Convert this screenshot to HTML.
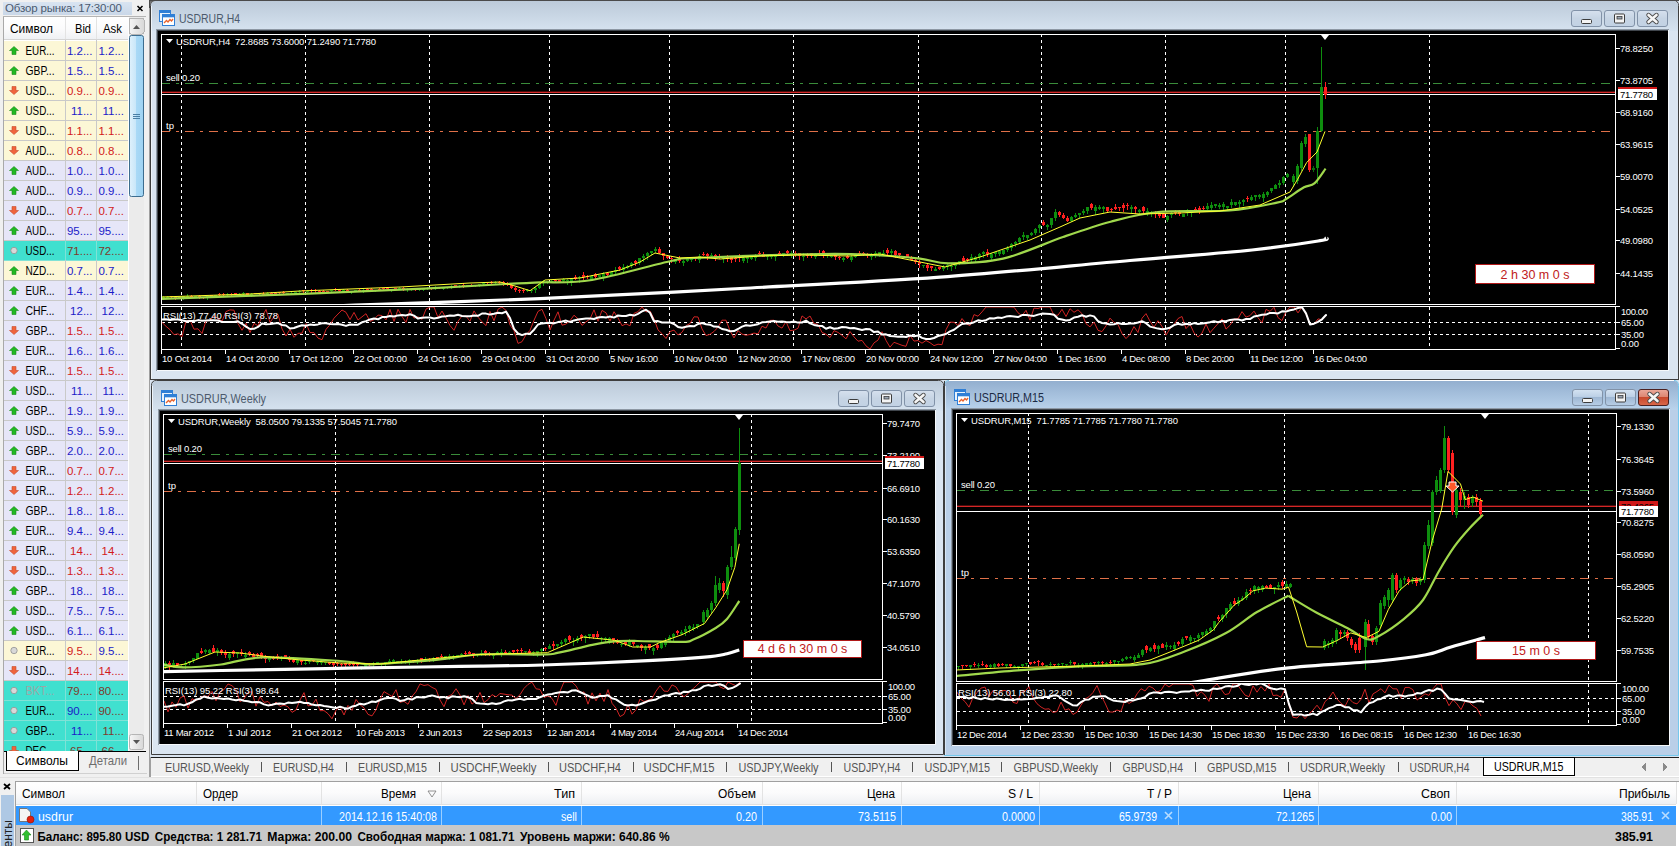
<!DOCTYPE html><html><head><meta charset="utf-8"><style>html,body{margin:0;padding:0;overflow:hidden;background:#d9e3ef}svg{display:block}text{font-family:"Liberation Sans",sans-serif;white-space:pre}</style></head><body><svg width="1679" height="846" viewBox="0 0 1679 846" shape-rendering="crispEdges" font-family="Liberation Sans, sans-serif">
<defs>
<linearGradient id="tbInactive" x1="0" y1="0" x2="0" y2="1"><stop offset="0" stop-color="#bccad9"/><stop offset="1" stop-color="#d6e3f0"/></linearGradient>
<linearGradient id="tbActive" x1="0" y1="0" x2="0" y2="1"><stop offset="0" stop-color="#93afcf"/><stop offset="1" stop-color="#bad3ec"/></linearGradient>
<linearGradient id="mwTitle" x1="0" y1="0" x2="0" y2="1"><stop offset="0" stop-color="#d9e4f1"/><stop offset="1" stop-color="#c9d7e8"/></linearGradient>
<linearGradient id="hdr" x1="0" y1="0" x2="0" y2="1"><stop offset="0" stop-color="#ffffff"/><stop offset="0.5" stop-color="#fbfbfc"/><stop offset="1" stop-color="#eef0f3"/></linearGradient>
<linearGradient id="btn" x1="0" y1="0" x2="0" y2="1"><stop offset="0" stop-color="#d6e1ee"/><stop offset="0.5" stop-color="#c6d4e4"/><stop offset="1" stop-color="#c2d2e4"/></linearGradient>
<linearGradient id="btnA" x1="0" y1="0" x2="0" y2="1"><stop offset="0" stop-color="#d5e3f2"/><stop offset="0.45" stop-color="#bcd0e6"/><stop offset="0.5" stop-color="#9fb8d4"/><stop offset="1" stop-color="#b8cee6"/></linearGradient>
<linearGradient id="btnClose" x1="0" y1="0" x2="0" y2="1"><stop offset="0" stop-color="#eba89a"/><stop offset="0.45" stop-color="#dd8672"/><stop offset="0.5" stop-color="#c8482c"/><stop offset="1" stop-color="#d9694b"/></linearGradient>
<linearGradient id="thumb" x1="0" y1="0" x2="1" y2="0"><stop offset="0" stop-color="#dff1fc"/><stop offset="0.45" stop-color="#c9e7f9"/><stop offset="0.5" stop-color="#a9d9f6"/><stop offset="1" stop-color="#9ed3f3"/></linearGradient>
<linearGradient id="sbtn" x1="0" y1="0" x2="1" y2="0"><stop offset="0" stop-color="#f6f6f6"/><stop offset="1" stop-color="#d8d8d8"/></linearGradient>
</defs>
<rect x="0" y="0" width="1679" height="846" fill="#d9e3ef" />
<rect x="0" y="0" width="149" height="777" fill="#f0f0f0" />
<rect x="149" y="0" width="1" height="777" fill="#a0a0a0" />
<rect x="3" y="2" width="129" height="13" fill="url(#mwTitle)" />
<text x="5" y="12" font-size="11.5" fill="#4a5a70" text-anchor="start" font-weight="normal" textLength="117" lengthAdjust="spacing" >Обзор рынка: 17:30:00</text>
<path d="M137.5,6 L142.5,11 M142.5,6 L137.5,11" stroke="#000" stroke-width="1.5" fill="none" shape-rendering="geometricPrecision"/>
<rect x="3" y="16" width="126" height="736" fill="#ffffff" />
<rect x="3" y="16" width="1" height="736" fill="#a9a9a9" />
<rect x="3" y="16" width="143" height="1" fill="#b4b4b4" />
<rect x="4" y="17" width="124" height="23" fill="url(#hdr)" />
<rect x="65" y="17" width="1" height="23" fill="#e3e3e3" />
<rect x="96" y="17" width="1" height="23" fill="#e3e3e3" />
<rect x="4" y="39" width="124" height="1" fill="#d5d5d5" />
<text x="10" y="33" font-size="12" fill="#000" text-anchor="start" font-weight="normal" textLength="43" lengthAdjust="spacingAndGlyphs" >Символ</text>
<text x="75" y="33" font-size="12" fill="#000" text-anchor="start" font-weight="normal" textLength="16" lengthAdjust="spacingAndGlyphs" >Bid</text>
<text x="103" y="33" font-size="12" fill="#000" text-anchor="start" font-weight="normal" textLength="19" lengthAdjust="spacingAndGlyphs" >Ask</text>
<g>
<clipPath id="mwclip"><rect x="4" y="40" width="124" height="711"/></clipPath>
<g clip-path="url(#mwclip)">
<rect x="4" y="41" width="124" height="19" fill="#fcf7d6" />
<rect x="4" y="60" width="124" height="1" fill="#c9c9c9" />
<rect x="65" y="40" width="1" height="20" fill="#c9c9c9" />
<rect x="96" y="40" width="1" height="20" fill="#c9c9c9" />
<path d="M14,46.5 L18.5,50.5 L16,50.5 L16,54.5 L12,54.5 L12,50.5 L9.5,50.5 Z" fill="#22b822" stroke="#1c8a1c" stroke-width="0.6" shape-rendering="geometricPrecision"/>
<text x="25.5" y="55" font-size="12" fill="#000" text-anchor="start" font-weight="normal" textLength="29" lengthAdjust="spacingAndGlyphs" >EUR...</text>
<text x="92.5" y="55" font-size="11.5" fill="#1b1bc8" text-anchor="end" font-weight="normal" >1.2...</text>
<text x="124" y="55" font-size="11.5" fill="#1b1bc8" text-anchor="end" font-weight="normal" >1.2...</text>
<rect x="4" y="61" width="124" height="19" fill="#fcf7d6" />
<rect x="4" y="80" width="124" height="1" fill="#c9c9c9" />
<rect x="65" y="60" width="1" height="20" fill="#c9c9c9" />
<rect x="96" y="60" width="1" height="20" fill="#c9c9c9" />
<path d="M14,66.5 L18.5,70.5 L16,70.5 L16,74.5 L12,74.5 L12,70.5 L9.5,70.5 Z" fill="#22b822" stroke="#1c8a1c" stroke-width="0.6" shape-rendering="geometricPrecision"/>
<text x="25.5" y="75" font-size="12" fill="#000" text-anchor="start" font-weight="normal" textLength="29" lengthAdjust="spacingAndGlyphs" >GBP...</text>
<text x="92.5" y="75" font-size="11.5" fill="#1b1bc8" text-anchor="end" font-weight="normal" >1.5...</text>
<text x="124" y="75" font-size="11.5" fill="#1b1bc8" text-anchor="end" font-weight="normal" >1.5...</text>
<rect x="4" y="81" width="124" height="19" fill="#fcf7d6" />
<rect x="4" y="100" width="124" height="1" fill="#c9c9c9" />
<rect x="65" y="80" width="1" height="20" fill="#c9c9c9" />
<rect x="96" y="80" width="1" height="20" fill="#c9c9c9" />
<path d="M14,94.5 L18.5,90.5 L16,90.5 L16,86.5 L12,86.5 L12,90.5 L9.5,90.5 Z" fill="#f0643c" stroke="#c84a2a" stroke-width="0.6" shape-rendering="geometricPrecision"/>
<text x="25.5" y="95" font-size="12" fill="#000" text-anchor="start" font-weight="normal" textLength="29" lengthAdjust="spacingAndGlyphs" >USD...</text>
<text x="92.5" y="95" font-size="11.5" fill="#d21a1a" text-anchor="end" font-weight="normal" >0.9...</text>
<text x="124" y="95" font-size="11.5" fill="#d21a1a" text-anchor="end" font-weight="normal" >0.9...</text>
<rect x="4" y="101" width="124" height="19" fill="#fcf7d6" />
<rect x="4" y="120" width="124" height="1" fill="#c9c9c9" />
<rect x="65" y="100" width="1" height="20" fill="#c9c9c9" />
<rect x="96" y="100" width="1" height="20" fill="#c9c9c9" />
<path d="M14,106.5 L18.5,110.5 L16,110.5 L16,114.5 L12,114.5 L12,110.5 L9.5,110.5 Z" fill="#22b822" stroke="#1c8a1c" stroke-width="0.6" shape-rendering="geometricPrecision"/>
<text x="25.5" y="115" font-size="12" fill="#000" text-anchor="start" font-weight="normal" textLength="29" lengthAdjust="spacingAndGlyphs" >USD...</text>
<text x="92.5" y="115" font-size="11.5" fill="#1b1bc8" text-anchor="end" font-weight="normal" >11...</text>
<text x="124" y="115" font-size="11.5" fill="#1b1bc8" text-anchor="end" font-weight="normal" >11...</text>
<rect x="4" y="121" width="124" height="19" fill="#fcf7d6" />
<rect x="4" y="140" width="124" height="1" fill="#c9c9c9" />
<rect x="65" y="120" width="1" height="20" fill="#c9c9c9" />
<rect x="96" y="120" width="1" height="20" fill="#c9c9c9" />
<path d="M14,134.5 L18.5,130.5 L16,130.5 L16,126.5 L12,126.5 L12,130.5 L9.5,130.5 Z" fill="#f0643c" stroke="#c84a2a" stroke-width="0.6" shape-rendering="geometricPrecision"/>
<text x="25.5" y="135" font-size="12" fill="#000" text-anchor="start" font-weight="normal" textLength="29" lengthAdjust="spacingAndGlyphs" >USD...</text>
<text x="92.5" y="135" font-size="11.5" fill="#d21a1a" text-anchor="end" font-weight="normal" >1.1...</text>
<text x="124" y="135" font-size="11.5" fill="#d21a1a" text-anchor="end" font-weight="normal" >1.1...</text>
<rect x="4" y="141" width="124" height="19" fill="#fcf7d6" />
<rect x="4" y="160" width="124" height="1" fill="#c9c9c9" />
<rect x="65" y="140" width="1" height="20" fill="#c9c9c9" />
<rect x="96" y="140" width="1" height="20" fill="#c9c9c9" />
<path d="M14,154.5 L18.5,150.5 L16,150.5 L16,146.5 L12,146.5 L12,150.5 L9.5,150.5 Z" fill="#f0643c" stroke="#c84a2a" stroke-width="0.6" shape-rendering="geometricPrecision"/>
<text x="25.5" y="155" font-size="12" fill="#000" text-anchor="start" font-weight="normal" textLength="29" lengthAdjust="spacingAndGlyphs" >AUD...</text>
<text x="92.5" y="155" font-size="11.5" fill="#d21a1a" text-anchor="end" font-weight="normal" >0.8...</text>
<text x="124" y="155" font-size="11.5" fill="#d21a1a" text-anchor="end" font-weight="normal" >0.8...</text>
<rect x="4" y="161" width="124" height="19" fill="#e6e6f8" />
<rect x="4" y="180" width="124" height="1" fill="#c9c9c9" />
<rect x="65" y="160" width="1" height="20" fill="#c9c9c9" />
<rect x="96" y="160" width="1" height="20" fill="#c9c9c9" />
<path d="M14,166.5 L18.5,170.5 L16,170.5 L16,174.5 L12,174.5 L12,170.5 L9.5,170.5 Z" fill="#22b822" stroke="#1c8a1c" stroke-width="0.6" shape-rendering="geometricPrecision"/>
<text x="25.5" y="175" font-size="12" fill="#000" text-anchor="start" font-weight="normal" textLength="29" lengthAdjust="spacingAndGlyphs" >AUD...</text>
<text x="92.5" y="175" font-size="11.5" fill="#1b1bc8" text-anchor="end" font-weight="normal" >1.0...</text>
<text x="124" y="175" font-size="11.5" fill="#1b1bc8" text-anchor="end" font-weight="normal" >1.0...</text>
<rect x="4" y="181" width="124" height="19" fill="#e6e6f8" />
<rect x="4" y="200" width="124" height="1" fill="#c9c9c9" />
<rect x="65" y="180" width="1" height="20" fill="#c9c9c9" />
<rect x="96" y="180" width="1" height="20" fill="#c9c9c9" />
<path d="M14,186.5 L18.5,190.5 L16,190.5 L16,194.5 L12,194.5 L12,190.5 L9.5,190.5 Z" fill="#22b822" stroke="#1c8a1c" stroke-width="0.6" shape-rendering="geometricPrecision"/>
<text x="25.5" y="195" font-size="12" fill="#000" text-anchor="start" font-weight="normal" textLength="29" lengthAdjust="spacingAndGlyphs" >AUD...</text>
<text x="92.5" y="195" font-size="11.5" fill="#1b1bc8" text-anchor="end" font-weight="normal" >0.9...</text>
<text x="124" y="195" font-size="11.5" fill="#1b1bc8" text-anchor="end" font-weight="normal" >0.9...</text>
<rect x="4" y="201" width="124" height="19" fill="#e6e6f8" />
<rect x="4" y="220" width="124" height="1" fill="#c9c9c9" />
<rect x="65" y="200" width="1" height="20" fill="#c9c9c9" />
<rect x="96" y="200" width="1" height="20" fill="#c9c9c9" />
<path d="M14,214.5 L18.5,210.5 L16,210.5 L16,206.5 L12,206.5 L12,210.5 L9.5,210.5 Z" fill="#f0643c" stroke="#c84a2a" stroke-width="0.6" shape-rendering="geometricPrecision"/>
<text x="25.5" y="215" font-size="12" fill="#000" text-anchor="start" font-weight="normal" textLength="29" lengthAdjust="spacingAndGlyphs" >AUD...</text>
<text x="92.5" y="215" font-size="11.5" fill="#d21a1a" text-anchor="end" font-weight="normal" >0.7...</text>
<text x="124" y="215" font-size="11.5" fill="#d21a1a" text-anchor="end" font-weight="normal" >0.7...</text>
<rect x="4" y="221" width="124" height="19" fill="#e6e6f8" />
<rect x="4" y="240" width="124" height="1" fill="#c9c9c9" />
<rect x="65" y="220" width="1" height="20" fill="#c9c9c9" />
<rect x="96" y="220" width="1" height="20" fill="#c9c9c9" />
<path d="M14,226.5 L18.5,230.5 L16,230.5 L16,234.5 L12,234.5 L12,230.5 L9.5,230.5 Z" fill="#22b822" stroke="#1c8a1c" stroke-width="0.6" shape-rendering="geometricPrecision"/>
<text x="25.5" y="235" font-size="12" fill="#000" text-anchor="start" font-weight="normal" textLength="29" lengthAdjust="spacingAndGlyphs" >AUD...</text>
<text x="92.5" y="235" font-size="11.5" fill="#1b1bc8" text-anchor="end" font-weight="normal" >95....</text>
<text x="124" y="235" font-size="11.5" fill="#1b1bc8" text-anchor="end" font-weight="normal" >95....</text>
<rect x="4" y="241" width="124" height="19" fill="#40e0cf" />
<rect x="4" y="260" width="124" height="1" fill="#7fe2d6" />
<rect x="65" y="240" width="1" height="20" fill="#7fe2d6" />
<rect x="96" y="240" width="1" height="20" fill="#7fe2d6" />
<circle cx="14" cy="250.5" r="3.2" fill="#d8d8d8" stroke="#909090" stroke-width="0.8" shape-rendering="geometricPrecision"/>
<text x="25.5" y="255" font-size="12" fill="#000" text-anchor="start" font-weight="normal" textLength="29" lengthAdjust="spacingAndGlyphs" >USD...</text>
<text x="92.5" y="255" font-size="11.5" fill="#7e3a2c" text-anchor="end" font-weight="normal" >71....</text>
<text x="124" y="255" font-size="11.5" fill="#7e3a2c" text-anchor="end" font-weight="normal" >72....</text>
<rect x="4" y="261" width="124" height="19" fill="#fcf7d6" />
<rect x="4" y="280" width="124" height="1" fill="#c9c9c9" />
<rect x="65" y="260" width="1" height="20" fill="#c9c9c9" />
<rect x="96" y="260" width="1" height="20" fill="#c9c9c9" />
<path d="M14,266.5 L18.5,270.5 L16,270.5 L16,274.5 L12,274.5 L12,270.5 L9.5,270.5 Z" fill="#22b822" stroke="#1c8a1c" stroke-width="0.6" shape-rendering="geometricPrecision"/>
<text x="25.5" y="275" font-size="12" fill="#000" text-anchor="start" font-weight="normal" textLength="29" lengthAdjust="spacingAndGlyphs" >NZD...</text>
<text x="92.5" y="275" font-size="11.5" fill="#1b1bc8" text-anchor="end" font-weight="normal" >0.7...</text>
<text x="124" y="275" font-size="11.5" fill="#1b1bc8" text-anchor="end" font-weight="normal" >0.7...</text>
<rect x="4" y="281" width="124" height="19" fill="#e6e6f8" />
<rect x="4" y="300" width="124" height="1" fill="#c9c9c9" />
<rect x="65" y="280" width="1" height="20" fill="#c9c9c9" />
<rect x="96" y="280" width="1" height="20" fill="#c9c9c9" />
<path d="M14,286.5 L18.5,290.5 L16,290.5 L16,294.5 L12,294.5 L12,290.5 L9.5,290.5 Z" fill="#22b822" stroke="#1c8a1c" stroke-width="0.6" shape-rendering="geometricPrecision"/>
<text x="25.5" y="295" font-size="12" fill="#000" text-anchor="start" font-weight="normal" textLength="29" lengthAdjust="spacingAndGlyphs" >EUR...</text>
<text x="92.5" y="295" font-size="11.5" fill="#1b1bc8" text-anchor="end" font-weight="normal" >1.4...</text>
<text x="124" y="295" font-size="11.5" fill="#1b1bc8" text-anchor="end" font-weight="normal" >1.4...</text>
<rect x="4" y="301" width="124" height="19" fill="#e6e6f8" />
<rect x="4" y="320" width="124" height="1" fill="#c9c9c9" />
<rect x="65" y="300" width="1" height="20" fill="#c9c9c9" />
<rect x="96" y="300" width="1" height="20" fill="#c9c9c9" />
<path d="M14,306.5 L18.5,310.5 L16,310.5 L16,314.5 L12,314.5 L12,310.5 L9.5,310.5 Z" fill="#22b822" stroke="#1c8a1c" stroke-width="0.6" shape-rendering="geometricPrecision"/>
<text x="25.5" y="315" font-size="12" fill="#000" text-anchor="start" font-weight="normal" textLength="29" lengthAdjust="spacingAndGlyphs" >CHF...</text>
<text x="92.5" y="315" font-size="11.5" fill="#1b1bc8" text-anchor="end" font-weight="normal" >12...</text>
<text x="124" y="315" font-size="11.5" fill="#1b1bc8" text-anchor="end" font-weight="normal" >12...</text>
<rect x="4" y="321" width="124" height="19" fill="#e6e6f8" />
<rect x="4" y="340" width="124" height="1" fill="#c9c9c9" />
<rect x="65" y="320" width="1" height="20" fill="#c9c9c9" />
<rect x="96" y="320" width="1" height="20" fill="#c9c9c9" />
<path d="M14,334.5 L18.5,330.5 L16,330.5 L16,326.5 L12,326.5 L12,330.5 L9.5,330.5 Z" fill="#f0643c" stroke="#c84a2a" stroke-width="0.6" shape-rendering="geometricPrecision"/>
<text x="25.5" y="335" font-size="12" fill="#000" text-anchor="start" font-weight="normal" textLength="29" lengthAdjust="spacingAndGlyphs" >GBP...</text>
<text x="92.5" y="335" font-size="11.5" fill="#d21a1a" text-anchor="end" font-weight="normal" >1.5...</text>
<text x="124" y="335" font-size="11.5" fill="#d21a1a" text-anchor="end" font-weight="normal" >1.5...</text>
<rect x="4" y="341" width="124" height="19" fill="#e6e6f8" />
<rect x="4" y="360" width="124" height="1" fill="#c9c9c9" />
<rect x="65" y="340" width="1" height="20" fill="#c9c9c9" />
<rect x="96" y="340" width="1" height="20" fill="#c9c9c9" />
<path d="M14,346.5 L18.5,350.5 L16,350.5 L16,354.5 L12,354.5 L12,350.5 L9.5,350.5 Z" fill="#22b822" stroke="#1c8a1c" stroke-width="0.6" shape-rendering="geometricPrecision"/>
<text x="25.5" y="355" font-size="12" fill="#000" text-anchor="start" font-weight="normal" textLength="29" lengthAdjust="spacingAndGlyphs" >EUR...</text>
<text x="92.5" y="355" font-size="11.5" fill="#1b1bc8" text-anchor="end" font-weight="normal" >1.6...</text>
<text x="124" y="355" font-size="11.5" fill="#1b1bc8" text-anchor="end" font-weight="normal" >1.6...</text>
<rect x="4" y="361" width="124" height="19" fill="#e6e6f8" />
<rect x="4" y="380" width="124" height="1" fill="#c9c9c9" />
<rect x="65" y="360" width="1" height="20" fill="#c9c9c9" />
<rect x="96" y="360" width="1" height="20" fill="#c9c9c9" />
<path d="M14,374.5 L18.5,370.5 L16,370.5 L16,366.5 L12,366.5 L12,370.5 L9.5,370.5 Z" fill="#f0643c" stroke="#c84a2a" stroke-width="0.6" shape-rendering="geometricPrecision"/>
<text x="25.5" y="375" font-size="12" fill="#000" text-anchor="start" font-weight="normal" textLength="29" lengthAdjust="spacingAndGlyphs" >EUR...</text>
<text x="92.5" y="375" font-size="11.5" fill="#d21a1a" text-anchor="end" font-weight="normal" >1.5...</text>
<text x="124" y="375" font-size="11.5" fill="#d21a1a" text-anchor="end" font-weight="normal" >1.5...</text>
<rect x="4" y="381" width="124" height="19" fill="#e6e6f8" />
<rect x="4" y="400" width="124" height="1" fill="#c9c9c9" />
<rect x="65" y="380" width="1" height="20" fill="#c9c9c9" />
<rect x="96" y="380" width="1" height="20" fill="#c9c9c9" />
<path d="M14,386.5 L18.5,390.5 L16,390.5 L16,394.5 L12,394.5 L12,390.5 L9.5,390.5 Z" fill="#22b822" stroke="#1c8a1c" stroke-width="0.6" shape-rendering="geometricPrecision"/>
<text x="25.5" y="395" font-size="12" fill="#000" text-anchor="start" font-weight="normal" textLength="29" lengthAdjust="spacingAndGlyphs" >USD...</text>
<text x="92.5" y="395" font-size="11.5" fill="#1b1bc8" text-anchor="end" font-weight="normal" >11...</text>
<text x="124" y="395" font-size="11.5" fill="#1b1bc8" text-anchor="end" font-weight="normal" >11...</text>
<rect x="4" y="401" width="124" height="19" fill="#e6e6f8" />
<rect x="4" y="420" width="124" height="1" fill="#c9c9c9" />
<rect x="65" y="400" width="1" height="20" fill="#c9c9c9" />
<rect x="96" y="400" width="1" height="20" fill="#c9c9c9" />
<path d="M14,406.5 L18.5,410.5 L16,410.5 L16,414.5 L12,414.5 L12,410.5 L9.5,410.5 Z" fill="#22b822" stroke="#1c8a1c" stroke-width="0.6" shape-rendering="geometricPrecision"/>
<text x="25.5" y="415" font-size="12" fill="#000" text-anchor="start" font-weight="normal" textLength="29" lengthAdjust="spacingAndGlyphs" >GBP...</text>
<text x="92.5" y="415" font-size="11.5" fill="#1b1bc8" text-anchor="end" font-weight="normal" >1.9...</text>
<text x="124" y="415" font-size="11.5" fill="#1b1bc8" text-anchor="end" font-weight="normal" >1.9...</text>
<rect x="4" y="421" width="124" height="19" fill="#e6e6f8" />
<rect x="4" y="440" width="124" height="1" fill="#c9c9c9" />
<rect x="65" y="420" width="1" height="20" fill="#c9c9c9" />
<rect x="96" y="420" width="1" height="20" fill="#c9c9c9" />
<path d="M14,426.5 L18.5,430.5 L16,430.5 L16,434.5 L12,434.5 L12,430.5 L9.5,430.5 Z" fill="#22b822" stroke="#1c8a1c" stroke-width="0.6" shape-rendering="geometricPrecision"/>
<text x="25.5" y="435" font-size="12" fill="#000" text-anchor="start" font-weight="normal" textLength="29" lengthAdjust="spacingAndGlyphs" >USD...</text>
<text x="92.5" y="435" font-size="11.5" fill="#1b1bc8" text-anchor="end" font-weight="normal" >5.9...</text>
<text x="124" y="435" font-size="11.5" fill="#1b1bc8" text-anchor="end" font-weight="normal" >5.9...</text>
<rect x="4" y="441" width="124" height="19" fill="#e6e6f8" />
<rect x="4" y="460" width="124" height="1" fill="#c9c9c9" />
<rect x="65" y="440" width="1" height="20" fill="#c9c9c9" />
<rect x="96" y="440" width="1" height="20" fill="#c9c9c9" />
<path d="M14,446.5 L18.5,450.5 L16,450.5 L16,454.5 L12,454.5 L12,450.5 L9.5,450.5 Z" fill="#22b822" stroke="#1c8a1c" stroke-width="0.6" shape-rendering="geometricPrecision"/>
<text x="25.5" y="455" font-size="12" fill="#000" text-anchor="start" font-weight="normal" textLength="29" lengthAdjust="spacingAndGlyphs" >GBP...</text>
<text x="92.5" y="455" font-size="11.5" fill="#1b1bc8" text-anchor="end" font-weight="normal" >2.0...</text>
<text x="124" y="455" font-size="11.5" fill="#1b1bc8" text-anchor="end" font-weight="normal" >2.0...</text>
<rect x="4" y="461" width="124" height="19" fill="#e6e6f8" />
<rect x="4" y="480" width="124" height="1" fill="#c9c9c9" />
<rect x="65" y="460" width="1" height="20" fill="#c9c9c9" />
<rect x="96" y="460" width="1" height="20" fill="#c9c9c9" />
<path d="M14,474.5 L18.5,470.5 L16,470.5 L16,466.5 L12,466.5 L12,470.5 L9.5,470.5 Z" fill="#f0643c" stroke="#c84a2a" stroke-width="0.6" shape-rendering="geometricPrecision"/>
<text x="25.5" y="475" font-size="12" fill="#000" text-anchor="start" font-weight="normal" textLength="29" lengthAdjust="spacingAndGlyphs" >EUR...</text>
<text x="92.5" y="475" font-size="11.5" fill="#d21a1a" text-anchor="end" font-weight="normal" >0.7...</text>
<text x="124" y="475" font-size="11.5" fill="#d21a1a" text-anchor="end" font-weight="normal" >0.7...</text>
<rect x="4" y="481" width="124" height="19" fill="#e6e6f8" />
<rect x="4" y="500" width="124" height="1" fill="#c9c9c9" />
<rect x="65" y="480" width="1" height="20" fill="#c9c9c9" />
<rect x="96" y="480" width="1" height="20" fill="#c9c9c9" />
<path d="M14,494.5 L18.5,490.5 L16,490.5 L16,486.5 L12,486.5 L12,490.5 L9.5,490.5 Z" fill="#f0643c" stroke="#c84a2a" stroke-width="0.6" shape-rendering="geometricPrecision"/>
<text x="25.5" y="495" font-size="12" fill="#000" text-anchor="start" font-weight="normal" textLength="29" lengthAdjust="spacingAndGlyphs" >EUR...</text>
<text x="92.5" y="495" font-size="11.5" fill="#d21a1a" text-anchor="end" font-weight="normal" >1.2...</text>
<text x="124" y="495" font-size="11.5" fill="#d21a1a" text-anchor="end" font-weight="normal" >1.2...</text>
<rect x="4" y="501" width="124" height="19" fill="#e6e6f8" />
<rect x="4" y="520" width="124" height="1" fill="#c9c9c9" />
<rect x="65" y="500" width="1" height="20" fill="#c9c9c9" />
<rect x="96" y="500" width="1" height="20" fill="#c9c9c9" />
<path d="M14,506.5 L18.5,510.5 L16,510.5 L16,514.5 L12,514.5 L12,510.5 L9.5,510.5 Z" fill="#22b822" stroke="#1c8a1c" stroke-width="0.6" shape-rendering="geometricPrecision"/>
<text x="25.5" y="515" font-size="12" fill="#000" text-anchor="start" font-weight="normal" textLength="29" lengthAdjust="spacingAndGlyphs" >GBP...</text>
<text x="92.5" y="515" font-size="11.5" fill="#1b1bc8" text-anchor="end" font-weight="normal" >1.8...</text>
<text x="124" y="515" font-size="11.5" fill="#1b1bc8" text-anchor="end" font-weight="normal" >1.8...</text>
<rect x="4" y="521" width="124" height="19" fill="#e6e6f8" />
<rect x="4" y="540" width="124" height="1" fill="#c9c9c9" />
<rect x="65" y="520" width="1" height="20" fill="#c9c9c9" />
<rect x="96" y="520" width="1" height="20" fill="#c9c9c9" />
<path d="M14,526.5 L18.5,530.5 L16,530.5 L16,534.5 L12,534.5 L12,530.5 L9.5,530.5 Z" fill="#22b822" stroke="#1c8a1c" stroke-width="0.6" shape-rendering="geometricPrecision"/>
<text x="25.5" y="535" font-size="12" fill="#000" text-anchor="start" font-weight="normal" textLength="29" lengthAdjust="spacingAndGlyphs" >EUR...</text>
<text x="92.5" y="535" font-size="11.5" fill="#1b1bc8" text-anchor="end" font-weight="normal" >9.4...</text>
<text x="124" y="535" font-size="11.5" fill="#1b1bc8" text-anchor="end" font-weight="normal" >9.4...</text>
<rect x="4" y="541" width="124" height="19" fill="#e6e6f8" />
<rect x="4" y="560" width="124" height="1" fill="#c9c9c9" />
<rect x="65" y="540" width="1" height="20" fill="#c9c9c9" />
<rect x="96" y="540" width="1" height="20" fill="#c9c9c9" />
<path d="M14,554.5 L18.5,550.5 L16,550.5 L16,546.5 L12,546.5 L12,550.5 L9.5,550.5 Z" fill="#f0643c" stroke="#c84a2a" stroke-width="0.6" shape-rendering="geometricPrecision"/>
<text x="25.5" y="555" font-size="12" fill="#000" text-anchor="start" font-weight="normal" textLength="29" lengthAdjust="spacingAndGlyphs" >EUR...</text>
<text x="92.5" y="555" font-size="11.5" fill="#d21a1a" text-anchor="end" font-weight="normal" >14...</text>
<text x="124" y="555" font-size="11.5" fill="#d21a1a" text-anchor="end" font-weight="normal" >14...</text>
<rect x="4" y="561" width="124" height="19" fill="#e6e6f8" />
<rect x="4" y="580" width="124" height="1" fill="#c9c9c9" />
<rect x="65" y="560" width="1" height="20" fill="#c9c9c9" />
<rect x="96" y="560" width="1" height="20" fill="#c9c9c9" />
<path d="M14,574.5 L18.5,570.5 L16,570.5 L16,566.5 L12,566.5 L12,570.5 L9.5,570.5 Z" fill="#f0643c" stroke="#c84a2a" stroke-width="0.6" shape-rendering="geometricPrecision"/>
<text x="25.5" y="575" font-size="12" fill="#000" text-anchor="start" font-weight="normal" textLength="29" lengthAdjust="spacingAndGlyphs" >USD...</text>
<text x="92.5" y="575" font-size="11.5" fill="#d21a1a" text-anchor="end" font-weight="normal" >1.3...</text>
<text x="124" y="575" font-size="11.5" fill="#d21a1a" text-anchor="end" font-weight="normal" >1.3...</text>
<rect x="4" y="581" width="124" height="19" fill="#e6e6f8" />
<rect x="4" y="600" width="124" height="1" fill="#c9c9c9" />
<rect x="65" y="580" width="1" height="20" fill="#c9c9c9" />
<rect x="96" y="580" width="1" height="20" fill="#c9c9c9" />
<path d="M14,586.5 L18.5,590.5 L16,590.5 L16,594.5 L12,594.5 L12,590.5 L9.5,590.5 Z" fill="#22b822" stroke="#1c8a1c" stroke-width="0.6" shape-rendering="geometricPrecision"/>
<text x="25.5" y="595" font-size="12" fill="#000" text-anchor="start" font-weight="normal" textLength="29" lengthAdjust="spacingAndGlyphs" >GBP...</text>
<text x="92.5" y="595" font-size="11.5" fill="#1b1bc8" text-anchor="end" font-weight="normal" >18...</text>
<text x="124" y="595" font-size="11.5" fill="#1b1bc8" text-anchor="end" font-weight="normal" >18...</text>
<rect x="4" y="601" width="124" height="19" fill="#e6e6f8" />
<rect x="4" y="620" width="124" height="1" fill="#c9c9c9" />
<rect x="65" y="600" width="1" height="20" fill="#c9c9c9" />
<rect x="96" y="600" width="1" height="20" fill="#c9c9c9" />
<path d="M14,606.5 L18.5,610.5 L16,610.5 L16,614.5 L12,614.5 L12,610.5 L9.5,610.5 Z" fill="#22b822" stroke="#1c8a1c" stroke-width="0.6" shape-rendering="geometricPrecision"/>
<text x="25.5" y="615" font-size="12" fill="#000" text-anchor="start" font-weight="normal" textLength="29" lengthAdjust="spacingAndGlyphs" >USD...</text>
<text x="92.5" y="615" font-size="11.5" fill="#1b1bc8" text-anchor="end" font-weight="normal" >7.5...</text>
<text x="124" y="615" font-size="11.5" fill="#1b1bc8" text-anchor="end" font-weight="normal" >7.5...</text>
<rect x="4" y="621" width="124" height="19" fill="#e6e6f8" />
<rect x="4" y="640" width="124" height="1" fill="#c9c9c9" />
<rect x="65" y="620" width="1" height="20" fill="#c9c9c9" />
<rect x="96" y="620" width="1" height="20" fill="#c9c9c9" />
<path d="M14,626.5 L18.5,630.5 L16,630.5 L16,634.5 L12,634.5 L12,630.5 L9.5,630.5 Z" fill="#22b822" stroke="#1c8a1c" stroke-width="0.6" shape-rendering="geometricPrecision"/>
<text x="25.5" y="635" font-size="12" fill="#000" text-anchor="start" font-weight="normal" textLength="29" lengthAdjust="spacingAndGlyphs" >USD...</text>
<text x="92.5" y="635" font-size="11.5" fill="#1b1bc8" text-anchor="end" font-weight="normal" >6.1...</text>
<text x="124" y="635" font-size="11.5" fill="#1b1bc8" text-anchor="end" font-weight="normal" >6.1...</text>
<rect x="4" y="641" width="124" height="19" fill="#fcf7d6" />
<rect x="4" y="660" width="124" height="1" fill="#c9c9c9" />
<rect x="65" y="640" width="1" height="20" fill="#c9c9c9" />
<rect x="96" y="640" width="1" height="20" fill="#c9c9c9" />
<circle cx="14" cy="650.5" r="3.2" fill="#d8d8d8" stroke="#909090" stroke-width="0.8" shape-rendering="geometricPrecision"/>
<text x="25.5" y="655" font-size="12" fill="#000" text-anchor="start" font-weight="normal" textLength="29" lengthAdjust="spacingAndGlyphs" >EUR...</text>
<text x="92.5" y="655" font-size="11.5" fill="#d21a1a" text-anchor="end" font-weight="normal" >9.5...</text>
<text x="124" y="655" font-size="11.5" fill="#1b1bc8" text-anchor="end" font-weight="normal" >9.5...</text>
<rect x="4" y="661" width="124" height="19" fill="#e6e6f8" />
<rect x="4" y="680" width="124" height="1" fill="#c9c9c9" />
<rect x="65" y="660" width="1" height="20" fill="#c9c9c9" />
<rect x="96" y="660" width="1" height="20" fill="#c9c9c9" />
<path d="M14,674.5 L18.5,670.5 L16,670.5 L16,666.5 L12,666.5 L12,670.5 L9.5,670.5 Z" fill="#f0643c" stroke="#c84a2a" stroke-width="0.6" shape-rendering="geometricPrecision"/>
<text x="25.5" y="675" font-size="12" fill="#000" text-anchor="start" font-weight="normal" textLength="29" lengthAdjust="spacingAndGlyphs" >USD...</text>
<text x="92.5" y="675" font-size="11.5" fill="#d21a1a" text-anchor="end" font-weight="normal" >14....</text>
<text x="124" y="675" font-size="11.5" fill="#d21a1a" text-anchor="end" font-weight="normal" >14....</text>
<rect x="4" y="681" width="124" height="19" fill="#40e0cf" />
<rect x="4" y="700" width="124" height="1" fill="#7fe2d6" />
<rect x="65" y="680" width="1" height="20" fill="#7fe2d6" />
<rect x="96" y="680" width="1" height="20" fill="#7fe2d6" />
<circle cx="14" cy="690.5" r="3.2" fill="#d8d8d8" stroke="#909090" stroke-width="0.8" shape-rendering="geometricPrecision"/>
<text x="25.5" y="695" font-size="12" fill="#9aa8a6" text-anchor="start" font-weight="normal" textLength="29" lengthAdjust="spacingAndGlyphs" >BKT...</text>
<text x="92.5" y="695" font-size="11.5" fill="#7e3a2c" text-anchor="end" font-weight="normal" >79....</text>
<text x="124" y="695" font-size="11.5" fill="#7e3a2c" text-anchor="end" font-weight="normal" >80....</text>
<rect x="4" y="701" width="124" height="19" fill="#40e0cf" />
<rect x="4" y="720" width="124" height="1" fill="#7fe2d6" />
<rect x="65" y="700" width="1" height="20" fill="#7fe2d6" />
<rect x="96" y="700" width="1" height="20" fill="#7fe2d6" />
<circle cx="14" cy="710.5" r="3.2" fill="#d8d8d8" stroke="#909090" stroke-width="0.8" shape-rendering="geometricPrecision"/>
<text x="25.5" y="715" font-size="12" fill="#000" text-anchor="start" font-weight="normal" textLength="29" lengthAdjust="spacingAndGlyphs" >EUR...</text>
<text x="92.5" y="715" font-size="11.5" fill="#1b1bc8" text-anchor="end" font-weight="normal" >90....</text>
<text x="124" y="715" font-size="11.5" fill="#7e3a2c" text-anchor="end" font-weight="normal" >90....</text>
<rect x="4" y="721" width="124" height="19" fill="#40e0cf" />
<rect x="4" y="740" width="124" height="1" fill="#7fe2d6" />
<rect x="65" y="720" width="1" height="20" fill="#7fe2d6" />
<rect x="96" y="720" width="1" height="20" fill="#7fe2d6" />
<circle cx="14" cy="730.5" r="3.2" fill="#d8d8d8" stroke="#909090" stroke-width="0.8" shape-rendering="geometricPrecision"/>
<text x="25.5" y="735" font-size="12" fill="#000" text-anchor="start" font-weight="normal" textLength="29" lengthAdjust="spacingAndGlyphs" >GBP...</text>
<text x="92.5" y="735" font-size="11.5" fill="#1b1bc8" text-anchor="end" font-weight="normal" >11...</text>
<text x="124" y="735" font-size="11.5" fill="#7e3a2c" text-anchor="end" font-weight="normal" >11...</text>
<rect x="4" y="741" width="124" height="19" fill="#40e0cf" />
<rect x="4" y="760" width="124" height="1" fill="#7fe2d6" />
<rect x="65" y="740" width="1" height="20" fill="#7fe2d6" />
<rect x="96" y="740" width="1" height="20" fill="#7fe2d6" />
<path d="M14,754.5 L18.5,750.5 L16,750.5 L16,746.5 L12,746.5 L12,750.5 L9.5,750.5 Z" fill="#f0643c" stroke="#c84a2a" stroke-width="0.6" shape-rendering="geometricPrecision"/>
<text x="25.5" y="755" font-size="12" fill="#000" text-anchor="start" font-weight="normal" textLength="29" lengthAdjust="spacingAndGlyphs" >DEC...</text>
<text x="92.5" y="755" font-size="11.5" fill="#7e3a2c" text-anchor="end" font-weight="normal" >65...</text>
<text x="124" y="755" font-size="11.5" fill="#7e3a2c" text-anchor="end" font-weight="normal" >66...</text>
</g></g>
<rect x="129" y="17" width="15" height="734" fill="#ebebeb" />
<rect x="129" y="18" width="15" height="16" fill="url(#sbtn)" rx="2" stroke="#b5b5b5" stroke-width="1"/>
<path d="M133,29 L136.5,25 L140,29 Z" fill="#555" shape-rendering="geometricPrecision"/>
<rect x="129.5" y="35.5" width="14" height="161" fill="url(#thumb)" rx="2" stroke="#3d6d8f" stroke-width="1" shape-rendering="geometricPrecision"/>
<rect x="133" y="114" width="7" height="1" fill="#4a7fa5" />
<rect x="133" y="116" width="7" height="1" fill="#4a7fa5" />
<rect x="133" y="118" width="7" height="1" fill="#4a7fa5" />
<rect x="129.5" y="734.5" width="14" height="15" fill="url(#sbtn)" rx="2" stroke="#b5b5b5" stroke-width="1" shape-rendering="geometricPrecision"/>
<path d="M133,740 L140,740 L136.5,744 Z" fill="#555" shape-rendering="geometricPrecision"/>
<rect x="3" y="752" width="143" height="22" fill="#f0f0f0" />
<rect x="4" y="751" width="142" height="1" fill="#000" />
<rect x="6" y="751" width="73" height="20" fill="#ffffff" />
<rect x="6" y="751" width="1" height="20" fill="#000" />
<rect x="78" y="751" width="1" height="20" fill="#000" />
<rect x="6" y="770" width="73" height="1" fill="#000" />
<text x="16" y="765" font-size="12" fill="#000" text-anchor="start" font-weight="normal" textLength="52" lengthAdjust="spacingAndGlyphs" >Символы</text>
<text x="89" y="765" font-size="12" fill="#6d6d6d" text-anchor="start" font-weight="normal" textLength="38" lengthAdjust="spacingAndGlyphs" >Детали</text>
<rect x="138" y="756" width="1" height="14" fill="#6d6d6d" />
<rect x="3" y="773" width="144" height="1" fill="#d0d0d0" />
<rect x="3" y="752" width="1" height="22" fill="#a9a9a9" />
<path d="M150.5,379.5 L150.5,5.5 Q150.5,0.5 155.5,0.5 L1673.5,0.5 Q1678.5,0.5 1678.5,5.5 L1678.5,379.5 Z" fill="#dae5f1" stroke="#3e3e3e" stroke-width="1" shape-rendering="geometricPrecision"/>
<path d="M151,31 L151,6 Q151,1 156,1 L1673,1 Q1678,1 1678,6 L1678,31 Z" fill="url(#tbInactive)" shape-rendering="geometricPrecision"/>
<rect x="151" y="6" width="1" height="373" fill="#eef4fa" />
<rect x="158" y="31" width="1510" height="339" fill="#000" />
<rect x="156" y="29" width="1513" height="1" fill="#8d98a4" />
<rect x="156" y="29" width="1" height="342" fill="#8d98a4" />
<rect x="157" y="30" width="1512" height="1" fill="#40464d" />
<rect x="157" y="30" width="1" height="341" fill="#40464d" />
<rect x="157" y="370" width="1512" height="1" fill="#f6f9fc" />
<rect x="1668" y="30" width="1" height="341" fill="#f6f9fc" />
<rect x="159" y="10" width="12" height="12" fill="#2f7fd6" />
<rect x="160" y="13" width="10" height="8" fill="#e8f2fc" />
<rect x="162" y="14" width="13" height="12" fill="#2f7fd6" />
<rect x="163" y="17" width="11" height="8" fill="#ffffff" />
<rect x="163" y="17" width="11" height="1" fill="#bcd6f2" />
<polyline points="164,23 166.5,20.5 168,22 170,19.5 171.5,21 173,19" fill="none" stroke="#e8622c" stroke-width="1.3" shape-rendering="geometricPrecision"/>
<text x="179" y="23" font-size="12.5" fill="#4c5a6c" text-anchor="start" font-weight="normal" textLength="61" lengthAdjust="spacingAndGlyphs" >USDRUR,H4</text>
<rect x="1571.5" y="10.5" width="30" height="16" rx="2.5" fill="url(#btn)" stroke="#8192a8" stroke-width="1" shape-rendering="geometricPrecision"/>
<rect x="1581.5" y="19.5" width="10" height="4" rx="1" fill="#f4f4f4" stroke="#3c3c3c" stroke-width="1" shape-rendering="geometricPrecision"/>
<rect x="1604.5" y="10.5" width="30" height="16" rx="2.5" fill="url(#btn)" stroke="#8192a8" stroke-width="1" shape-rendering="geometricPrecision"/>
<rect x="1614.5" y="14.0" width="10" height="9" rx="1" fill="#f4f4f4" stroke="#3c3c3c" stroke-width="1" shape-rendering="geometricPrecision"/>
<rect x="1617.0" y="16.5" width="5" height="2.5" fill="#9aa6b4" stroke="#3c3c3c" stroke-width="0.8" shape-rendering="geometricPrecision"/>
<rect x="1637.5" y="10.5" width="30" height="16" rx="2.5" fill="url(#btn)" stroke="#8192a8" stroke-width="1" shape-rendering="geometricPrecision"/>
<path d="M1648.5,15.0 L1656.5,22.0 M1656.5,15.0 L1648.5,22.0" stroke="#4a4a4a" stroke-width="4.4" stroke-linecap="round" shape-rendering="geometricPrecision"/>
<path d="M1648.5,15.0 L1656.5,22.0 M1656.5,15.0 L1648.5,22.0" stroke="#f6f6f6" stroke-width="2.6" stroke-linecap="round" shape-rendering="geometricPrecision"/>
<rect x="149" y="0" width="1530" height="1" fill="#4a4a4a" />
<rect x="149" y="0" width="1" height="8" fill="#4a4a4a" />
<path d="M150,1 L155,1 Q151,1.5 150.5,6 Z" fill="#6a6a6a" shape-rendering="geometricPrecision"/>
<path d="M151.5,754.5 L151.5,385.5 Q151.5,380.5 156.5,380.5 L938.5,380.5 Q943.5,380.5 943.5,385.5 L943.5,754.5 Z" fill="#dae5f1" stroke="#3e3e3e" stroke-width="1" shape-rendering="geometricPrecision"/>
<path d="M152,411 L152,386 Q152,381 157,381 L938,381 Q943,381 943,386 L943,411 Z" fill="url(#tbInactive)" shape-rendering="geometricPrecision"/>
<rect x="152" y="386" width="1" height="368" fill="#eef4fa" />
<rect x="160" y="411" width="775" height="333" fill="#000" />
<rect x="158" y="409" width="778" height="1" fill="#8d98a4" />
<rect x="158" y="409" width="1" height="336" fill="#8d98a4" />
<rect x="159" y="410" width="777" height="1" fill="#40464d" />
<rect x="159" y="410" width="1" height="335" fill="#40464d" />
<rect x="159" y="744" width="777" height="1" fill="#f6f9fc" />
<rect x="935" y="410" width="1" height="335" fill="#f6f9fc" />
<rect x="161" y="390" width="12" height="12" fill="#2f7fd6" />
<rect x="162" y="393" width="10" height="8" fill="#e8f2fc" />
<rect x="164" y="394" width="13" height="12" fill="#2f7fd6" />
<rect x="165" y="397" width="11" height="8" fill="#ffffff" />
<rect x="165" y="397" width="11" height="1" fill="#bcd6f2" />
<polyline points="166,403 168.5,400.5 170,402 172,399.5 173.5,401 175,399" fill="none" stroke="#e8622c" stroke-width="1.3" shape-rendering="geometricPrecision"/>
<text x="181" y="403" font-size="12.5" fill="#4c5a6c" text-anchor="start" font-weight="normal" textLength="85" lengthAdjust="spacingAndGlyphs" >USDRUR,Weekly</text>
<rect x="838.5" y="390.5" width="30" height="16" rx="2.5" fill="url(#btn)" stroke="#8192a8" stroke-width="1" shape-rendering="geometricPrecision"/>
<rect x="848.5" y="399.5" width="10" height="4" rx="1" fill="#f4f4f4" stroke="#3c3c3c" stroke-width="1" shape-rendering="geometricPrecision"/>
<rect x="871.5" y="390.5" width="30" height="16" rx="2.5" fill="url(#btn)" stroke="#8192a8" stroke-width="1" shape-rendering="geometricPrecision"/>
<rect x="881.5" y="394.0" width="10" height="9" rx="1" fill="#f4f4f4" stroke="#3c3c3c" stroke-width="1" shape-rendering="geometricPrecision"/>
<rect x="884.0" y="396.5" width="5" height="2.5" fill="#9aa6b4" stroke="#3c3c3c" stroke-width="0.8" shape-rendering="geometricPrecision"/>
<rect x="904.5" y="390.5" width="30" height="16" rx="2.5" fill="url(#btn)" stroke="#8192a8" stroke-width="1" shape-rendering="geometricPrecision"/>
<path d="M915.5,395.0 L923.5,402.0 M923.5,395.0 L915.5,402.0" stroke="#4a4a4a" stroke-width="4.4" stroke-linecap="round" shape-rendering="geometricPrecision"/>
<path d="M915.5,395.0 L923.5,402.0 M923.5,395.0 L915.5,402.0" stroke="#f6f6f6" stroke-width="2.6" stroke-linecap="round" shape-rendering="geometricPrecision"/>
<path d="M944.5,755.5 L944.5,385.5 Q944.5,380.5 949.5,380.5 L1673.5,380.5 Q1678.5,380.5 1678.5,385.5 L1678.5,755.5 Z" fill="#b9cfe8" stroke="#74c8ec" stroke-width="1" shape-rendering="geometricPrecision"/>
<path d="M945,410 L945,386 Q945,381 950,381 L1673,381 Q1678,381 1678,386 L1678,410 Z" fill="url(#tbActive)" shape-rendering="geometricPrecision"/>
<rect x="945" y="386" width="1" height="369" fill="#d7e6f5" />
<rect x="949" y="380" width="725" height="1" fill="#ffffff" />
<rect x="953" y="410" width="716" height="335" fill="#000" />
<rect x="951" y="408" width="719" height="1" fill="#8d98a4" />
<rect x="951" y="408" width="1" height="338" fill="#8d98a4" />
<rect x="952" y="409" width="718" height="1" fill="#40464d" />
<rect x="952" y="409" width="1" height="337" fill="#40464d" />
<rect x="952" y="745" width="718" height="1" fill="#f6f9fc" />
<rect x="1669" y="409" width="1" height="337" fill="#f6f9fc" />
<rect x="954" y="389" width="12" height="12" fill="#2f7fd6" />
<rect x="955" y="392" width="10" height="8" fill="#e8f2fc" />
<rect x="957" y="393" width="13" height="12" fill="#2f7fd6" />
<rect x="958" y="396" width="11" height="8" fill="#ffffff" />
<rect x="958" y="396" width="11" height="1" fill="#bcd6f2" />
<polyline points="959,402 961.5,399.5 963,401 965,398.5 966.5,400 968,398" fill="none" stroke="#e8622c" stroke-width="1.3" shape-rendering="geometricPrecision"/>
<text x="974" y="402" font-size="12.5" fill="#1b2a44" text-anchor="start" font-weight="normal" textLength="70" lengthAdjust="spacingAndGlyphs" >USDRUR,M15</text>
<rect x="1572.5" y="389.5" width="30" height="16" rx="2.5" fill="url(#btnA)" stroke="#8192a8" stroke-width="1" shape-rendering="geometricPrecision"/>
<rect x="1582.5" y="398.5" width="10" height="4" rx="1" fill="#f4f4f4" stroke="#3c3c3c" stroke-width="1" shape-rendering="geometricPrecision"/>
<rect x="1605.5" y="389.5" width="30" height="16" rx="2.5" fill="url(#btnA)" stroke="#8192a8" stroke-width="1" shape-rendering="geometricPrecision"/>
<rect x="1615.5" y="393.0" width="10" height="9" rx="1" fill="#f4f4f4" stroke="#3c3c3c" stroke-width="1" shape-rendering="geometricPrecision"/>
<rect x="1618.0" y="395.5" width="5" height="2.5" fill="#9aa6b4" stroke="#3c3c3c" stroke-width="0.8" shape-rendering="geometricPrecision"/>
<rect x="1638.5" y="389.5" width="30" height="16" rx="2.5" fill="url(#btnClose)" stroke="#4a2020" stroke-width="1" shape-rendering="geometricPrecision"/>
<path d="M1649.5,394.0 L1657.5,401.0 M1657.5,394.0 L1649.5,401.0" stroke="#4a4a4a" stroke-width="4.4" stroke-linecap="round" shape-rendering="geometricPrecision"/>
<path d="M1649.5,394.0 L1657.5,401.0 M1657.5,394.0 L1649.5,401.0" stroke="#f6f6f6" stroke-width="2.6" stroke-linecap="round" shape-rendering="geometricPrecision"/>
<rect x="944" y="381" width="1" height="374" fill="#3e3e3e" />
<rect x="150" y="379" width="1529" height="1" fill="#3e3e3e" />
<clipPath id="cm1"><rect x="162" y="35" width="1453" height="269"/></clipPath>
<clipPath id="cr1"><rect x="162" y="307" width="1453" height="42"/></clipPath>
<line x1="181.5" y1="34" x2="181.5" y2="304" stroke="#fff" stroke-width="1" stroke-dasharray="3 3"/>
<line x1="181.5" y1="307" x2="181.5" y2="349" stroke="#fff" stroke-width="1" stroke-dasharray="3 3"/>
<line x1="305.5" y1="34" x2="305.5" y2="304" stroke="#fff" stroke-width="1" stroke-dasharray="3 3"/>
<line x1="305.5" y1="307" x2="305.5" y2="349" stroke="#fff" stroke-width="1" stroke-dasharray="3 3"/>
<line x1="429.5" y1="34" x2="429.5" y2="304" stroke="#fff" stroke-width="1" stroke-dasharray="3 3"/>
<line x1="429.5" y1="307" x2="429.5" y2="349" stroke="#fff" stroke-width="1" stroke-dasharray="3 3"/>
<line x1="549.5" y1="34" x2="549.5" y2="304" stroke="#fff" stroke-width="1" stroke-dasharray="3 3"/>
<line x1="549.5" y1="307" x2="549.5" y2="349" stroke="#fff" stroke-width="1" stroke-dasharray="3 3"/>
<line x1="669.5" y1="34" x2="669.5" y2="304" stroke="#fff" stroke-width="1" stroke-dasharray="3 3"/>
<line x1="669.5" y1="307" x2="669.5" y2="349" stroke="#fff" stroke-width="1" stroke-dasharray="3 3"/>
<line x1="793.5" y1="34" x2="793.5" y2="304" stroke="#fff" stroke-width="1" stroke-dasharray="3 3"/>
<line x1="793.5" y1="307" x2="793.5" y2="349" stroke="#fff" stroke-width="1" stroke-dasharray="3 3"/>
<line x1="918.5" y1="34" x2="918.5" y2="304" stroke="#fff" stroke-width="1" stroke-dasharray="3 3"/>
<line x1="918.5" y1="307" x2="918.5" y2="349" stroke="#fff" stroke-width="1" stroke-dasharray="3 3"/>
<line x1="1041.5" y1="34" x2="1041.5" y2="304" stroke="#fff" stroke-width="1" stroke-dasharray="3 3"/>
<line x1="1041.5" y1="307" x2="1041.5" y2="349" stroke="#fff" stroke-width="1" stroke-dasharray="3 3"/>
<line x1="1165.5" y1="34" x2="1165.5" y2="304" stroke="#fff" stroke-width="1" stroke-dasharray="3 3"/>
<line x1="1165.5" y1="307" x2="1165.5" y2="349" stroke="#fff" stroke-width="1" stroke-dasharray="3 3"/>
<line x1="1285.5" y1="34" x2="1285.5" y2="304" stroke="#fff" stroke-width="1" stroke-dasharray="3 3"/>
<line x1="1285.5" y1="307" x2="1285.5" y2="349" stroke="#fff" stroke-width="1" stroke-dasharray="3 3"/>
<line x1="1429.5" y1="34" x2="1429.5" y2="304" stroke="#fff" stroke-width="1" stroke-dasharray="3 3"/>
<line x1="1429.5" y1="307" x2="1429.5" y2="349" stroke="#fff" stroke-width="1" stroke-dasharray="3 3"/>
<line x1="162" y1="322.5" x2="1615" y2="322.5" stroke="#fff" stroke-width="1" stroke-dasharray="3 3"/>
<line x1="162" y1="334.5" x2="1615" y2="334.5" stroke="#fff" stroke-width="1" stroke-dasharray="3 3"/>
<g clip-path="url(#cm1)">
<line x1="162" y1="83.5" x2="1615" y2="83.5" stroke="#3a8c3a" stroke-width="1" stroke-dasharray="9 6 3 6" stroke-dashoffset="1"/>
<line x1="162" y1="131.5" x2="1615" y2="131.5" stroke="#e07048" stroke-width="1" stroke-dasharray="9 6 3 6" stroke-dashoffset="1"/>
<rect x="162" y="91" width="1453" height="1" fill="#4a0c0c" />
<rect x="162" y="92" width="1453" height="1" fill="#d42626" />
<rect x="162" y="94" width="1453" height="1" fill="#ffffff" />
<rect x="163" y="296" width="1" height="4" fill="#0e8e0e" />
<rect x="162" y="297" width="3" height="1" fill="#0e8e0e" />
<rect x="167" y="296" width="1" height="3" fill="#0e8e0e" />
<rect x="166" y="297" width="3" height="2" fill="#0e8e0e" />
<rect x="171" y="296" width="1" height="3" fill="#ff2020" />
<rect x="170" y="296" width="3" height="1" fill="#ff2020" />
<rect x="175" y="296" width="1" height="4" fill="#ff2020" />
<rect x="174" y="297" width="3" height="1" fill="#ff2020" />
<rect x="179" y="297" width="1" height="2" fill="#ff2020" />
<rect x="178" y="297" width="3" height="1" fill="#ff2020" />
<rect x="183" y="296" width="1" height="4" fill="#0e8e0e" />
<rect x="182" y="296" width="3" height="1" fill="#0e8e0e" />
<rect x="187" y="294" width="1" height="5" fill="#0e8e0e" />
<rect x="186" y="296" width="3" height="1" fill="#0e8e0e" />
<rect x="191" y="295" width="1" height="3" fill="#ff2020" />
<rect x="190" y="296" width="3" height="1" fill="#ff2020" />
<rect x="195" y="296" width="1" height="2" fill="#0e8e0e" />
<rect x="194" y="296" width="3" height="1" fill="#0e8e0e" />
<rect x="199" y="295" width="1" height="4" fill="#ff2020" />
<rect x="198" y="296" width="3" height="1" fill="#ff2020" />
<rect x="203" y="297" width="1" height="2" fill="#ff2020" />
<rect x="202" y="297" width="3" height="1" fill="#ff2020" />
<rect x="207" y="296" width="1" height="4" fill="#0e8e0e" />
<rect x="206" y="296" width="3" height="1" fill="#0e8e0e" />
<rect x="211" y="295" width="1" height="3" fill="#ff2020" />
<rect x="210" y="295" width="3" height="1" fill="#ff2020" />
<rect x="215" y="295" width="1" height="2" fill="#0e8e0e" />
<rect x="214" y="295" width="3" height="1" fill="#0e8e0e" />
<rect x="219" y="293" width="1" height="4" fill="#ff2020" />
<rect x="218" y="294" width="3" height="1" fill="#ff2020" />
<rect x="223" y="293" width="1" height="3" fill="#ff2020" />
<rect x="222" y="294" width="3" height="1" fill="#ff2020" />
<rect x="227" y="293" width="1" height="3" fill="#0e8e0e" />
<rect x="226" y="294" width="3" height="1" fill="#0e8e0e" />
<rect x="231" y="293" width="1" height="3" fill="#ff2020" />
<rect x="230" y="294" width="3" height="1" fill="#ff2020" />
<rect x="235" y="293" width="1" height="2" fill="#ff2020" />
<rect x="234" y="293" width="3" height="1" fill="#ff2020" />
<rect x="239" y="293" width="1" height="3" fill="#0e8e0e" />
<rect x="238" y="294" width="3" height="1" fill="#0e8e0e" />
<rect x="243" y="292" width="1" height="4" fill="#0e8e0e" />
<rect x="242" y="293" width="3" height="1" fill="#0e8e0e" />
<rect x="247" y="293" width="1" height="3" fill="#ff2020" />
<rect x="246" y="293" width="3" height="2" fill="#ff2020" />
<rect x="251" y="293" width="1" height="4" fill="#0e8e0e" />
<rect x="250" y="294" width="3" height="1" fill="#0e8e0e" />
<rect x="255" y="293" width="1" height="1" fill="#ff2020" />
<rect x="254" y="293" width="3" height="1" fill="#ff2020" />
<rect x="259" y="293" width="1" height="3" fill="#ff2020" />
<rect x="258" y="293" width="3" height="1" fill="#ff2020" />
<rect x="263" y="292" width="1" height="3" fill="#ff2020" />
<rect x="262" y="294" width="3" height="1" fill="#ff2020" />
<rect x="267" y="292" width="1" height="3" fill="#0e8e0e" />
<rect x="266" y="293" width="3" height="1" fill="#0e8e0e" />
<rect x="271" y="292" width="1" height="4" fill="#ff2020" />
<rect x="270" y="293" width="3" height="1" fill="#ff2020" />
<rect x="275" y="292" width="1" height="3" fill="#ff2020" />
<rect x="274" y="293" width="3" height="1" fill="#ff2020" />
<rect x="279" y="292" width="1" height="3" fill="#ff2020" />
<rect x="278" y="292" width="3" height="1" fill="#ff2020" />
<rect x="283" y="291" width="1" height="3" fill="#ff2020" />
<rect x="282" y="292" width="3" height="1" fill="#ff2020" />
<rect x="287" y="293" width="1" height="1" fill="#0e8e0e" />
<rect x="286" y="293" width="3" height="1" fill="#0e8e0e" />
<rect x="291" y="292" width="1" height="3" fill="#0e8e0e" />
<rect x="290" y="293" width="3" height="1" fill="#0e8e0e" />
<rect x="295" y="292" width="1" height="2" fill="#0e8e0e" />
<rect x="294" y="292" width="3" height="1" fill="#0e8e0e" />
<rect x="299" y="290" width="1" height="4" fill="#0e8e0e" />
<rect x="298" y="291" width="3" height="1" fill="#0e8e0e" />
<rect x="303" y="290" width="1" height="3" fill="#ff2020" />
<rect x="302" y="290" width="3" height="1" fill="#ff2020" />
<rect x="307" y="290" width="1" height="3" fill="#0e8e0e" />
<rect x="306" y="291" width="3" height="1" fill="#0e8e0e" />
<rect x="311" y="289" width="1" height="4" fill="#ff2020" />
<rect x="310" y="290" width="3" height="1" fill="#ff2020" />
<rect x="315" y="289" width="1" height="4" fill="#ff2020" />
<rect x="314" y="290" width="3" height="1" fill="#ff2020" />
<rect x="319" y="290" width="1" height="4" fill="#ff2020" />
<rect x="318" y="291" width="3" height="1" fill="#ff2020" />
<rect x="323" y="290" width="1" height="3" fill="#ff2020" />
<rect x="322" y="291" width="3" height="1" fill="#ff2020" />
<rect x="327" y="291" width="1" height="2" fill="#ff2020" />
<rect x="326" y="291" width="3" height="1" fill="#ff2020" />
<rect x="331" y="290" width="1" height="3" fill="#0e8e0e" />
<rect x="330" y="290" width="3" height="1" fill="#0e8e0e" />
<rect x="335" y="288" width="1" height="3" fill="#ff2020" />
<rect x="334" y="289" width="3" height="1" fill="#ff2020" />
<rect x="339" y="289" width="1" height="3" fill="#ff2020" />
<rect x="338" y="290" width="3" height="1" fill="#ff2020" />
<rect x="343" y="289" width="1" height="4" fill="#0e8e0e" />
<rect x="342" y="290" width="3" height="2" fill="#0e8e0e" />
<rect x="347" y="289" width="1" height="3" fill="#ff2020" />
<rect x="346" y="290" width="3" height="1" fill="#ff2020" />
<rect x="351" y="291" width="1" height="3" fill="#0e8e0e" />
<rect x="350" y="291" width="3" height="1" fill="#0e8e0e" />
<rect x="355" y="290" width="1" height="2" fill="#0e8e0e" />
<rect x="354" y="290" width="3" height="1" fill="#0e8e0e" />
<rect x="359" y="289" width="1" height="3" fill="#ff2020" />
<rect x="358" y="290" width="3" height="1" fill="#ff2020" />
<rect x="363" y="289" width="1" height="4" fill="#0e8e0e" />
<rect x="362" y="290" width="3" height="1" fill="#0e8e0e" />
<rect x="367" y="288" width="1" height="3" fill="#ff2020" />
<rect x="366" y="289" width="3" height="1" fill="#ff2020" />
<rect x="371" y="288" width="1" height="2" fill="#ff2020" />
<rect x="370" y="289" width="3" height="1" fill="#ff2020" />
<rect x="375" y="290" width="1" height="2" fill="#0e8e0e" />
<rect x="374" y="290" width="3" height="1" fill="#0e8e0e" />
<rect x="379" y="288" width="1" height="3" fill="#ff2020" />
<rect x="378" y="289" width="3" height="1" fill="#ff2020" />
<rect x="383" y="288" width="1" height="3" fill="#ff2020" />
<rect x="382" y="288" width="3" height="1" fill="#ff2020" />
<rect x="387" y="287" width="1" height="4" fill="#ff2020" />
<rect x="386" y="288" width="3" height="1" fill="#ff2020" />
<rect x="391" y="289" width="1" height="3" fill="#0e8e0e" />
<rect x="390" y="289" width="3" height="1" fill="#0e8e0e" />
<rect x="395" y="288" width="1" height="2" fill="#ff2020" />
<rect x="394" y="288" width="3" height="1" fill="#ff2020" />
<rect x="399" y="287" width="1" height="3" fill="#0e8e0e" />
<rect x="398" y="288" width="3" height="1" fill="#0e8e0e" />
<rect x="403" y="287" width="1" height="4" fill="#ff2020" />
<rect x="402" y="288" width="3" height="1" fill="#ff2020" />
<rect x="407" y="288" width="1" height="4" fill="#0e8e0e" />
<rect x="406" y="289" width="3" height="1" fill="#0e8e0e" />
<rect x="411" y="289" width="1" height="2" fill="#0e8e0e" />
<rect x="410" y="289" width="3" height="1" fill="#0e8e0e" />
<rect x="415" y="289" width="1" height="2" fill="#ff2020" />
<rect x="414" y="289" width="3" height="1" fill="#ff2020" />
<rect x="419" y="288" width="1" height="3" fill="#0e8e0e" />
<rect x="418" y="289" width="3" height="1" fill="#0e8e0e" />
<rect x="423" y="289" width="1" height="2" fill="#0e8e0e" />
<rect x="422" y="289" width="3" height="1" fill="#0e8e0e" />
<rect x="427" y="287" width="1" height="3" fill="#0e8e0e" />
<rect x="426" y="288" width="3" height="1" fill="#0e8e0e" />
<rect x="431" y="288" width="1" height="2" fill="#ff2020" />
<rect x="430" y="288" width="3" height="1" fill="#ff2020" />
<rect x="435" y="286" width="1" height="4" fill="#0e8e0e" />
<rect x="434" y="287" width="3" height="2" fill="#0e8e0e" />
<rect x="439" y="287" width="1" height="2" fill="#ff2020" />
<rect x="438" y="287" width="3" height="1" fill="#ff2020" />
<rect x="443" y="288" width="1" height="2" fill="#0e8e0e" />
<rect x="442" y="288" width="3" height="1" fill="#0e8e0e" />
<rect x="447" y="287" width="1" height="2" fill="#0e8e0e" />
<rect x="446" y="287" width="3" height="1" fill="#0e8e0e" />
<rect x="451" y="285" width="1" height="4" fill="#0e8e0e" />
<rect x="450" y="286" width="3" height="1" fill="#0e8e0e" />
<rect x="455" y="285" width="1" height="2" fill="#ff2020" />
<rect x="454" y="285" width="3" height="1" fill="#ff2020" />
<rect x="459" y="285" width="1" height="3" fill="#0e8e0e" />
<rect x="458" y="286" width="3" height="1" fill="#0e8e0e" />
<rect x="463" y="283" width="1" height="5" fill="#ff2020" />
<rect x="462" y="285" width="3" height="1" fill="#ff2020" />
<rect x="467" y="285" width="1" height="2" fill="#0e8e0e" />
<rect x="466" y="285" width="3" height="1" fill="#0e8e0e" />
<rect x="471" y="284" width="1" height="2" fill="#ff2020" />
<rect x="470" y="285" width="3" height="1" fill="#ff2020" />
<rect x="475" y="285" width="1" height="2" fill="#0e8e0e" />
<rect x="474" y="285" width="3" height="1" fill="#0e8e0e" />
<rect x="479" y="284" width="1" height="3" fill="#0e8e0e" />
<rect x="478" y="284" width="3" height="1" fill="#0e8e0e" />
<rect x="483" y="282" width="1" height="3" fill="#0e8e0e" />
<rect x="482" y="283" width="3" height="1" fill="#0e8e0e" />
<rect x="487" y="282" width="1" height="3" fill="#ff2020" />
<rect x="486" y="282" width="3" height="1" fill="#ff2020" />
<rect x="491" y="281" width="1" height="4" fill="#ff2020" />
<rect x="490" y="282" width="3" height="1" fill="#ff2020" />
<rect x="495" y="281" width="1" height="4" fill="#0e8e0e" />
<rect x="494" y="282" width="3" height="1" fill="#0e8e0e" />
<rect x="499" y="281" width="1" height="4" fill="#ff2020" />
<rect x="498" y="282" width="3" height="1" fill="#ff2020" />
<rect x="503" y="281" width="1" height="5" fill="#ff2020" />
<rect x="502" y="282" width="3" height="1" fill="#ff2020" />
<rect x="507" y="282" width="1" height="4" fill="#ff2020" />
<rect x="506" y="284" width="3" height="1" fill="#ff2020" />
<rect x="511" y="283" width="1" height="6" fill="#ff2020" />
<rect x="510" y="285" width="3" height="3" fill="#ff2020" />
<rect x="515" y="287" width="1" height="5" fill="#ff2020" />
<rect x="514" y="288" width="3" height="2" fill="#ff2020" />
<rect x="519" y="289" width="1" height="4" fill="#ff2020" />
<rect x="518" y="290" width="3" height="1" fill="#ff2020" />
<rect x="523" y="289" width="1" height="4" fill="#ff2020" />
<rect x="522" y="290" width="3" height="1" fill="#ff2020" />
<rect x="527" y="289" width="1" height="3" fill="#0e8e0e" />
<rect x="526" y="290" width="3" height="1" fill="#0e8e0e" />
<rect x="531" y="290" width="1" height="3" fill="#0e8e0e" />
<rect x="530" y="290" width="3" height="1" fill="#0e8e0e" />
<rect x="535" y="287" width="1" height="6" fill="#0e8e0e" />
<rect x="534" y="288" width="3" height="2" fill="#0e8e0e" />
<rect x="539" y="284" width="1" height="5" fill="#0e8e0e" />
<rect x="538" y="284" width="3" height="4" fill="#0e8e0e" />
<rect x="543" y="280" width="1" height="6" fill="#0e8e0e" />
<rect x="542" y="281" width="3" height="2" fill="#0e8e0e" />
<rect x="547" y="281" width="1" height="3" fill="#0e8e0e" />
<rect x="546" y="281" width="3" height="1" fill="#0e8e0e" />
<rect x="551" y="280" width="1" height="3" fill="#0e8e0e" />
<rect x="550" y="281" width="3" height="1" fill="#0e8e0e" />
<rect x="555" y="279" width="1" height="3" fill="#ff2020" />
<rect x="554" y="280" width="3" height="1" fill="#ff2020" />
<rect x="559" y="280" width="1" height="2" fill="#ff2020" />
<rect x="558" y="280" width="3" height="2" fill="#ff2020" />
<rect x="563" y="278" width="1" height="4" fill="#0e8e0e" />
<rect x="562" y="279" width="3" height="2" fill="#0e8e0e" />
<rect x="567" y="279" width="1" height="6" fill="#0e8e0e" />
<rect x="566" y="280" width="3" height="1" fill="#0e8e0e" />
<rect x="571" y="279" width="1" height="7" fill="#0e8e0e" />
<rect x="570" y="279" width="3" height="3" fill="#0e8e0e" />
<rect x="575" y="275" width="1" height="5" fill="#ff2020" />
<rect x="574" y="277" width="3" height="2" fill="#ff2020" />
<rect x="579" y="276" width="1" height="7" fill="#0e8e0e" />
<rect x="578" y="277" width="3" height="1" fill="#0e8e0e" />
<rect x="583" y="272" width="1" height="8" fill="#ff2020" />
<rect x="582" y="275" width="3" height="2" fill="#ff2020" />
<rect x="587" y="275" width="1" height="4" fill="#ff2020" />
<rect x="586" y="276" width="3" height="1" fill="#ff2020" />
<rect x="591" y="275" width="1" height="6" fill="#0e8e0e" />
<rect x="590" y="276" width="3" height="4" fill="#0e8e0e" />
<rect x="595" y="273" width="1" height="6" fill="#ff2020" />
<rect x="594" y="274" width="3" height="3" fill="#ff2020" />
<rect x="599" y="275" width="1" height="4" fill="#0e8e0e" />
<rect x="598" y="275" width="3" height="2" fill="#0e8e0e" />
<rect x="603" y="272" width="1" height="9" fill="#0e8e0e" />
<rect x="602" y="274" width="3" height="3" fill="#0e8e0e" />
<rect x="607" y="273" width="1" height="3" fill="#ff2020" />
<rect x="606" y="273" width="3" height="2" fill="#ff2020" />
<rect x="611" y="271" width="1" height="5" fill="#0e8e0e" />
<rect x="610" y="272" width="3" height="3" fill="#0e8e0e" />
<rect x="615" y="267" width="1" height="7" fill="#0e8e0e" />
<rect x="614" y="270" width="3" height="2" fill="#0e8e0e" />
<rect x="619" y="266" width="1" height="5" fill="#ff2020" />
<rect x="618" y="267" width="3" height="2" fill="#ff2020" />
<rect x="623" y="264" width="1" height="9" fill="#0e8e0e" />
<rect x="622" y="267" width="3" height="3" fill="#0e8e0e" />
<rect x="627" y="265" width="1" height="4" fill="#0e8e0e" />
<rect x="626" y="266" width="3" height="2" fill="#0e8e0e" />
<rect x="631" y="262" width="1" height="6" fill="#0e8e0e" />
<rect x="630" y="263" width="3" height="3" fill="#0e8e0e" />
<rect x="635" y="260" width="1" height="6" fill="#ff2020" />
<rect x="634" y="261" width="3" height="2" fill="#ff2020" />
<rect x="639" y="258" width="1" height="7" fill="#0e8e0e" />
<rect x="638" y="258" width="3" height="5" fill="#0e8e0e" />
<rect x="643" y="254" width="1" height="8" fill="#0e8e0e" />
<rect x="642" y="256" width="3" height="2" fill="#0e8e0e" />
<rect x="647" y="252" width="1" height="8" fill="#0e8e0e" />
<rect x="646" y="253" width="3" height="3" fill="#0e8e0e" />
<rect x="651" y="251" width="1" height="4" fill="#0e8e0e" />
<rect x="650" y="251" width="3" height="2" fill="#0e8e0e" />
<rect x="655" y="247" width="1" height="6" fill="#0e8e0e" />
<rect x="654" y="249" width="3" height="2" fill="#0e8e0e" />
<rect x="659" y="247" width="1" height="7" fill="#ff2020" />
<rect x="658" y="249" width="3" height="4" fill="#ff2020" />
<rect x="663" y="253" width="1" height="7" fill="#ff2020" />
<rect x="662" y="253" width="3" height="3" fill="#ff2020" />
<rect x="667" y="255" width="1" height="4" fill="#ff2020" />
<rect x="666" y="256" width="3" height="2" fill="#ff2020" />
<rect x="671" y="256" width="1" height="7" fill="#ff2020" />
<rect x="670" y="258" width="3" height="1" fill="#ff2020" />
<rect x="675" y="259" width="1" height="5" fill="#0e8e0e" />
<rect x="674" y="260" width="3" height="2" fill="#0e8e0e" />
<rect x="679" y="256" width="1" height="7" fill="#ff2020" />
<rect x="678" y="258" width="3" height="3" fill="#ff2020" />
<rect x="683" y="260" width="1" height="6" fill="#0e8e0e" />
<rect x="682" y="261" width="3" height="2" fill="#0e8e0e" />
<rect x="687" y="257" width="1" height="5" fill="#0e8e0e" />
<rect x="686" y="258" width="3" height="3" fill="#0e8e0e" />
<rect x="691" y="259" width="1" height="3" fill="#0e8e0e" />
<rect x="690" y="259" width="3" height="1" fill="#0e8e0e" />
<rect x="695" y="257" width="1" height="4" fill="#ff2020" />
<rect x="694" y="258" width="3" height="1" fill="#ff2020" />
<rect x="699" y="254" width="1" height="9" fill="#0e8e0e" />
<rect x="698" y="256" width="3" height="4" fill="#0e8e0e" />
<rect x="703" y="252" width="1" height="4" fill="#ff2020" />
<rect x="702" y="254" width="3" height="1" fill="#ff2020" />
<rect x="707" y="253" width="1" height="7" fill="#ff2020" />
<rect x="706" y="254" width="3" height="2" fill="#ff2020" />
<rect x="711" y="253" width="1" height="5" fill="#0e8e0e" />
<rect x="710" y="255" width="3" height="1" fill="#0e8e0e" />
<rect x="715" y="254" width="1" height="7" fill="#ff2020" />
<rect x="714" y="255" width="3" height="3" fill="#ff2020" />
<rect x="719" y="254" width="1" height="5" fill="#ff2020" />
<rect x="718" y="256" width="3" height="2" fill="#ff2020" />
<rect x="723" y="256" width="1" height="7" fill="#0e8e0e" />
<rect x="722" y="257" width="3" height="2" fill="#0e8e0e" />
<rect x="727" y="255" width="1" height="7" fill="#ff2020" />
<rect x="726" y="257" width="3" height="2" fill="#ff2020" />
<rect x="731" y="257" width="1" height="6" fill="#ff2020" />
<rect x="730" y="257" width="3" height="3" fill="#ff2020" />
<rect x="735" y="257" width="1" height="5" fill="#ff2020" />
<rect x="734" y="258" width="3" height="1" fill="#ff2020" />
<rect x="739" y="254" width="1" height="8" fill="#ff2020" />
<rect x="738" y="257" width="3" height="1" fill="#ff2020" />
<rect x="743" y="256" width="1" height="7" fill="#0e8e0e" />
<rect x="742" y="258" width="3" height="3" fill="#0e8e0e" />
<rect x="747" y="256" width="1" height="7" fill="#0e8e0e" />
<rect x="746" y="257" width="3" height="2" fill="#0e8e0e" />
<rect x="751" y="256" width="1" height="4" fill="#0e8e0e" />
<rect x="750" y="257" width="3" height="2" fill="#0e8e0e" />
<rect x="755" y="254" width="1" height="7" fill="#0e8e0e" />
<rect x="754" y="255" width="3" height="3" fill="#0e8e0e" />
<rect x="759" y="251" width="1" height="4" fill="#ff2020" />
<rect x="758" y="253" width="3" height="1" fill="#ff2020" />
<rect x="763" y="252" width="1" height="5" fill="#ff2020" />
<rect x="762" y="254" width="3" height="3" fill="#ff2020" />
<rect x="767" y="255" width="1" height="5" fill="#0e8e0e" />
<rect x="766" y="255" width="3" height="2" fill="#0e8e0e" />
<rect x="771" y="255" width="1" height="4" fill="#0e8e0e" />
<rect x="770" y="255" width="3" height="2" fill="#0e8e0e" />
<rect x="775" y="254" width="1" height="7" fill="#0e8e0e" />
<rect x="774" y="255" width="3" height="2" fill="#0e8e0e" />
<rect x="779" y="251" width="1" height="5" fill="#ff2020" />
<rect x="778" y="253" width="3" height="2" fill="#ff2020" />
<rect x="783" y="253" width="1" height="4" fill="#0e8e0e" />
<rect x="782" y="253" width="3" height="2" fill="#0e8e0e" />
<rect x="787" y="250" width="1" height="6" fill="#ff2020" />
<rect x="786" y="251" width="3" height="2" fill="#ff2020" />
<rect x="791" y="251" width="1" height="7" fill="#0e8e0e" />
<rect x="790" y="253" width="3" height="2" fill="#0e8e0e" />
<rect x="795" y="251" width="1" height="6" fill="#ff2020" />
<rect x="794" y="253" width="3" height="1" fill="#ff2020" />
<rect x="799" y="253" width="1" height="7" fill="#ff2020" />
<rect x="798" y="253" width="3" height="3" fill="#ff2020" />
<rect x="803" y="253" width="1" height="8" fill="#0e8e0e" />
<rect x="802" y="256" width="3" height="1" fill="#0e8e0e" />
<rect x="807" y="253" width="1" height="5" fill="#ff2020" />
<rect x="806" y="254" width="3" height="2" fill="#ff2020" />
<rect x="811" y="253" width="1" height="5" fill="#ff2020" />
<rect x="810" y="253" width="3" height="3" fill="#ff2020" />
<rect x="815" y="253" width="1" height="6" fill="#0e8e0e" />
<rect x="814" y="254" width="3" height="3" fill="#0e8e0e" />
<rect x="819" y="250" width="1" height="6" fill="#ff2020" />
<rect x="818" y="253" width="3" height="1" fill="#ff2020" />
<rect x="823" y="250" width="1" height="8" fill="#ff2020" />
<rect x="822" y="251" width="3" height="3" fill="#ff2020" />
<rect x="827" y="254" width="1" height="4" fill="#0e8e0e" />
<rect x="826" y="255" width="3" height="1" fill="#0e8e0e" />
<rect x="831" y="256" width="1" height="2" fill="#0e8e0e" />
<rect x="830" y="256" width="3" height="1" fill="#0e8e0e" />
<rect x="835" y="254" width="1" height="6" fill="#ff2020" />
<rect x="834" y="255" width="3" height="2" fill="#ff2020" />
<rect x="839" y="256" width="1" height="4" fill="#ff2020" />
<rect x="838" y="257" width="3" height="1" fill="#ff2020" />
<rect x="843" y="257" width="1" height="5" fill="#0e8e0e" />
<rect x="842" y="258" width="3" height="2" fill="#0e8e0e" />
<rect x="847" y="255" width="1" height="4" fill="#ff2020" />
<rect x="846" y="256" width="3" height="2" fill="#ff2020" />
<rect x="851" y="255" width="1" height="7" fill="#0e8e0e" />
<rect x="850" y="257" width="3" height="3" fill="#0e8e0e" />
<rect x="855" y="255" width="1" height="3" fill="#0e8e0e" />
<rect x="854" y="255" width="3" height="2" fill="#0e8e0e" />
<rect x="859" y="251" width="1" height="5" fill="#ff2020" />
<rect x="858" y="253" width="3" height="1" fill="#ff2020" />
<rect x="863" y="252" width="1" height="4" fill="#ff2020" />
<rect x="862" y="253" width="3" height="1" fill="#ff2020" />
<rect x="867" y="253" width="1" height="5" fill="#ff2020" />
<rect x="866" y="254" width="3" height="2" fill="#ff2020" />
<rect x="871" y="253" width="1" height="7" fill="#0e8e0e" />
<rect x="870" y="254" width="3" height="3" fill="#0e8e0e" />
<rect x="875" y="251" width="1" height="7" fill="#0e8e0e" />
<rect x="874" y="253" width="3" height="1" fill="#0e8e0e" />
<rect x="879" y="252" width="1" height="5" fill="#0e8e0e" />
<rect x="878" y="252" width="3" height="3" fill="#0e8e0e" />
<rect x="883" y="250" width="1" height="6" fill="#0e8e0e" />
<rect x="882" y="253" width="3" height="1" fill="#0e8e0e" />
<rect x="887" y="248" width="1" height="7" fill="#ff2020" />
<rect x="886" y="250" width="3" height="3" fill="#ff2020" />
<rect x="891" y="249" width="1" height="6" fill="#0e8e0e" />
<rect x="890" y="251" width="3" height="2" fill="#0e8e0e" />
<rect x="895" y="250" width="1" height="8" fill="#ff2020" />
<rect x="894" y="251" width="3" height="4" fill="#ff2020" />
<rect x="899" y="253" width="1" height="5" fill="#ff2020" />
<rect x="898" y="253" width="3" height="2" fill="#ff2020" />
<rect x="903" y="256" width="1" height="3" fill="#0e8e0e" />
<rect x="902" y="256" width="3" height="1" fill="#0e8e0e" />
<rect x="907" y="254" width="1" height="4" fill="#ff2020" />
<rect x="906" y="254" width="3" height="3" fill="#ff2020" />
<rect x="911" y="256" width="1" height="5" fill="#ff2020" />
<rect x="910" y="257" width="3" height="3" fill="#ff2020" />
<rect x="915" y="258" width="1" height="6" fill="#ff2020" />
<rect x="914" y="260" width="3" height="2" fill="#ff2020" />
<rect x="919" y="260" width="1" height="8" fill="#ff2020" />
<rect x="918" y="262" width="3" height="2" fill="#ff2020" />
<rect x="923" y="265" width="1" height="3" fill="#0e8e0e" />
<rect x="922" y="265" width="3" height="1" fill="#0e8e0e" />
<rect x="927" y="264" width="1" height="7" fill="#ff2020" />
<rect x="926" y="265" width="3" height="3" fill="#ff2020" />
<rect x="931" y="266" width="1" height="5" fill="#ff2020" />
<rect x="930" y="266" width="3" height="2" fill="#ff2020" />
<rect x="935" y="267" width="1" height="4" fill="#0e8e0e" />
<rect x="934" y="269" width="3" height="2" fill="#0e8e0e" />
<rect x="939" y="267" width="1" height="3" fill="#ff2020" />
<rect x="938" y="267" width="3" height="2" fill="#ff2020" />
<rect x="943" y="265" width="1" height="6" fill="#0e8e0e" />
<rect x="942" y="267" width="3" height="2" fill="#0e8e0e" />
<rect x="947" y="264" width="1" height="6" fill="#0e8e0e" />
<rect x="946" y="265" width="3" height="2" fill="#0e8e0e" />
<rect x="951" y="264" width="1" height="7" fill="#0e8e0e" />
<rect x="950" y="266" width="3" height="1" fill="#0e8e0e" />
<rect x="955" y="263" width="1" height="6" fill="#0e8e0e" />
<rect x="954" y="263" width="3" height="3" fill="#0e8e0e" />
<rect x="959" y="261" width="1" height="4" fill="#0e8e0e" />
<rect x="958" y="261" width="3" height="2" fill="#0e8e0e" />
<rect x="963" y="256" width="1" height="6" fill="#ff2020" />
<rect x="962" y="258" width="3" height="3" fill="#ff2020" />
<rect x="967" y="258" width="1" height="4" fill="#ff2020" />
<rect x="966" y="259" width="3" height="1" fill="#ff2020" />
<rect x="971" y="254" width="1" height="8" fill="#0e8e0e" />
<rect x="970" y="257" width="3" height="3" fill="#0e8e0e" />
<rect x="975" y="256" width="1" height="7" fill="#0e8e0e" />
<rect x="974" y="257" width="3" height="3" fill="#0e8e0e" />
<rect x="979" y="253" width="1" height="7" fill="#0e8e0e" />
<rect x="978" y="254" width="3" height="3" fill="#0e8e0e" />
<rect x="983" y="251" width="1" height="7" fill="#0e8e0e" />
<rect x="982" y="252" width="3" height="2" fill="#0e8e0e" />
<rect x="987" y="249" width="1" height="8" fill="#ff2020" />
<rect x="986" y="252" width="3" height="2" fill="#ff2020" />
<rect x="991" y="253" width="1" height="8" fill="#0e8e0e" />
<rect x="990" y="254" width="3" height="4" fill="#0e8e0e" />
<rect x="995" y="252" width="1" height="5" fill="#0e8e0e" />
<rect x="994" y="252" width="3" height="2" fill="#0e8e0e" />
<rect x="999" y="250" width="1" height="6" fill="#0e8e0e" />
<rect x="998" y="251" width="3" height="3" fill="#0e8e0e" />
<rect x="1003" y="250" width="1" height="5" fill="#0e8e0e" />
<rect x="1002" y="250" width="3" height="4" fill="#0e8e0e" />
<rect x="1007" y="246" width="1" height="6" fill="#0e8e0e" />
<rect x="1006" y="248" width="3" height="2" fill="#0e8e0e" />
<rect x="1011" y="243" width="1" height="8" fill="#0e8e0e" />
<rect x="1010" y="244" width="3" height="4" fill="#0e8e0e" />
<rect x="1015" y="241" width="1" height="6" fill="#0e8e0e" />
<rect x="1014" y="242" width="3" height="2" fill="#0e8e0e" />
<rect x="1019" y="237" width="1" height="7" fill="#0e8e0e" />
<rect x="1018" y="238" width="3" height="4" fill="#0e8e0e" />
<rect x="1023" y="232" width="1" height="8" fill="#0e8e0e" />
<rect x="1022" y="235" width="3" height="2" fill="#0e8e0e" />
<rect x="1027" y="235" width="1" height="5" fill="#0e8e0e" />
<rect x="1026" y="235" width="3" height="3" fill="#0e8e0e" />
<rect x="1031" y="232" width="1" height="4" fill="#0e8e0e" />
<rect x="1030" y="233" width="3" height="2" fill="#0e8e0e" />
<rect x="1035" y="228" width="1" height="7" fill="#0e8e0e" />
<rect x="1034" y="229" width="3" height="4" fill="#0e8e0e" />
<rect x="1039" y="224" width="1" height="9" fill="#0e8e0e" />
<rect x="1038" y="225" width="3" height="3" fill="#0e8e0e" />
<rect x="1043" y="220" width="1" height="6" fill="#ff2020" />
<rect x="1042" y="222" width="3" height="3" fill="#ff2020" />
<rect x="1047" y="224" width="1" height="6" fill="#0e8e0e" />
<rect x="1046" y="225" width="3" height="2" fill="#0e8e0e" />
<rect x="1051" y="218" width="1" height="10" fill="#0e8e0e" />
<rect x="1050" y="218" width="3" height="7" fill="#0e8e0e" />
<rect x="1055" y="209" width="1" height="12" fill="#0e8e0e" />
<rect x="1054" y="212" width="3" height="6" fill="#0e8e0e" />
<rect x="1059" y="211" width="1" height="6" fill="#ff2020" />
<rect x="1058" y="212" width="3" height="3" fill="#ff2020" />
<rect x="1063" y="213" width="1" height="6" fill="#ff2020" />
<rect x="1062" y="215" width="3" height="3" fill="#ff2020" />
<rect x="1067" y="216" width="1" height="6" fill="#ff2020" />
<rect x="1066" y="218" width="3" height="3" fill="#ff2020" />
<rect x="1071" y="216" width="1" height="6" fill="#0e8e0e" />
<rect x="1070" y="217" width="3" height="4" fill="#0e8e0e" />
<rect x="1075" y="213" width="1" height="5" fill="#0e8e0e" />
<rect x="1074" y="215" width="3" height="2" fill="#0e8e0e" />
<rect x="1079" y="213" width="1" height="5" fill="#0e8e0e" />
<rect x="1078" y="213" width="3" height="2" fill="#0e8e0e" />
<rect x="1083" y="209" width="1" height="6" fill="#0e8e0e" />
<rect x="1082" y="211" width="3" height="2" fill="#0e8e0e" />
<rect x="1087" y="207" width="1" height="7" fill="#0e8e0e" />
<rect x="1086" y="207" width="3" height="4" fill="#0e8e0e" />
<rect x="1091" y="203" width="1" height="7" fill="#ff2020" />
<rect x="1090" y="204" width="3" height="4" fill="#ff2020" />
<rect x="1095" y="205" width="1" height="10" fill="#0e8e0e" />
<rect x="1094" y="207" width="3" height="4" fill="#0e8e0e" />
<rect x="1099" y="205" width="1" height="5" fill="#0e8e0e" />
<rect x="1098" y="207" width="3" height="2" fill="#0e8e0e" />
<rect x="1103" y="206" width="1" height="7" fill="#0e8e0e" />
<rect x="1102" y="207" width="3" height="2" fill="#0e8e0e" />
<rect x="1107" y="207" width="1" height="5" fill="#ff2020" />
<rect x="1106" y="207" width="3" height="4" fill="#ff2020" />
<rect x="1111" y="208" width="1" height="4" fill="#ff2020" />
<rect x="1110" y="209" width="3" height="1" fill="#ff2020" />
<rect x="1115" y="204" width="1" height="6" fill="#ff2020" />
<rect x="1114" y="207" width="3" height="2" fill="#ff2020" />
<rect x="1119" y="207" width="1" height="4" fill="#ff2020" />
<rect x="1118" y="207" width="3" height="1" fill="#ff2020" />
<rect x="1123" y="203" width="1" height="9" fill="#ff2020" />
<rect x="1122" y="205" width="3" height="3" fill="#ff2020" />
<rect x="1127" y="203" width="1" height="7" fill="#ff2020" />
<rect x="1126" y="205" width="3" height="1" fill="#ff2020" />
<rect x="1131" y="205" width="1" height="8" fill="#0e8e0e" />
<rect x="1130" y="207" width="3" height="2" fill="#0e8e0e" />
<rect x="1135" y="206" width="1" height="8" fill="#ff2020" />
<rect x="1134" y="207" width="3" height="2" fill="#ff2020" />
<rect x="1139" y="209" width="1" height="5" fill="#0e8e0e" />
<rect x="1138" y="210" width="3" height="2" fill="#0e8e0e" />
<rect x="1143" y="206" width="1" height="9" fill="#ff2020" />
<rect x="1142" y="207" width="3" height="4" fill="#ff2020" />
<rect x="1147" y="208" width="1" height="8" fill="#0e8e0e" />
<rect x="1146" y="211" width="3" height="3" fill="#0e8e0e" />
<rect x="1151" y="211" width="1" height="6" fill="#0e8e0e" />
<rect x="1150" y="212" width="3" height="2" fill="#0e8e0e" />
<rect x="1155" y="211" width="1" height="7" fill="#ff2020" />
<rect x="1154" y="212" width="3" height="2" fill="#ff2020" />
<rect x="1159" y="211" width="1" height="7" fill="#ff2020" />
<rect x="1158" y="214" width="3" height="2" fill="#ff2020" />
<rect x="1163" y="213" width="1" height="5" fill="#ff2020" />
<rect x="1162" y="214" width="3" height="4" fill="#ff2020" />
<rect x="1167" y="215" width="1" height="7" fill="#0e8e0e" />
<rect x="1166" y="216" width="3" height="4" fill="#0e8e0e" />
<rect x="1171" y="212" width="1" height="6" fill="#0e8e0e" />
<rect x="1170" y="213" width="3" height="2" fill="#0e8e0e" />
<rect x="1175" y="210" width="1" height="5" fill="#ff2020" />
<rect x="1174" y="211" width="3" height="2" fill="#ff2020" />
<rect x="1179" y="210" width="1" height="6" fill="#ff2020" />
<rect x="1178" y="211" width="3" height="3" fill="#ff2020" />
<rect x="1183" y="214" width="1" height="3" fill="#0e8e0e" />
<rect x="1182" y="214" width="3" height="3" fill="#0e8e0e" />
<rect x="1187" y="209" width="1" height="7" fill="#0e8e0e" />
<rect x="1186" y="210" width="3" height="3" fill="#0e8e0e" />
<rect x="1191" y="210" width="1" height="7" fill="#0e8e0e" />
<rect x="1190" y="211" width="3" height="2" fill="#0e8e0e" />
<rect x="1195" y="207" width="1" height="5" fill="#ff2020" />
<rect x="1194" y="209" width="3" height="1" fill="#ff2020" />
<rect x="1199" y="206" width="1" height="8" fill="#ff2020" />
<rect x="1198" y="208" width="3" height="2" fill="#ff2020" />
<rect x="1203" y="206" width="1" height="6" fill="#ff2020" />
<rect x="1202" y="208" width="3" height="1" fill="#ff2020" />
<rect x="1207" y="203" width="1" height="9" fill="#0e8e0e" />
<rect x="1206" y="206" width="3" height="3" fill="#0e8e0e" />
<rect x="1211" y="202" width="1" height="8" fill="#0e8e0e" />
<rect x="1210" y="205" width="3" height="3" fill="#0e8e0e" />
<rect x="1215" y="204" width="1" height="4" fill="#0e8e0e" />
<rect x="1214" y="204" width="3" height="2" fill="#0e8e0e" />
<rect x="1219" y="203" width="1" height="6" fill="#0e8e0e" />
<rect x="1218" y="205" width="3" height="2" fill="#0e8e0e" />
<rect x="1223" y="202" width="1" height="8" fill="#0e8e0e" />
<rect x="1222" y="204" width="3" height="3" fill="#0e8e0e" />
<rect x="1227" y="206" width="1" height="5" fill="#0e8e0e" />
<rect x="1226" y="206" width="3" height="2" fill="#0e8e0e" />
<rect x="1231" y="199" width="1" height="9" fill="#0e8e0e" />
<rect x="1230" y="202" width="3" height="3" fill="#0e8e0e" />
<rect x="1235" y="202" width="1" height="4" fill="#0e8e0e" />
<rect x="1234" y="202" width="3" height="3" fill="#0e8e0e" />
<rect x="1239" y="200" width="1" height="8" fill="#0e8e0e" />
<rect x="1238" y="202" width="3" height="2" fill="#0e8e0e" />
<rect x="1243" y="199" width="1" height="7" fill="#0e8e0e" />
<rect x="1242" y="200" width="3" height="2" fill="#0e8e0e" />
<rect x="1247" y="196" width="1" height="6" fill="#ff2020" />
<rect x="1246" y="198" width="3" height="1" fill="#ff2020" />
<rect x="1251" y="195" width="1" height="6" fill="#0e8e0e" />
<rect x="1250" y="197" width="3" height="3" fill="#0e8e0e" />
<rect x="1255" y="195" width="1" height="6" fill="#0e8e0e" />
<rect x="1254" y="195" width="3" height="2" fill="#0e8e0e" />
<rect x="1259" y="194" width="1" height="5" fill="#0e8e0e" />
<rect x="1258" y="195" width="3" height="2" fill="#0e8e0e" />
<rect x="1263" y="192" width="1" height="10" fill="#0e8e0e" />
<rect x="1262" y="194" width="3" height="4" fill="#0e8e0e" />
<rect x="1267" y="191" width="1" height="6" fill="#0e8e0e" />
<rect x="1266" y="192" width="3" height="3" fill="#0e8e0e" />
<rect x="1271" y="188" width="1" height="5" fill="#0e8e0e" />
<rect x="1270" y="188" width="3" height="3" fill="#0e8e0e" />
<rect x="1275" y="184" width="1" height="5" fill="#0e8e0e" />
<rect x="1274" y="185" width="3" height="4" fill="#0e8e0e" />
<rect x="1279" y="180" width="1" height="8" fill="#0e8e0e" />
<rect x="1278" y="183" width="3" height="2" fill="#0e8e0e" />
<rect x="1283" y="176" width="1" height="9" fill="#0e8e0e" />
<rect x="1282" y="177" width="3" height="6" fill="#0e8e0e" />
<rect x="1287" y="173" width="1" height="5" fill="#0e8e0e" />
<rect x="1286" y="174" width="3" height="3" fill="#0e8e0e" />
<rect x="1293" y="174" width="1" height="13" fill="#0e8e0e" />
<rect x="1292" y="176" width="3" height="6" fill="#0e8e0e" />
<rect x="1297" y="164" width="1" height="20" fill="#0e8e0e" />
<rect x="1296" y="166" width="3" height="15" fill="#0e8e0e" />
<rect x="1301" y="141" width="1" height="30" fill="#0e8e0e" />
<rect x="1300" y="143" width="3" height="25" fill="#0e8e0e" />
<rect x="1305" y="134" width="1" height="13" fill="#0e8e0e" />
<rect x="1304" y="137" width="3" height="7" fill="#0e8e0e" />
<rect x="1309" y="134" width="1" height="38" fill="#ff2020" />
<rect x="1308" y="134" width="3" height="36" fill="#ff2020" />
<rect x="1313" y="166" width="1" height="6" fill="#0a700a" />
<rect x="1312" y="168" width="3" height="2" fill="#0a700a" />
<rect x="1317" y="127" width="1" height="57" fill="#0e8e0e" />
<rect x="1316" y="131" width="3" height="37" fill="#0e8e0e" />
<rect x="1321" y="47" width="1" height="85" fill="#0e8e0e" />
<rect x="1320" y="87" width="3" height="44" fill="#0e8e0e" />
<rect x="1325" y="82" width="1" height="17" fill="#ff2020" />
<rect x="1324" y="87" width="3" height="8" fill="#ff2020" />
<path d="M161.0,312.0 C193.3,310.9 291.8,307.4 355.0,305.2 C418.2,303.0 475.8,301.4 540.0,298.6 C604.2,295.8 673.3,292.1 740.0,288.5 C806.7,284.9 875.0,281.9 940.0,277.2 C1005.0,272.5 1078.0,265.0 1130.0,260.5 C1182.0,256.0 1220.3,253.3 1252.0,250.0 C1283.7,246.7 1307.7,242.7 1320.0,240.7 C1332.3,238.7 1325.0,238.4 1326.0,238.0" fill="none" stroke="#ffffff" stroke-width="3.2" stroke-linejoin="round" shape-rendering="geometricPrecision"/>
<path d="M161.0,299.0 C184.7,298.1 258.3,295.6 303.0,293.8 C347.7,292.0 394.1,290.0 429.0,288.3 C463.9,286.6 494.1,284.6 512.6,283.6 C531.1,282.6 526.8,283.0 540.0,282.4 C553.2,281.8 570.2,283.6 592.0,280.0 C613.8,276.4 653.8,264.7 671.0,261.0 C688.2,257.3 670.0,259.2 695.0,258.0 C720.0,256.8 791.3,254.5 821.0,254.0 C850.7,253.5 856.5,254.2 873.0,255.0 C889.5,255.8 907.4,257.2 920.0,258.6 C932.6,260.0 934.8,263.3 948.6,263.3 C962.4,263.3 983.9,263.0 1003.0,258.6 C1022.1,254.2 1045.1,243.2 1063.0,237.0 C1080.9,230.8 1094.8,225.9 1110.6,221.7 C1126.4,217.5 1138.2,213.9 1158.0,212.0 C1177.8,210.1 1209.7,212.1 1229.5,210.5 C1249.3,208.9 1267.6,204.5 1277.0,202.6 C1286.4,200.7 1281.5,201.6 1286.0,199.0 C1290.5,196.4 1299.3,189.9 1304.0,187.3 C1308.7,184.7 1310.8,186.5 1314.4,183.4 C1318.0,180.3 1323.7,171.1 1325.6,168.6" fill="none" stroke="#a0d84c" stroke-width="2.2" stroke-linejoin="round" shape-rendering="geometricPrecision"/>
<polyline points="161.0,297.0 250.0,294.0 300.0,291.0 400.0,287.0 470.0,283.0 500.0,282.0 515.0,286.0 530.0,290.7 545.0,280.0 580.0,278.0 620.0,270.0 640.0,262.0 655.0,253.0 665.0,255.0 680.0,258.0 700.0,257.0 720.0,259.0 760.0,256.0 800.0,255.0 850.0,256.0 880.0,254.0 920.0,262.0 945.0,267.0 980.0,257.0 1030.0,240.0 1060.0,227.0 1080.0,218.0 1110.0,212.0 1140.0,214.0 1180.0,213.0 1220.0,211.0 1260.0,205.0 1290.0,192.0 1297.5,179.5 1306.6,162.6 1317.0,152.0 1325.0,131.4" fill="none" stroke="#ffff30" stroke-width="1" stroke-linejoin="round" shape-rendering="geometricPrecision"/>
</g>
<g clip-path="url(#cr1)">
<polyline points="162.0,322.4 166.0,326.3 170.0,329.7 174.0,334.7 178.0,333.8 182.0,336.8 186.0,321.0 190.0,320.2 194.0,329.2 198.0,328.8 202.0,333.5 206.0,320.8 210.0,320.3 214.0,315.6 218.0,318.7 222.0,321.2 226.0,311.6 230.0,309.9 234.0,310.2 238.0,323.5 242.0,330.3 246.0,323.3 250.0,332.6 254.0,323.4 258.0,325.7 262.0,316.6 266.0,309.5 270.0,322.4 274.0,316.8 278.0,314.2 282.0,328.9 286.0,336.0 290.0,329.3 294.0,337.3 298.0,333.3 302.0,333.2 306.0,323.6 310.0,332.5 314.0,332.7 318.0,338.1 322.0,339.7 326.0,329.4 330.0,324.7 334.0,318.2 338.0,314.0 342.0,310.0 346.0,312.3 350.0,319.7 354.0,312.4 358.0,320.0 362.0,316.8 366.0,313.7 370.0,321.4 374.0,319.7 378.0,315.1 382.0,315.5 386.0,319.8 390.0,309.5 394.0,321.4 398.0,309.4 402.0,316.5 406.0,322.4 410.0,309.5 414.0,318.1 418.0,316.8 422.0,319.4 426.0,309.1 430.0,307.0 434.0,307.0 438.0,317.4 442.0,311.0 446.0,318.0 450.0,325.5 454.0,330.3 458.0,321.3 462.0,316.0 466.0,316.2 470.0,321.2 474.0,310.9 478.0,317.2 482.0,321.8 486.0,325.6 490.0,311.4 494.0,320.7 498.0,309.2 502.0,307.0 506.0,310.4 510.0,325.0 514.0,330.7 518.0,343.4 522.0,341.7 526.0,334.7 530.0,330.4 534.0,320.3 538.0,311.4 542.0,309.3 546.0,318.6 550.0,330.0 554.0,320.2 558.0,311.8 562.0,325.2 566.0,324.0 570.0,320.7 574.0,315.2 578.0,318.8 582.0,325.4 586.0,321.9 590.0,319.0 594.0,309.8 598.0,321.2 602.0,310.4 606.0,312.8 610.0,321.0 614.0,311.7 618.0,317.8 622.0,325.7 626.0,323.9 630.0,325.8 634.0,313.3 638.0,311.7 642.0,307.0 646.0,311.9 650.0,310.9 654.0,318.8 658.0,329.9 662.0,333.7 666.0,338.5 670.0,331.5 674.0,330.1 678.0,335.0 682.0,332.3 686.0,325.7 690.0,323.6 694.0,316.8 698.0,317.0 702.0,328.9 706.0,335.6 710.0,334.3 714.0,331.5 718.0,327.2 722.0,320.2 726.0,320.2 730.0,330.8 734.0,337.9 738.0,330.7 742.0,334.1 746.0,335.3 750.0,334.5 754.0,333.1 758.0,333.9 762.0,326.2 766.0,328.0 770.0,320.4 774.0,320.2 778.0,326.0 782.0,328.1 786.0,321.6 790.0,330.6 794.0,330.2 798.0,328.3 802.0,315.9 806.0,318.9 810.0,316.0 814.0,323.5 818.0,324.4 822.0,332.5 826.0,334.2 830.0,337.6 834.0,330.7 838.0,332.4 842.0,335.3 846.0,338.9 850.0,331.5 854.0,336.9 858.0,341.2 862.0,340.4 866.0,345.9 870.0,349.0 874.0,342.9 878.0,340.1 882.0,331.7 886.0,340.4 890.0,347.2 894.0,342.3 898.0,343.8 902.0,345.3 906.0,346.3 910.0,335.6 914.0,341.1 918.0,340.5 922.0,343.2 926.0,340.5 930.0,342.7 934.0,345.6 938.0,344.2 942.0,344.7 946.0,329.7 950.0,322.2 954.0,322.3 958.0,325.6 962.0,318.5 966.0,323.8 970.0,325.6 974.0,314.6 978.0,316.2 982.0,311.9 986.0,307.0 990.0,307.0 994.0,307.0 998.0,307.0 1002.0,307.0 1006.0,307.0 1010.0,307.0 1014.0,307.2 1018.0,312.8 1022.0,315.7 1026.0,310.3 1030.0,320.2 1034.0,308.1 1038.0,308.5 1042.0,307.0 1046.0,307.0 1050.0,307.0 1054.0,315.3 1058.0,315.2 1062.0,309.3 1066.0,316.5 1070.0,308.7 1074.0,312.3 1078.0,309.8 1082.0,313.7 1086.0,323.7 1090.0,326.9 1094.0,322.1 1098.0,330.3 1102.0,331.6 1106.0,325.9 1110.0,318.1 1114.0,322.4 1118.0,324.5 1122.0,333.5 1126.0,338.6 1130.0,334.4 1134.0,326.6 1138.0,332.5 1142.0,318.2 1146.0,313.6 1150.0,321.2 1154.0,327.3 1158.0,320.7 1162.0,326.4 1166.0,335.1 1170.0,328.8 1174.0,324.5 1178.0,318.5 1182.0,316.5 1186.0,328.6 1190.0,324.2 1194.0,332.9 1198.0,337.1 1202.0,333.2 1206.0,324.0 1210.0,332.7 1214.0,328.1 1218.0,323.6 1222.0,318.9 1226.0,329.1 1230.0,325.3 1234.0,319.0 1238.0,318.8 1242.0,311.6 1246.0,317.1 1250.0,315.6 1254.0,311.1 1258.0,317.7 1262.0,322.7 1266.0,309.4 1270.0,311.4 1274.0,307.3 1278.0,317.6 1282.0,320.6 1286.0,311.5 1290.0,307.0 1294.0,307.0 1298.0,312.9 1302.0,307.0 1306.0,313.6 1310.0,323.9 1314.0,324.2 1318.0,318.9 1322.0,319.7 1326.0,315.0" fill="none" stroke="#d02424" stroke-width="1" stroke-linejoin="round" shape-rendering="geometricPrecision"/>
<polyline points="162.0,319.5 166.0,319.3 170.0,319.9 174.0,319.5 178.0,319.4 182.0,320.2 186.0,321.3 190.0,321.1 194.0,321.1 198.0,320.1 202.0,320.8 206.0,320.4 210.0,320.2 214.0,320.2 218.0,320.5 222.0,322.0 226.0,321.9 230.0,321.9 234.0,321.9 238.0,321.3 242.0,323.8 246.0,326.6 250.0,329.0 254.0,328.8 258.0,326.9 262.0,323.5 266.0,324.2 270.0,324.0 274.0,323.4 278.0,323.1 282.0,325.0 286.0,325.5 290.0,328.5 294.0,328.0 298.0,326.5 302.0,325.2 306.0,325.7 310.0,324.6 314.0,324.9 318.0,324.4 322.0,323.3 326.0,323.3 330.0,324.1 334.0,324.2 338.0,324.0 342.0,324.7 346.0,325.9 350.0,324.5 354.0,324.7 358.0,324.7 362.0,322.3 366.0,321.1 370.0,319.4 374.0,318.6 378.0,319.3 382.0,317.1 386.0,317.0 390.0,316.1 394.0,316.5 398.0,315.4 402.0,315.1 406.0,315.4 410.0,314.2 414.0,315.6 418.0,318.6 422.0,317.7 426.0,317.4 430.0,317.5 434.0,318.4 438.0,317.7 442.0,316.5 446.0,316.2 450.0,315.5 454.0,315.8 458.0,314.8 462.0,316.0 466.0,316.2 470.0,316.2 474.0,315.6 478.0,315.8 482.0,313.5 486.0,313.6 490.0,314.6 494.0,313.8 498.0,312.7 502.0,313.2 506.0,311.6 510.0,318.0 514.0,328.8 518.0,333.5 522.0,335.1 526.0,333.8 530.0,333.7 534.0,329.7 538.0,324.5 542.0,323.4 546.0,323.0 550.0,322.7 554.0,323.4 558.0,322.1 562.0,321.4 566.0,320.6 570.0,321.9 574.0,320.4 578.0,319.6 582.0,318.9 586.0,318.5 590.0,318.4 594.0,319.0 598.0,317.5 602.0,316.9 606.0,317.4 610.0,316.5 614.0,317.6 618.0,315.5 622.0,315.9 626.0,316.0 630.0,314.8 634.0,315.6 638.0,313.8 642.0,311.4 646.0,309.8 650.0,312.8 654.0,321.3 658.0,321.1 662.0,322.5 666.0,322.5 670.0,322.4 674.0,324.0 678.0,326.9 682.0,327.7 686.0,326.7 690.0,325.9 694.0,326.3 698.0,324.0 702.0,323.0 706.0,324.3 710.0,324.7 714.0,326.6 718.0,326.7 722.0,329.0 726.0,329.8 730.0,331.3 734.0,331.1 738.0,329.0 742.0,326.6 746.0,325.3 750.0,325.7 754.0,325.0 758.0,324.2 762.0,322.3 766.0,322.1 770.0,321.6 774.0,321.1 778.0,321.7 782.0,321.4 786.0,321.9 790.0,322.2 794.0,321.5 798.0,322.6 802.0,322.5 806.0,320.6 810.0,323.4 814.0,324.9 818.0,325.7 822.0,325.9 826.0,328.7 830.0,327.2 834.0,328.8 838.0,328.2 842.0,327.0 846.0,327.2 850.0,328.2 854.0,328.1 858.0,329.0 862.0,329.9 866.0,329.1 870.0,329.2 874.0,332.1 878.0,331.5 882.0,334.6 886.0,334.3 890.0,336.0 894.0,336.2 898.0,336.7 902.0,336.4 906.0,337.0 910.0,335.5 914.0,336.2 918.0,335.4 922.0,337.9 926.0,339.0 930.0,338.9 934.0,338.0 938.0,336.0 942.0,335.0 946.0,334.0 950.0,331.4 954.0,329.8 958.0,326.8 962.0,324.0 966.0,323.6 970.0,323.5 974.0,322.2 978.0,320.3 982.0,321.1 986.0,320.2 990.0,318.2 994.0,318.5 998.0,317.6 1002.0,317.9 1006.0,316.6 1010.0,316.1 1014.0,316.4 1018.0,317.1 1022.0,315.1 1026.0,314.9 1030.0,315.6 1034.0,315.9 1038.0,314.6 1042.0,313.6 1046.0,313.7 1050.0,314.0 1054.0,314.8 1058.0,318.7 1062.0,319.5 1066.0,320.4 1070.0,319.9 1074.0,317.6 1078.0,316.8 1082.0,315.3 1086.0,316.7 1090.0,315.4 1094.0,316.4 1098.0,321.2 1102.0,323.0 1106.0,323.6 1110.0,324.5 1114.0,324.3 1118.0,323.1 1122.0,323.9 1126.0,323.9 1130.0,323.4 1134.0,323.4 1138.0,322.5 1142.0,321.2 1146.0,323.2 1150.0,326.6 1154.0,327.6 1158.0,328.6 1162.0,329.3 1166.0,328.8 1170.0,327.7 1174.0,325.1 1178.0,323.8 1182.0,324.8 1186.0,323.8 1190.0,324.5 1194.0,323.1 1198.0,324.0 1202.0,323.6 1206.0,322.9 1210.0,322.2 1214.0,321.3 1218.0,322.2 1222.0,321.0 1226.0,321.3 1230.0,319.9 1234.0,319.5 1238.0,319.4 1242.0,320.5 1246.0,319.0 1250.0,319.1 1254.0,316.5 1258.0,315.7 1262.0,314.7 1266.0,314.6 1270.0,312.9 1274.0,313.0 1278.0,313.4 1282.0,311.3 1286.0,311.6 1290.0,310.2 1294.0,309.4 1298.0,308.0 1302.0,307.2 1306.0,313.4 1310.0,324.4 1314.0,323.7 1318.0,321.9 1322.0,319.3 1326.0,315.0 1326.0,315.7" fill="none" stroke="#ffffff" stroke-width="2" stroke-linejoin="round" shape-rendering="geometricPrecision"/>
</g>
<rect x="161" y="34" width="1455" height="1" fill="#fff" />
<rect x="161" y="304" width="1455" height="1" fill="#fff" />
<rect x="161" y="306" width="1455" height="1" fill="#fff" />
<rect x="161" y="349" width="1455" height="1" fill="#fff" />
<rect x="161" y="34" width="1" height="271" fill="#fff" />
<rect x="1615" y="34" width="1" height="271" fill="#fff" />
<rect x="161" y="306" width="1" height="44" fill="#fff" />
<rect x="1615" y="306" width="1" height="44" fill="#fff" />
<path d="M1321,35 L1329,35 L1325,40 Z" fill="#fff" shape-rendering="geometricPrecision"/>
<path d="M166,39 L173,39 L169.5,43 Z" fill="#fff" shape-rendering="geometricPrecision"/>
<text x="176" y="45" font-size="9.5" fill="#fff" text-anchor="start" font-weight="normal" textLength="200" lengthAdjust="spacing" shape-rendering="geometricPrecision">USDRUR,H4  72.8685 73.6000 71.2490 71.7780</text>
<text x="166" y="81" font-size="9.5" fill="#fff" text-anchor="start" font-weight="normal" textLength="34" lengthAdjust="spacing" >sell 0.20</text>
<text x="166" y="129" font-size="9.5" fill="#fff" text-anchor="start" font-weight="normal" >tp</text>
<text x="163" y="319" font-size="9.5" fill="#fff" text-anchor="start" font-weight="normal" textLength="115" lengthAdjust="spacing" >RSI(13) 77.40 RSI(3) 78.78</text>
<rect x="1615" y="48" width="5" height="1" fill="#fff" />
<text x="1620" y="51.5" font-size="9.5" fill="#fff" text-anchor="start" font-weight="normal" textLength="33" lengthAdjust="spacing" >78.8250</text>
<rect x="1615" y="80" width="5" height="1" fill="#fff" />
<text x="1620" y="83.5" font-size="9.5" fill="#fff" text-anchor="start" font-weight="normal" textLength="33" lengthAdjust="spacing" >73.8705</text>
<rect x="1615" y="112" width="5" height="1" fill="#fff" />
<text x="1620" y="115.5" font-size="9.5" fill="#fff" text-anchor="start" font-weight="normal" textLength="33" lengthAdjust="spacing" >68.9160</text>
<rect x="1615" y="144" width="5" height="1" fill="#fff" />
<text x="1620" y="147.5" font-size="9.5" fill="#fff" text-anchor="start" font-weight="normal" textLength="33" lengthAdjust="spacing" >63.9615</text>
<rect x="1615" y="176" width="5" height="1" fill="#fff" />
<text x="1620" y="179.5" font-size="9.5" fill="#fff" text-anchor="start" font-weight="normal" textLength="33" lengthAdjust="spacing" >59.0070</text>
<rect x="1615" y="209" width="5" height="1" fill="#fff" />
<text x="1620" y="212.5" font-size="9.5" fill="#fff" text-anchor="start" font-weight="normal" textLength="33" lengthAdjust="spacing" >54.0525</text>
<rect x="1615" y="240" width="5" height="1" fill="#fff" />
<text x="1620" y="243.5" font-size="9.5" fill="#fff" text-anchor="start" font-weight="normal" textLength="33" lengthAdjust="spacing" >49.0980</text>
<rect x="1615" y="273" width="5" height="1" fill="#fff" />
<text x="1620" y="276.5" font-size="9.5" fill="#fff" text-anchor="start" font-weight="normal" textLength="33" lengthAdjust="spacing" >44.1435</text>
<rect x="1615" y="306" width="5" height="1" fill="#fff" />
<text x="1621" y="315" font-size="9.5" fill="#fff" text-anchor="start" font-weight="normal" textLength="27" lengthAdjust="spacing" >100.00</text>
<rect x="1615" y="322" width="5" height="1" fill="#fff" />
<text x="1621" y="326" font-size="9.5" fill="#fff" text-anchor="start" font-weight="normal" textLength="23" lengthAdjust="spacing" >65.00</text>
<rect x="1615" y="334" width="5" height="1" fill="#fff" />
<text x="1621" y="338" font-size="9.5" fill="#fff" text-anchor="start" font-weight="normal" textLength="23" lengthAdjust="spacing" >35.00</text>
<rect x="1615" y="348" width="5" height="1" fill="#fff" />
<text x="1621" y="347" font-size="9.5" fill="#fff" text-anchor="start" font-weight="normal" textLength="18" lengthAdjust="spacing" >0.00</text>
<rect x="1618" y="87" width="39" height="11" fill="#d01818" />
<rect x="1618" y="89" width="39" height="11" fill="#fff" />
<text x="1620" y="98" font-size="9.5" fill="#000" text-anchor="start" font-weight="normal" textLength="33" lengthAdjust="spacing" >71.7780</text>
<rect x="161" y="349" width="1" height="5" fill="#fff" />
<text x="162" y="362" font-size="9.5" fill="#fff" text-anchor="start" font-weight="normal" textLength="50" lengthAdjust="spacing" >10 Oct 2014</text>
<rect x="225" y="349" width="1" height="5" fill="#fff" />
<text x="226" y="362" font-size="9.5" fill="#fff" text-anchor="start" font-weight="normal" textLength="53" lengthAdjust="spacing" >14 Oct 20:00</text>
<rect x="289" y="349" width="1" height="5" fill="#fff" />
<text x="290" y="362" font-size="9.5" fill="#fff" text-anchor="start" font-weight="normal" textLength="53" lengthAdjust="spacing" >17 Oct 12:00</text>
<rect x="353" y="349" width="1" height="5" fill="#fff" />
<text x="354" y="362" font-size="9.5" fill="#fff" text-anchor="start" font-weight="normal" textLength="53" lengthAdjust="spacing" >22 Oct 00:00</text>
<rect x="417" y="349" width="1" height="5" fill="#fff" />
<text x="418" y="362" font-size="9.5" fill="#fff" text-anchor="start" font-weight="normal" textLength="53" lengthAdjust="spacing" >24 Oct 16:00</text>
<rect x="481" y="349" width="1" height="5" fill="#fff" />
<text x="482" y="362" font-size="9.5" fill="#fff" text-anchor="start" font-weight="normal" textLength="53" lengthAdjust="spacing" >29 Oct 04:00</text>
<rect x="545" y="349" width="1" height="5" fill="#fff" />
<text x="546" y="362" font-size="9.5" fill="#fff" text-anchor="start" font-weight="normal" textLength="53" lengthAdjust="spacing" >31 Oct 20:00</text>
<rect x="609" y="349" width="1" height="5" fill="#fff" />
<text x="610" y="362" font-size="9.5" fill="#fff" text-anchor="start" font-weight="normal" textLength="48" lengthAdjust="spacing" >5 Nov 16:00</text>
<rect x="673" y="349" width="1" height="5" fill="#fff" />
<text x="674" y="362" font-size="9.5" fill="#fff" text-anchor="start" font-weight="normal" textLength="53" lengthAdjust="spacing" >10 Nov 04:00</text>
<rect x="737" y="349" width="1" height="5" fill="#fff" />
<text x="738" y="362" font-size="9.5" fill="#fff" text-anchor="start" font-weight="normal" textLength="53" lengthAdjust="spacing" >12 Nov 20:00</text>
<rect x="801" y="349" width="1" height="5" fill="#fff" />
<text x="802" y="362" font-size="9.5" fill="#fff" text-anchor="start" font-weight="normal" textLength="53" lengthAdjust="spacing" >17 Nov 08:00</text>
<rect x="865" y="349" width="1" height="5" fill="#fff" />
<text x="866" y="362" font-size="9.5" fill="#fff" text-anchor="start" font-weight="normal" textLength="53" lengthAdjust="spacing" >20 Nov 00:00</text>
<rect x="929" y="349" width="1" height="5" fill="#fff" />
<text x="930" y="362" font-size="9.5" fill="#fff" text-anchor="start" font-weight="normal" textLength="53" lengthAdjust="spacing" >24 Nov 12:00</text>
<rect x="993" y="349" width="1" height="5" fill="#fff" />
<text x="994" y="362" font-size="9.5" fill="#fff" text-anchor="start" font-weight="normal" textLength="53" lengthAdjust="spacing" >27 Nov 04:00</text>
<rect x="1057" y="349" width="1" height="5" fill="#fff" />
<text x="1058" y="362" font-size="9.5" fill="#fff" text-anchor="start" font-weight="normal" textLength="48" lengthAdjust="spacing" >1 Dec 16:00</text>
<rect x="1121" y="349" width="1" height="5" fill="#fff" />
<text x="1122" y="362" font-size="9.5" fill="#fff" text-anchor="start" font-weight="normal" textLength="48" lengthAdjust="spacing" >4 Dec 08:00</text>
<rect x="1185" y="349" width="1" height="5" fill="#fff" />
<text x="1186" y="362" font-size="9.5" fill="#fff" text-anchor="start" font-weight="normal" textLength="48" lengthAdjust="spacing" >8 Dec 20:00</text>
<rect x="1249" y="349" width="1" height="5" fill="#fff" />
<text x="1250" y="362" font-size="9.5" fill="#fff" text-anchor="start" font-weight="normal" textLength="53" lengthAdjust="spacing" >11 Dec 12:00</text>
<rect x="1313" y="349" width="1" height="5" fill="#fff" />
<text x="1314" y="362" font-size="9.5" fill="#fff" text-anchor="start" font-weight="normal" textLength="53" lengthAdjust="spacing" >16 Dec 04:00</text>
<rect x="1475.5" y="264.5" width="119" height="19" fill="#fff" stroke="#b01818" stroke-width="1.5"/>
<text x="1535.0" y="279" font-size="12.5" fill="#c02020" text-anchor="middle" font-weight="normal" >2 h 30 m 0 s</text>
<clipPath id="cm2"><rect x="164" y="415" width="718" height="264"/></clipPath>
<clipPath id="cr2"><rect x="164" y="682" width="718" height="41"/></clipPath>
<line x1="335.5" y1="414" x2="335.5" y2="679" stroke="#fff" stroke-width="1" stroke-dasharray="3 3"/>
<line x1="335.5" y1="682" x2="335.5" y2="723" stroke="#fff" stroke-width="1" stroke-dasharray="3 3"/>
<line x1="543.5" y1="414" x2="543.5" y2="679" stroke="#fff" stroke-width="1" stroke-dasharray="3 3"/>
<line x1="543.5" y1="682" x2="543.5" y2="723" stroke="#fff" stroke-width="1" stroke-dasharray="3 3"/>
<line x1="751.5" y1="414" x2="751.5" y2="679" stroke="#fff" stroke-width="1" stroke-dasharray="3 3"/>
<line x1="751.5" y1="682" x2="751.5" y2="723" stroke="#fff" stroke-width="1" stroke-dasharray="3 3"/>
<line x1="164" y1="696.5" x2="882" y2="696.5" stroke="#fff" stroke-width="1" stroke-dasharray="3 3"/>
<line x1="164" y1="709.5" x2="882" y2="709.5" stroke="#fff" stroke-width="1" stroke-dasharray="3 3"/>
<g clip-path="url(#cm2)">
<line x1="164" y1="454.5" x2="882" y2="454.5" stroke="#3a8c3a" stroke-width="1" stroke-dasharray="9 6 3 6" stroke-dashoffset="1"/>
<line x1="164" y1="491.5" x2="882" y2="491.5" stroke="#e07048" stroke-width="1" stroke-dasharray="9 6 3 6" stroke-dashoffset="1"/>
<rect x="164" y="460" width="718" height="1" fill="#4a0c0c" />
<rect x="164" y="461" width="718" height="1" fill="#d42626" />
<rect x="164" y="463" width="718" height="1" fill="#ffffff" />
<rect x="165" y="661" width="1" height="8" fill="#0e8e0e" />
<rect x="164" y="663" width="3" height="4" fill="#0e8e0e" />
<rect x="169" y="661" width="1" height="9" fill="#ff2020" />
<rect x="168" y="663" width="3" height="3" fill="#ff2020" />
<rect x="173" y="660" width="1" height="8" fill="#0e8e0e" />
<rect x="172" y="663" width="3" height="3" fill="#0e8e0e" />
<rect x="177" y="663" width="1" height="4" fill="#ff2020" />
<rect x="176" y="663" width="3" height="2" fill="#ff2020" />
<rect x="181" y="665" width="1" height="3" fill="#0e8e0e" />
<rect x="180" y="666" width="3" height="1" fill="#0e8e0e" />
<rect x="185" y="661" width="1" height="8" fill="#0e8e0e" />
<rect x="184" y="663" width="3" height="2" fill="#0e8e0e" />
<rect x="189" y="661" width="1" height="4" fill="#0e8e0e" />
<rect x="188" y="661" width="3" height="2" fill="#0e8e0e" />
<rect x="193" y="658" width="1" height="5" fill="#0e8e0e" />
<rect x="192" y="658" width="3" height="3" fill="#0e8e0e" />
<rect x="197" y="653" width="1" height="6" fill="#0e8e0e" />
<rect x="196" y="653" width="3" height="6" fill="#0e8e0e" />
<rect x="201" y="648" width="1" height="6" fill="#ff2020" />
<rect x="200" y="651" width="3" height="2" fill="#ff2020" />
<rect x="205" y="649" width="1" height="5" fill="#0e8e0e" />
<rect x="204" y="650" width="3" height="2" fill="#0e8e0e" />
<rect x="209" y="649" width="1" height="5" fill="#0e8e0e" />
<rect x="208" y="650" width="3" height="3" fill="#0e8e0e" />
<rect x="213" y="645" width="1" height="8" fill="#ff2020" />
<rect x="212" y="648" width="3" height="4" fill="#ff2020" />
<rect x="217" y="648" width="1" height="8" fill="#0e8e0e" />
<rect x="216" y="650" width="3" height="2" fill="#0e8e0e" />
<rect x="221" y="649" width="1" height="6" fill="#ff2020" />
<rect x="220" y="650" width="3" height="3" fill="#ff2020" />
<rect x="225" y="650" width="1" height="8" fill="#ff2020" />
<rect x="224" y="653" width="3" height="2" fill="#ff2020" />
<rect x="229" y="653" width="1" height="7" fill="#0e8e0e" />
<rect x="228" y="654" width="3" height="4" fill="#0e8e0e" />
<rect x="233" y="650" width="1" height="7" fill="#ff2020" />
<rect x="232" y="651" width="3" height="3" fill="#ff2020" />
<rect x="237" y="652" width="1" height="6" fill="#0e8e0e" />
<rect x="236" y="652" width="3" height="2" fill="#0e8e0e" />
<rect x="241" y="649" width="1" height="7" fill="#ff2020" />
<rect x="240" y="652" width="3" height="2" fill="#ff2020" />
<rect x="245" y="652" width="1" height="6" fill="#0e8e0e" />
<rect x="244" y="655" width="3" height="2" fill="#0e8e0e" />
<rect x="249" y="651" width="1" height="5" fill="#ff2020" />
<rect x="248" y="652" width="3" height="2" fill="#ff2020" />
<rect x="253" y="653" width="1" height="6" fill="#ff2020" />
<rect x="252" y="654" width="3" height="3" fill="#ff2020" />
<rect x="257" y="653" width="1" height="5" fill="#ff2020" />
<rect x="256" y="654" width="3" height="1" fill="#ff2020" />
<rect x="261" y="652" width="1" height="7" fill="#ff2020" />
<rect x="260" y="653" width="3" height="4" fill="#ff2020" />
<rect x="265" y="655" width="1" height="8" fill="#ff2020" />
<rect x="264" y="656" width="3" height="3" fill="#ff2020" />
<rect x="269" y="656" width="1" height="6" fill="#0e8e0e" />
<rect x="268" y="657" width="3" height="3" fill="#0e8e0e" />
<rect x="273" y="656" width="1" height="4" fill="#ff2020" />
<rect x="272" y="657" width="3" height="2" fill="#ff2020" />
<rect x="277" y="654" width="1" height="6" fill="#ff2020" />
<rect x="276" y="656" width="3" height="1" fill="#ff2020" />
<rect x="281" y="656" width="1" height="5" fill="#0e8e0e" />
<rect x="280" y="657" width="3" height="2" fill="#0e8e0e" />
<rect x="285" y="655" width="1" height="4" fill="#ff2020" />
<rect x="284" y="655" width="3" height="2" fill="#ff2020" />
<rect x="289" y="656" width="1" height="6" fill="#ff2020" />
<rect x="288" y="657" width="3" height="3" fill="#ff2020" />
<rect x="293" y="658" width="1" height="5" fill="#ff2020" />
<rect x="292" y="660" width="3" height="2" fill="#ff2020" />
<rect x="297" y="659" width="1" height="6" fill="#0e8e0e" />
<rect x="296" y="660" width="3" height="3" fill="#0e8e0e" />
<rect x="301" y="660" width="1" height="5" fill="#ff2020" />
<rect x="300" y="660" width="3" height="2" fill="#ff2020" />
<rect x="305" y="661" width="1" height="4" fill="#0e8e0e" />
<rect x="304" y="663" width="3" height="1" fill="#0e8e0e" />
<rect x="309" y="659" width="1" height="5" fill="#0e8e0e" />
<rect x="308" y="661" width="3" height="1" fill="#0e8e0e" />
<rect x="313" y="659" width="1" height="3" fill="#ff2020" />
<rect x="312" y="660" width="3" height="1" fill="#ff2020" />
<rect x="317" y="659" width="1" height="6" fill="#0e8e0e" />
<rect x="316" y="662" width="3" height="1" fill="#0e8e0e" />
<rect x="321" y="661" width="1" height="4" fill="#0e8e0e" />
<rect x="320" y="662" width="3" height="1" fill="#0e8e0e" />
<rect x="325" y="662" width="1" height="3" fill="#0e8e0e" />
<rect x="324" y="662" width="3" height="1" fill="#0e8e0e" />
<rect x="329" y="662" width="1" height="3" fill="#ff2020" />
<rect x="328" y="662" width="3" height="2" fill="#ff2020" />
<rect x="333" y="662" width="1" height="5" fill="#ff2020" />
<rect x="332" y="663" width="3" height="2" fill="#ff2020" />
<rect x="337" y="662" width="1" height="4" fill="#ff2020" />
<rect x="336" y="663" width="3" height="1" fill="#ff2020" />
<rect x="341" y="663" width="1" height="5" fill="#ff2020" />
<rect x="340" y="664" width="3" height="1" fill="#ff2020" />
<rect x="345" y="663" width="1" height="4" fill="#ff2020" />
<rect x="344" y="663" width="3" height="2" fill="#ff2020" />
<rect x="349" y="662" width="1" height="4" fill="#ff2020" />
<rect x="348" y="664" width="3" height="1" fill="#ff2020" />
<rect x="353" y="661" width="1" height="6" fill="#ff2020" />
<rect x="352" y="663" width="3" height="2" fill="#ff2020" />
<rect x="357" y="663" width="1" height="4" fill="#ff2020" />
<rect x="356" y="664" width="3" height="1" fill="#ff2020" />
<rect x="361" y="666" width="1" height="4" fill="#0e8e0e" />
<rect x="360" y="666" width="3" height="2" fill="#0e8e0e" />
<rect x="365" y="664" width="1" height="5" fill="#0e8e0e" />
<rect x="364" y="665" width="3" height="3" fill="#0e8e0e" />
<rect x="369" y="663" width="1" height="3" fill="#ff2020" />
<rect x="368" y="664" width="3" height="1" fill="#ff2020" />
<rect x="373" y="662" width="1" height="5" fill="#0e8e0e" />
<rect x="372" y="663" width="3" height="1" fill="#0e8e0e" />
<rect x="377" y="662" width="1" height="2" fill="#0e8e0e" />
<rect x="376" y="662" width="3" height="1" fill="#0e8e0e" />
<rect x="381" y="663" width="1" height="3" fill="#0e8e0e" />
<rect x="380" y="663" width="3" height="1" fill="#0e8e0e" />
<rect x="385" y="662" width="1" height="4" fill="#0e8e0e" />
<rect x="384" y="662" width="3" height="2" fill="#0e8e0e" />
<rect x="389" y="659" width="1" height="4" fill="#0e8e0e" />
<rect x="388" y="661" width="3" height="2" fill="#0e8e0e" />
<rect x="393" y="659" width="1" height="5" fill="#0e8e0e" />
<rect x="392" y="660" width="3" height="2" fill="#0e8e0e" />
<rect x="397" y="661" width="1" height="2" fill="#0e8e0e" />
<rect x="396" y="661" width="3" height="1" fill="#0e8e0e" />
<rect x="401" y="659" width="1" height="5" fill="#0e8e0e" />
<rect x="400" y="661" width="3" height="1" fill="#0e8e0e" />
<rect x="405" y="660" width="1" height="4" fill="#0e8e0e" />
<rect x="404" y="661" width="3" height="1" fill="#0e8e0e" />
<rect x="409" y="659" width="1" height="6" fill="#0e8e0e" />
<rect x="408" y="660" width="3" height="1" fill="#0e8e0e" />
<rect x="413" y="660" width="1" height="3" fill="#ff2020" />
<rect x="412" y="660" width="3" height="1" fill="#ff2020" />
<rect x="417" y="659" width="1" height="5" fill="#0e8e0e" />
<rect x="416" y="660" width="3" height="2" fill="#0e8e0e" />
<rect x="421" y="658" width="1" height="5" fill="#ff2020" />
<rect x="420" y="658" width="3" height="2" fill="#ff2020" />
<rect x="425" y="657" width="1" height="5" fill="#0e8e0e" />
<rect x="424" y="659" width="3" height="1" fill="#0e8e0e" />
<rect x="429" y="658" width="1" height="4" fill="#ff2020" />
<rect x="428" y="659" width="3" height="1" fill="#ff2020" />
<rect x="433" y="657" width="1" height="5" fill="#0e8e0e" />
<rect x="432" y="658" width="3" height="2" fill="#0e8e0e" />
<rect x="437" y="657" width="1" height="3" fill="#ff2020" />
<rect x="436" y="657" width="3" height="2" fill="#ff2020" />
<rect x="441" y="654" width="1" height="5" fill="#ff2020" />
<rect x="440" y="656" width="3" height="1" fill="#ff2020" />
<rect x="445" y="656" width="1" height="4" fill="#0e8e0e" />
<rect x="444" y="656" width="3" height="1" fill="#0e8e0e" />
<rect x="449" y="654" width="1" height="6" fill="#0e8e0e" />
<rect x="448" y="656" width="3" height="2" fill="#0e8e0e" />
<rect x="453" y="655" width="1" height="5" fill="#0e8e0e" />
<rect x="452" y="656" width="3" height="1" fill="#0e8e0e" />
<rect x="457" y="655" width="1" height="3" fill="#0e8e0e" />
<rect x="456" y="655" width="3" height="1" fill="#0e8e0e" />
<rect x="461" y="653" width="1" height="3" fill="#0e8e0e" />
<rect x="460" y="654" width="3" height="1" fill="#0e8e0e" />
<rect x="465" y="651" width="1" height="5" fill="#ff2020" />
<rect x="464" y="653" width="3" height="1" fill="#ff2020" />
<rect x="469" y="651" width="1" height="3" fill="#ff2020" />
<rect x="468" y="652" width="3" height="2" fill="#ff2020" />
<rect x="473" y="653" width="1" height="5" fill="#ff2020" />
<rect x="472" y="653" width="3" height="2" fill="#ff2020" />
<rect x="477" y="654" width="1" height="3" fill="#0e8e0e" />
<rect x="476" y="654" width="3" height="1" fill="#0e8e0e" />
<rect x="481" y="650" width="1" height="6" fill="#0e8e0e" />
<rect x="480" y="653" width="3" height="1" fill="#0e8e0e" />
<rect x="485" y="650" width="1" height="6" fill="#ff2020" />
<rect x="484" y="651" width="3" height="2" fill="#ff2020" />
<rect x="489" y="652" width="1" height="4" fill="#ff2020" />
<rect x="488" y="653" width="3" height="1" fill="#ff2020" />
<rect x="493" y="654" width="1" height="5" fill="#0e8e0e" />
<rect x="492" y="654" width="3" height="2" fill="#0e8e0e" />
<rect x="497" y="651" width="1" height="4" fill="#0e8e0e" />
<rect x="496" y="652" width="3" height="2" fill="#0e8e0e" />
<rect x="501" y="649" width="1" height="8" fill="#0e8e0e" />
<rect x="500" y="652" width="3" height="2" fill="#0e8e0e" />
<rect x="505" y="650" width="1" height="4" fill="#ff2020" />
<rect x="504" y="652" width="3" height="1" fill="#ff2020" />
<rect x="509" y="651" width="1" height="3" fill="#0e8e0e" />
<rect x="508" y="652" width="3" height="1" fill="#0e8e0e" />
<rect x="513" y="650" width="1" height="3" fill="#ff2020" />
<rect x="512" y="650" width="3" height="2" fill="#ff2020" />
<rect x="517" y="649" width="1" height="4" fill="#ff2020" />
<rect x="516" y="650" width="3" height="1" fill="#ff2020" />
<rect x="521" y="648" width="1" height="6" fill="#ff2020" />
<rect x="520" y="650" width="3" height="1" fill="#ff2020" />
<rect x="525" y="651" width="1" height="3" fill="#0e8e0e" />
<rect x="524" y="651" width="3" height="1" fill="#0e8e0e" />
<rect x="529" y="649" width="1" height="6" fill="#ff2020" />
<rect x="528" y="651" width="3" height="2" fill="#ff2020" />
<rect x="533" y="651" width="1" height="5" fill="#0e8e0e" />
<rect x="532" y="652" width="3" height="1" fill="#0e8e0e" />
<rect x="537" y="651" width="1" height="6" fill="#0e8e0e" />
<rect x="536" y="651" width="3" height="2" fill="#0e8e0e" />
<rect x="541" y="648" width="1" height="7" fill="#0e8e0e" />
<rect x="540" y="649" width="3" height="2" fill="#0e8e0e" />
<rect x="545" y="647" width="1" height="4" fill="#ff2020" />
<rect x="544" y="648" width="3" height="1" fill="#ff2020" />
<rect x="549" y="644" width="1" height="5" fill="#0e8e0e" />
<rect x="548" y="646" width="3" height="3" fill="#0e8e0e" />
<rect x="553" y="641" width="1" height="9" fill="#ff2020" />
<rect x="552" y="644" width="3" height="2" fill="#ff2020" />
<rect x="557" y="644" width="1" height="4" fill="#0e8e0e" />
<rect x="556" y="644" width="3" height="2" fill="#0e8e0e" />
<rect x="561" y="640" width="1" height="6" fill="#0e8e0e" />
<rect x="560" y="642" width="3" height="2" fill="#0e8e0e" />
<rect x="565" y="638" width="1" height="6" fill="#0e8e0e" />
<rect x="564" y="639" width="3" height="3" fill="#0e8e0e" />
<rect x="569" y="635" width="1" height="7" fill="#ff2020" />
<rect x="568" y="636" width="3" height="4" fill="#ff2020" />
<rect x="573" y="638" width="1" height="8" fill="#0e8e0e" />
<rect x="572" y="641" width="3" height="1" fill="#0e8e0e" />
<rect x="577" y="636" width="1" height="7" fill="#0e8e0e" />
<rect x="576" y="638" width="3" height="3" fill="#0e8e0e" />
<rect x="581" y="634" width="1" height="7" fill="#ff2020" />
<rect x="580" y="635" width="3" height="3" fill="#ff2020" />
<rect x="585" y="635" width="1" height="8" fill="#0e8e0e" />
<rect x="584" y="636" width="3" height="2" fill="#0e8e0e" />
<rect x="589" y="634" width="1" height="5" fill="#0e8e0e" />
<rect x="588" y="634" width="3" height="2" fill="#0e8e0e" />
<rect x="593" y="634" width="1" height="5" fill="#ff2020" />
<rect x="592" y="634" width="3" height="3" fill="#ff2020" />
<rect x="597" y="631" width="1" height="8" fill="#ff2020" />
<rect x="596" y="634" width="3" height="3" fill="#ff2020" />
<rect x="601" y="637" width="1" height="5" fill="#0e8e0e" />
<rect x="600" y="638" width="3" height="1" fill="#0e8e0e" />
<rect x="605" y="637" width="1" height="5" fill="#0e8e0e" />
<rect x="604" y="638" width="3" height="2" fill="#0e8e0e" />
<rect x="609" y="637" width="1" height="7" fill="#0e8e0e" />
<rect x="608" y="638" width="3" height="3" fill="#0e8e0e" />
<rect x="613" y="638" width="1" height="6" fill="#ff2020" />
<rect x="612" y="638" width="3" height="2" fill="#ff2020" />
<rect x="617" y="639" width="1" height="5" fill="#ff2020" />
<rect x="616" y="640" width="3" height="3" fill="#ff2020" />
<rect x="621" y="643" width="1" height="4" fill="#0e8e0e" />
<rect x="620" y="644" width="3" height="1" fill="#0e8e0e" />
<rect x="625" y="640" width="1" height="6" fill="#ff2020" />
<rect x="624" y="642" width="3" height="2" fill="#ff2020" />
<rect x="629" y="639" width="1" height="8" fill="#0e8e0e" />
<rect x="628" y="642" width="3" height="3" fill="#0e8e0e" />
<rect x="633" y="640" width="1" height="6" fill="#ff2020" />
<rect x="632" y="642" width="3" height="2" fill="#ff2020" />
<rect x="637" y="645" width="1" height="3" fill="#0e8e0e" />
<rect x="636" y="645" width="3" height="2" fill="#0e8e0e" />
<rect x="641" y="644" width="1" height="7" fill="#ff2020" />
<rect x="640" y="645" width="3" height="3" fill="#ff2020" />
<rect x="645" y="645" width="1" height="9" fill="#0e8e0e" />
<rect x="644" y="647" width="3" height="3" fill="#0e8e0e" />
<rect x="649" y="644" width="1" height="6" fill="#ff2020" />
<rect x="648" y="644" width="3" height="4" fill="#ff2020" />
<rect x="653" y="647" width="1" height="8" fill="#0e8e0e" />
<rect x="652" y="648" width="3" height="3" fill="#0e8e0e" />
<rect x="657" y="644" width="1" height="6" fill="#ff2020" />
<rect x="656" y="645" width="3" height="3" fill="#ff2020" />
<rect x="661" y="641" width="1" height="8" fill="#0e8e0e" />
<rect x="660" y="642" width="3" height="6" fill="#0e8e0e" />
<rect x="665" y="638" width="1" height="9" fill="#0e8e0e" />
<rect x="664" y="641" width="3" height="4" fill="#0e8e0e" />
<rect x="669" y="635" width="1" height="8" fill="#0e8e0e" />
<rect x="668" y="637" width="3" height="4" fill="#0e8e0e" />
<rect x="673" y="633" width="1" height="8" fill="#0e8e0e" />
<rect x="672" y="634" width="3" height="3" fill="#0e8e0e" />
<rect x="677" y="630" width="1" height="5" fill="#ff2020" />
<rect x="676" y="631" width="3" height="2" fill="#ff2020" />
<rect x="681" y="630" width="1" height="5" fill="#0e8e0e" />
<rect x="680" y="632" width="3" height="2" fill="#0e8e0e" />
<rect x="685" y="626" width="1" height="10" fill="#0e8e0e" />
<rect x="684" y="629" width="3" height="3" fill="#0e8e0e" />
<rect x="689" y="625" width="1" height="8" fill="#0e8e0e" />
<rect x="688" y="626" width="3" height="3" fill="#0e8e0e" />
<rect x="693" y="624" width="1" height="7" fill="#0e8e0e" />
<rect x="692" y="627" width="3" height="2" fill="#0e8e0e" />
<rect x="697" y="624" width="1" height="5" fill="#0e8e0e" />
<rect x="696" y="624" width="3" height="3" fill="#0e8e0e" />
<rect x="703" y="610" width="1" height="15" fill="#0e8e0e" />
<rect x="702" y="612" width="3" height="10" fill="#0e8e0e" />
<rect x="707" y="608" width="1" height="12" fill="#0e8e0e" />
<rect x="706" y="610" width="3" height="7" fill="#0e8e0e" />
<rect x="711" y="601" width="1" height="12" fill="#0e8e0e" />
<rect x="710" y="603" width="3" height="7" fill="#0e8e0e" />
<rect x="715" y="576" width="1" height="30" fill="#0e8e0e" />
<rect x="714" y="585" width="3" height="18" fill="#0e8e0e" />
<rect x="719" y="578" width="1" height="15" fill="#0e8e0e" />
<rect x="718" y="583" width="3" height="7" fill="#0e8e0e" />
<rect x="723" y="581" width="1" height="16" fill="#ff2020" />
<rect x="722" y="583" width="3" height="8" fill="#ff2020" />
<rect x="727" y="565" width="1" height="34" fill="#0e8e0e" />
<rect x="726" y="567" width="3" height="28" fill="#0e8e0e" />
<rect x="731" y="546" width="1" height="24" fill="#0e8e0e" />
<rect x="730" y="557" width="3" height="10" fill="#0e8e0e" />
<rect x="735" y="527" width="1" height="34" fill="#0e8e0e" />
<rect x="734" y="529" width="3" height="29" fill="#0e8e0e" />
<rect x="739" y="428" width="1" height="107" fill="#0e8e0e" />
<rect x="738" y="463" width="3" height="67" fill="#0e8e0e" />
<path d="M163.0,671.7 C172.8,671.5 194.3,671.0 221.5,670.5 C248.7,670.0 292.6,669.2 326.0,668.6 C359.4,668.0 395.9,667.4 421.6,667.0 C447.3,666.6 459.8,666.4 480.0,666.1 C500.2,665.8 516.7,665.8 542.9,665.0 C569.1,664.2 610.3,662.5 637.2,661.2 C664.1,659.9 689.5,658.4 704.5,657.2 C719.5,656.0 721.2,655.0 727.0,653.8 C732.8,652.6 737.2,650.6 739.3,650.0" fill="none" stroke="#ffffff" stroke-width="3.2" stroke-linejoin="round" shape-rendering="geometricPrecision"/>
<path d="M163.0,664.5 C166.3,665.0 173.3,667.4 183.0,667.4 C192.7,667.4 207.8,666.2 221.0,664.5 C234.2,662.8 242.1,658.0 262.0,657.4 C281.9,656.8 323.6,659.9 340.6,661.0 C357.6,662.1 358.1,663.4 364.0,663.9 C369.9,664.4 364.0,664.7 376.0,664.0 C388.0,663.3 418.7,661.4 436.0,659.8 C453.3,658.2 462.2,655.4 480.0,654.5 C497.8,653.6 529.8,654.8 542.9,654.5 C556.0,654.2 550.4,654.3 558.6,652.7 C566.8,651.1 582.9,646.7 592.3,644.8 C601.6,642.9 607.2,642.0 614.7,641.4 C622.2,640.8 626.0,640.9 637.2,641.0 C648.4,641.1 672.6,642.1 682.0,641.9 C691.4,641.7 687.7,641.9 693.3,639.6 C698.9,637.3 710.1,631.4 715.7,628.0 C721.3,624.6 723.1,623.5 727.0,619.0 C730.9,614.5 737.2,604.0 739.3,601.0" fill="none" stroke="#a0d84c" stroke-width="2.2" stroke-linejoin="round" shape-rendering="geometricPrecision"/>
<polyline points="163.0,668.0 185.0,664.0 200.0,658.0 215.0,652.0 240.0,653.0 262.0,656.0 300.0,660.0 340.0,663.0 380.0,664.0 420.0,660.0 450.0,657.0 480.0,654.5 547.4,652.7 583.3,637.0 614.7,640.3 632.7,647.0 650.6,647.0 659.6,642.6 682.0,634.7 704.5,623.5 715.7,607.8 727.0,589.8 734.8,567.4 739.3,543.8" fill="none" stroke="#ffff30" stroke-width="1" stroke-linejoin="round" shape-rendering="geometricPrecision"/>
</g>
<g clip-path="url(#cr2)">
<polyline points="164.0,700.8 168.0,711.9 172.0,701.9 176.0,707.3 180.0,698.1 184.0,695.8 188.0,708.1 192.0,698.7 196.0,700.7 200.0,698.0 204.0,695.9 208.0,696.5 212.0,691.4 216.0,700.8 220.0,691.9 224.0,689.6 228.0,684.0 232.0,685.7 236.0,689.6 240.0,701.9 244.0,699.0 248.0,692.4 252.0,691.8 256.0,706.2 260.0,696.7 264.0,702.4 268.0,701.5 272.0,706.0 276.0,702.0 280.0,706.5 284.0,705.1 288.0,706.8 292.0,712.4 296.0,709.9 300.0,700.0 304.0,692.6 308.0,705.9 312.0,705.2 316.0,699.2 320.0,710.7 324.0,710.6 328.0,713.7 332.0,718.8 336.0,710.2 340.0,706.6 344.0,715.0 348.0,705.4 352.0,710.4 356.0,699.5 360.0,704.7 364.0,707.9 368.0,714.4 372.0,715.9 376.0,709.8 380.0,699.3 384.0,691.6 388.0,694.0 392.0,696.5 396.0,689.7 400.0,702.4 404.0,701.3 408.0,704.3 412.0,696.4 416.0,691.6 420.0,683.9 424.0,685.5 428.0,684.7 432.0,687.4 436.0,689.3 440.0,699.9 444.0,706.7 448.0,696.4 452.0,694.5 456.0,688.7 460.0,695.0 464.0,704.9 468.0,695.5 472.0,704.1 476.0,700.8 480.0,692.4 484.0,702.5 488.0,699.7 492.0,694.6 496.0,696.9 500.0,693.5 504.0,694.1 508.0,694.8 512.0,695.1 516.0,698.6 520.0,694.7 524.0,688.4 528.0,684.4 532.0,682.2 536.0,688.8 540.0,689.4 544.0,697.5 548.0,695.9 552.0,698.4 556.0,705.4 560.0,691.3 564.0,682.0 568.0,682.0 572.0,682.0 576.0,685.8 580.0,693.2 584.0,691.9 588.0,704.2 592.0,692.8 596.0,700.9 600.0,693.2 604.0,701.5 608.0,689.6 612.0,703.3 616.0,708.2 620.0,716.6 624.0,714.3 628.0,704.5 632.0,714.2 636.0,709.7 640.0,699.0 644.0,701.6 648.0,700.3 652.0,698.6 656.0,691.2 660.0,685.7 664.0,691.1 668.0,691.4 672.0,684.9 676.0,686.9 680.0,693.4 684.0,696.8 688.0,693.7 692.0,689.7 696.0,686.1 700.0,682.0 704.0,682.0 708.0,682.0 712.0,682.0 716.0,682.0 720.0,686.9 724.0,688.8 728.0,682.0 732.0,684.0 736.0,685.7 740.0,682.0" fill="none" stroke="#d02424" stroke-width="1" stroke-linejoin="round" shape-rendering="geometricPrecision"/>
<polyline points="164.0,706.8 168.0,706.6 172.0,705.7 176.0,705.1 180.0,704.3 184.0,705.4 188.0,703.8 192.0,702.3 196.0,699.6 200.0,698.8 204.0,696.5 208.0,697.8 212.0,698.4 216.0,698.0 220.0,698.6 224.0,699.1 228.0,698.5 232.0,699.5 236.0,700.2 240.0,699.5 244.0,700.8 248.0,701.2 252.0,702.3 256.0,702.0 260.0,702.3 264.0,704.4 268.0,705.4 272.0,704.7 276.0,703.7 280.0,703.6 284.0,704.1 288.0,702.6 292.0,703.1 296.0,702.4 300.0,701.8 304.0,703.0 308.0,702.9 312.0,704.6 316.0,705.2 320.0,705.0 324.0,705.9 328.0,706.6 332.0,707.3 336.0,708.1 340.0,706.7 344.0,707.9 348.0,708.7 352.0,706.6 356.0,705.7 360.0,703.7 364.0,704.5 368.0,703.1 372.0,701.5 376.0,701.9 380.0,700.0 384.0,698.6 388.0,697.9 392.0,697.9 396.0,698.9 400.0,701.0 404.0,700.3 408.0,698.5 412.0,699.6 416.0,697.3 420.0,697.2 424.0,697.6 428.0,696.3 432.0,695.4 436.0,696.5 440.0,697.5 444.0,696.9 448.0,698.4 452.0,696.3 456.0,696.8 460.0,697.2 464.0,696.3 468.0,697.3 472.0,698.8 476.0,702.9 480.0,703.5 484.0,703.7 488.0,704.2 492.0,703.3 496.0,704.1 500.0,703.3 504.0,701.4 508.0,700.2 512.0,700.5 516.0,699.6 520.0,698.8 524.0,699.9 528.0,698.7 532.0,698.9 536.0,699.0 540.0,697.2 544.0,695.6 548.0,694.5 552.0,694.0 556.0,692.9 560.0,692.2 564.0,692.0 568.0,692.4 572.0,690.5 576.0,690.3 580.0,692.0 584.0,693.9 588.0,695.6 592.0,697.7 596.0,697.2 600.0,696.0 604.0,696.0 608.0,695.3 612.0,698.3 616.0,699.4 620.0,702.1 624.0,704.7 628.0,705.4 632.0,704.7 636.0,705.5 640.0,704.2 644.0,702.7 648.0,701.1 652.0,700.2 656.0,699.5 660.0,697.2 664.0,695.6 668.0,695.5 672.0,694.0 676.0,693.1 680.0,693.8 684.0,691.7 688.0,692.1 692.0,690.3 696.0,690.3 700.0,688.9 704.0,686.1 708.0,685.1 712.0,685.9 716.0,685.0 720.0,684.3 724.0,685.7 728.0,688.9 732.0,688.1 736.0,686.2 740.0,683.5 740.0,684.3" fill="none" stroke="#ffffff" stroke-width="2" stroke-linejoin="round" shape-rendering="geometricPrecision"/>
</g>
<rect x="163" y="414" width="720" height="1" fill="#fff" />
<rect x="163" y="679" width="720" height="1" fill="#fff" />
<rect x="163" y="681" width="720" height="1" fill="#fff" />
<rect x="163" y="723" width="720" height="1" fill="#fff" />
<rect x="163" y="414" width="1" height="266" fill="#fff" />
<rect x="882" y="414" width="1" height="266" fill="#fff" />
<rect x="163" y="681" width="1" height="43" fill="#fff" />
<rect x="882" y="681" width="1" height="43" fill="#fff" />
<path d="M735,415 L743,415 L739,420 Z" fill="#fff" shape-rendering="geometricPrecision"/>
<path d="M168,419 L175,419 L171.5,423 Z" fill="#fff" shape-rendering="geometricPrecision"/>
<text x="178" y="425" font-size="9.5" fill="#fff" text-anchor="start" font-weight="normal" textLength="219" lengthAdjust="spacing" shape-rendering="geometricPrecision">USDRUR,Weekly  58.0500 79.1335 57.5045 71.7780</text>
<text x="168" y="452" font-size="9.5" fill="#fff" text-anchor="start" font-weight="normal" textLength="34" lengthAdjust="spacing" >sell 0.20</text>
<text x="168" y="489" font-size="9.5" fill="#fff" text-anchor="start" font-weight="normal" >tp</text>
<text x="165" y="694" font-size="9.5" fill="#fff" text-anchor="start" font-weight="normal" textLength="114" lengthAdjust="spacing" >RSI(13) 95.22 RSI(3) 98.64</text>
<rect x="882" y="423" width="5" height="1" fill="#fff" />
<text x="887" y="426.5" font-size="9.5" fill="#fff" text-anchor="start" font-weight="normal" textLength="33" lengthAdjust="spacing" >79.7470</text>
<rect x="882" y="455" width="5" height="1" fill="#fff" />
<text x="887" y="458.5" font-size="9.5" fill="#fff" text-anchor="start" font-weight="normal" textLength="33" lengthAdjust="spacing" >73.2190</text>
<rect x="882" y="488" width="5" height="1" fill="#fff" />
<text x="887" y="491.5" font-size="9.5" fill="#fff" text-anchor="start" font-weight="normal" textLength="33" lengthAdjust="spacing" >66.6910</text>
<rect x="882" y="519" width="5" height="1" fill="#fff" />
<text x="887" y="522.5" font-size="9.5" fill="#fff" text-anchor="start" font-weight="normal" textLength="33" lengthAdjust="spacing" >60.1630</text>
<rect x="882" y="551" width="5" height="1" fill="#fff" />
<text x="887" y="554.5" font-size="9.5" fill="#fff" text-anchor="start" font-weight="normal" textLength="33" lengthAdjust="spacing" >53.6350</text>
<rect x="882" y="583" width="5" height="1" fill="#fff" />
<text x="887" y="586.5" font-size="9.5" fill="#fff" text-anchor="start" font-weight="normal" textLength="33" lengthAdjust="spacing" >47.1070</text>
<rect x="882" y="615" width="5" height="1" fill="#fff" />
<text x="887" y="618.5" font-size="9.5" fill="#fff" text-anchor="start" font-weight="normal" textLength="33" lengthAdjust="spacing" >40.5790</text>
<rect x="882" y="647" width="5" height="1" fill="#fff" />
<text x="887" y="650.5" font-size="9.5" fill="#fff" text-anchor="start" font-weight="normal" textLength="33" lengthAdjust="spacing" >34.0510</text>
<rect x="882" y="681" width="5" height="1" fill="#fff" />
<text x="888" y="690" font-size="9.5" fill="#fff" text-anchor="start" font-weight="normal" textLength="27" lengthAdjust="spacing" >100.00</text>
<rect x="882" y="696" width="5" height="1" fill="#fff" />
<text x="888" y="700" font-size="9.5" fill="#fff" text-anchor="start" font-weight="normal" textLength="23" lengthAdjust="spacing" >65.00</text>
<rect x="882" y="709" width="5" height="1" fill="#fff" />
<text x="888" y="713" font-size="9.5" fill="#fff" text-anchor="start" font-weight="normal" textLength="23" lengthAdjust="spacing" >35.00</text>
<rect x="882" y="722" width="5" height="1" fill="#fff" />
<text x="888" y="721" font-size="9.5" fill="#fff" text-anchor="start" font-weight="normal" textLength="18" lengthAdjust="spacing" >0.00</text>
<rect x="885" y="456" width="39" height="11" fill="#d01818" />
<rect x="885" y="458" width="39" height="11" fill="#fff" />
<text x="887" y="467" font-size="9.5" fill="#000" text-anchor="start" font-weight="normal" textLength="33" lengthAdjust="spacing" >71.7780</text>
<rect x="163" y="723" width="1" height="5" fill="#fff" />
<text x="164" y="736" font-size="9.5" fill="#fff" text-anchor="start" font-weight="normal" textLength="50" lengthAdjust="spacing" >11 Mar 2012</text>
<rect x="227" y="723" width="1" height="5" fill="#fff" />
<text x="228" y="736" font-size="9.5" fill="#fff" text-anchor="start" font-weight="normal" textLength="43" lengthAdjust="spacing" >1 Jul 2012</text>
<rect x="291" y="723" width="1" height="5" fill="#fff" />
<text x="292" y="736" font-size="9.5" fill="#fff" text-anchor="start" font-weight="normal" textLength="50" lengthAdjust="spacing" >21 Oct 2012</text>
<rect x="355" y="723" width="1" height="5" fill="#fff" />
<text x="356" y="736" font-size="9.5" fill="#fff" text-anchor="start" font-weight="normal" textLength="49" lengthAdjust="spacing" >10 Feb 2013</text>
<rect x="418" y="723" width="1" height="5" fill="#fff" />
<text x="419" y="736" font-size="9.5" fill="#fff" text-anchor="start" font-weight="normal" textLength="43" lengthAdjust="spacing" >2 Jun 2013</text>
<rect x="482" y="723" width="1" height="5" fill="#fff" />
<text x="483" y="736" font-size="9.5" fill="#fff" text-anchor="start" font-weight="normal" textLength="49" lengthAdjust="spacing" >22 Sep 2013</text>
<rect x="546" y="723" width="1" height="5" fill="#fff" />
<text x="547" y="736" font-size="9.5" fill="#fff" text-anchor="start" font-weight="normal" textLength="48" lengthAdjust="spacing" >12 Jan 2014</text>
<rect x="610" y="723" width="1" height="5" fill="#fff" />
<text x="611" y="736" font-size="9.5" fill="#fff" text-anchor="start" font-weight="normal" textLength="46" lengthAdjust="spacing" >4 May 2014</text>
<rect x="674" y="723" width="1" height="5" fill="#fff" />
<text x="675" y="736" font-size="9.5" fill="#fff" text-anchor="start" font-weight="normal" textLength="49" lengthAdjust="spacing" >24 Aug 2014</text>
<rect x="737" y="723" width="1" height="5" fill="#fff" />
<text x="738" y="736" font-size="9.5" fill="#fff" text-anchor="start" font-weight="normal" textLength="50" lengthAdjust="spacing" >14 Dec 2014</text>
<rect x="743.5" y="640.5" width="118" height="17" fill="#fff" stroke="#b01818" stroke-width="1.5"/>
<text x="802.5" y="653" font-size="12.5" fill="#c02020" text-anchor="middle" font-weight="normal" >4 d 6 h 30 m 0 s</text>
<clipPath id="cm3"><rect x="957" y="414" width="659" height="267"/></clipPath>
<clipPath id="cr3"><rect x="957" y="684" width="659" height="41"/></clipPath>
<line x1="1028.5" y1="413" x2="1028.5" y2="681" stroke="#fff" stroke-width="1" stroke-dasharray="3 3"/>
<line x1="1028.5" y1="684" x2="1028.5" y2="725" stroke="#fff" stroke-width="1" stroke-dasharray="3 3"/>
<line x1="1284.5" y1="413" x2="1284.5" y2="681" stroke="#fff" stroke-width="1" stroke-dasharray="3 3"/>
<line x1="1284.5" y1="684" x2="1284.5" y2="725" stroke="#fff" stroke-width="1" stroke-dasharray="3 3"/>
<line x1="1588.5" y1="413" x2="1588.5" y2="681" stroke="#fff" stroke-width="1" stroke-dasharray="3 3"/>
<line x1="1588.5" y1="684" x2="1588.5" y2="725" stroke="#fff" stroke-width="1" stroke-dasharray="3 3"/>
<line x1="957" y1="698.5" x2="1616" y2="698.5" stroke="#fff" stroke-width="1" stroke-dasharray="3 3"/>
<line x1="957" y1="711.5" x2="1616" y2="711.5" stroke="#fff" stroke-width="1" stroke-dasharray="3 3"/>
<g clip-path="url(#cm3)">
<line x1="957" y1="490.5" x2="1616" y2="490.5" stroke="#3a8c3a" stroke-width="1" stroke-dasharray="9 6 3 6" stroke-dashoffset="1"/>
<line x1="957" y1="578.5" x2="1616" y2="578.5" stroke="#e07048" stroke-width="1" stroke-dasharray="9 6 3 6" stroke-dashoffset="1"/>
<rect x="957" y="505" width="659" height="1" fill="#4a0c0c" />
<rect x="957" y="506" width="659" height="1" fill="#d42626" />
<rect x="957" y="511" width="659" height="1" fill="#ffffff" />
<rect x="958" y="666" width="1" height="4" fill="#0e8e0e" />
<rect x="957" y="666" width="3" height="1" fill="#0e8e0e" />
<rect x="962" y="665" width="1" height="4" fill="#ff2020" />
<rect x="961" y="665" width="3" height="1" fill="#ff2020" />
<rect x="966" y="665" width="1" height="2" fill="#ff2020" />
<rect x="965" y="665" width="3" height="1" fill="#ff2020" />
<rect x="970" y="665" width="1" height="5" fill="#0e8e0e" />
<rect x="969" y="665" width="3" height="2" fill="#0e8e0e" />
<rect x="974" y="662" width="1" height="5" fill="#ff2020" />
<rect x="973" y="664" width="3" height="1" fill="#ff2020" />
<rect x="978" y="663" width="1" height="5" fill="#0e8e0e" />
<rect x="977" y="665" width="3" height="1" fill="#0e8e0e" />
<rect x="982" y="661" width="1" height="5" fill="#ff2020" />
<rect x="981" y="664" width="3" height="1" fill="#ff2020" />
<rect x="986" y="664" width="1" height="4" fill="#ff2020" />
<rect x="985" y="665" width="3" height="2" fill="#ff2020" />
<rect x="990" y="664" width="1" height="5" fill="#0e8e0e" />
<rect x="989" y="665" width="3" height="2" fill="#0e8e0e" />
<rect x="994" y="663" width="1" height="5" fill="#0e8e0e" />
<rect x="993" y="664" width="3" height="3" fill="#0e8e0e" />
<rect x="998" y="663" width="1" height="4" fill="#ff2020" />
<rect x="997" y="664" width="3" height="2" fill="#ff2020" />
<rect x="1002" y="663" width="1" height="3" fill="#ff2020" />
<rect x="1001" y="664" width="3" height="1" fill="#ff2020" />
<rect x="1006" y="664" width="1" height="4" fill="#0e8e0e" />
<rect x="1005" y="664" width="3" height="2" fill="#0e8e0e" />
<rect x="1010" y="664" width="1" height="4" fill="#ff2020" />
<rect x="1009" y="664" width="3" height="2" fill="#ff2020" />
<rect x="1014" y="665" width="1" height="3" fill="#0e8e0e" />
<rect x="1013" y="666" width="3" height="1" fill="#0e8e0e" />
<rect x="1018" y="666" width="1" height="4" fill="#0e8e0e" />
<rect x="1017" y="666" width="3" height="2" fill="#0e8e0e" />
<rect x="1022" y="664" width="1" height="4" fill="#0e8e0e" />
<rect x="1021" y="664" width="3" height="2" fill="#0e8e0e" />
<rect x="1026" y="663" width="1" height="3" fill="#0e8e0e" />
<rect x="1025" y="663" width="3" height="1" fill="#0e8e0e" />
<rect x="1030" y="662" width="1" height="3" fill="#ff2020" />
<rect x="1029" y="662" width="3" height="2" fill="#ff2020" />
<rect x="1034" y="661" width="1" height="3" fill="#ff2020" />
<rect x="1033" y="662" width="3" height="1" fill="#ff2020" />
<rect x="1038" y="660" width="1" height="6" fill="#ff2020" />
<rect x="1037" y="661" width="3" height="1" fill="#ff2020" />
<rect x="1042" y="662" width="1" height="4" fill="#ff2020" />
<rect x="1041" y="663" width="3" height="2" fill="#ff2020" />
<rect x="1046" y="665" width="1" height="2" fill="#0e8e0e" />
<rect x="1045" y="665" width="3" height="1" fill="#0e8e0e" />
<rect x="1050" y="662" width="1" height="6" fill="#0e8e0e" />
<rect x="1049" y="664" width="3" height="1" fill="#0e8e0e" />
<rect x="1054" y="664" width="1" height="3" fill="#ff2020" />
<rect x="1053" y="664" width="3" height="1" fill="#ff2020" />
<rect x="1058" y="663" width="1" height="4" fill="#0e8e0e" />
<rect x="1057" y="664" width="3" height="1" fill="#0e8e0e" />
<rect x="1062" y="663" width="1" height="3" fill="#0e8e0e" />
<rect x="1061" y="663" width="3" height="1" fill="#0e8e0e" />
<rect x="1066" y="664" width="1" height="2" fill="#0e8e0e" />
<rect x="1065" y="664" width="3" height="1" fill="#0e8e0e" />
<rect x="1070" y="660" width="1" height="5" fill="#0e8e0e" />
<rect x="1069" y="662" width="3" height="1" fill="#0e8e0e" />
<rect x="1074" y="662" width="1" height="4" fill="#ff2020" />
<rect x="1073" y="662" width="3" height="2" fill="#ff2020" />
<rect x="1078" y="663" width="1" height="5" fill="#0e8e0e" />
<rect x="1077" y="665" width="3" height="1" fill="#0e8e0e" />
<rect x="1082" y="663" width="1" height="6" fill="#0e8e0e" />
<rect x="1081" y="664" width="3" height="2" fill="#0e8e0e" />
<rect x="1086" y="663" width="1" height="3" fill="#0e8e0e" />
<rect x="1085" y="663" width="3" height="2" fill="#0e8e0e" />
<rect x="1090" y="662" width="1" height="5" fill="#0e8e0e" />
<rect x="1089" y="663" width="3" height="2" fill="#0e8e0e" />
<rect x="1094" y="662" width="1" height="3" fill="#ff2020" />
<rect x="1093" y="662" width="3" height="1" fill="#ff2020" />
<rect x="1098" y="661" width="1" height="4" fill="#0e8e0e" />
<rect x="1097" y="662" width="3" height="1" fill="#0e8e0e" />
<rect x="1102" y="661" width="1" height="4" fill="#ff2020" />
<rect x="1101" y="662" width="3" height="1" fill="#ff2020" />
<rect x="1106" y="662" width="1" height="4" fill="#0e8e0e" />
<rect x="1105" y="663" width="3" height="1" fill="#0e8e0e" />
<rect x="1110" y="660" width="1" height="4" fill="#ff2020" />
<rect x="1109" y="662" width="3" height="1" fill="#ff2020" />
<rect x="1114" y="660" width="1" height="5" fill="#0e8e0e" />
<rect x="1113" y="660" width="3" height="2" fill="#0e8e0e" />
<rect x="1118" y="661" width="1" height="3" fill="#0e8e0e" />
<rect x="1117" y="661" width="3" height="1" fill="#0e8e0e" />
<rect x="1122" y="658" width="1" height="4" fill="#0e8e0e" />
<rect x="1121" y="659" width="3" height="2" fill="#0e8e0e" />
<rect x="1126" y="656" width="1" height="4" fill="#0e8e0e" />
<rect x="1125" y="657" width="3" height="2" fill="#0e8e0e" />
<rect x="1130" y="656" width="1" height="3" fill="#0e8e0e" />
<rect x="1129" y="657" width="3" height="1" fill="#0e8e0e" />
<rect x="1134" y="655" width="1" height="7" fill="#0e8e0e" />
<rect x="1133" y="657" width="3" height="3" fill="#0e8e0e" />
<rect x="1138" y="653" width="1" height="5" fill="#0e8e0e" />
<rect x="1137" y="655" width="3" height="3" fill="#0e8e0e" />
<rect x="1142" y="649" width="1" height="8" fill="#0e8e0e" />
<rect x="1141" y="650" width="3" height="5" fill="#0e8e0e" />
<rect x="1146" y="645" width="1" height="8" fill="#ff2020" />
<rect x="1145" y="646" width="3" height="4" fill="#ff2020" />
<rect x="1150" y="647" width="1" height="5" fill="#0e8e0e" />
<rect x="1149" y="648" width="3" height="3" fill="#0e8e0e" />
<rect x="1154" y="643" width="1" height="9" fill="#ff2020" />
<rect x="1153" y="645" width="3" height="4" fill="#ff2020" />
<rect x="1158" y="645" width="1" height="9" fill="#0e8e0e" />
<rect x="1157" y="646" width="3" height="3" fill="#0e8e0e" />
<rect x="1162" y="643" width="1" height="5" fill="#ff2020" />
<rect x="1161" y="644" width="3" height="4" fill="#ff2020" />
<rect x="1166" y="642" width="1" height="8" fill="#0e8e0e" />
<rect x="1165" y="645" width="3" height="2" fill="#0e8e0e" />
<rect x="1170" y="645" width="1" height="4" fill="#0e8e0e" />
<rect x="1169" y="646" width="3" height="1" fill="#0e8e0e" />
<rect x="1174" y="642" width="1" height="9" fill="#0e8e0e" />
<rect x="1173" y="645" width="3" height="4" fill="#0e8e0e" />
<rect x="1178" y="641" width="1" height="5" fill="#ff2020" />
<rect x="1177" y="642" width="3" height="2" fill="#ff2020" />
<rect x="1182" y="637" width="1" height="9" fill="#0e8e0e" />
<rect x="1181" y="639" width="3" height="5" fill="#0e8e0e" />
<rect x="1186" y="636" width="1" height="4" fill="#ff2020" />
<rect x="1185" y="636" width="3" height="2" fill="#ff2020" />
<rect x="1190" y="635" width="1" height="8" fill="#0e8e0e" />
<rect x="1189" y="637" width="3" height="4" fill="#0e8e0e" />
<rect x="1194" y="638" width="1" height="4" fill="#0e8e0e" />
<rect x="1193" y="638" width="3" height="1" fill="#0e8e0e" />
<rect x="1198" y="633" width="1" height="9" fill="#0e8e0e" />
<rect x="1197" y="635" width="3" height="3" fill="#0e8e0e" />
<rect x="1202" y="632" width="1" height="6" fill="#0e8e0e" />
<rect x="1201" y="632" width="3" height="3" fill="#0e8e0e" />
<rect x="1206" y="629" width="1" height="6" fill="#0e8e0e" />
<rect x="1205" y="631" width="3" height="4" fill="#0e8e0e" />
<rect x="1210" y="627" width="1" height="6" fill="#0e8e0e" />
<rect x="1209" y="628" width="3" height="3" fill="#0e8e0e" />
<rect x="1214" y="621" width="1" height="10" fill="#0e8e0e" />
<rect x="1213" y="621" width="3" height="7" fill="#0e8e0e" />
<rect x="1218" y="615" width="1" height="6" fill="#ff2020" />
<rect x="1217" y="617" width="3" height="2" fill="#ff2020" />
<rect x="1222" y="614" width="1" height="8" fill="#0e8e0e" />
<rect x="1221" y="615" width="3" height="4" fill="#0e8e0e" />
<rect x="1226" y="608" width="1" height="10" fill="#0e8e0e" />
<rect x="1225" y="608" width="3" height="6" fill="#0e8e0e" />
<rect x="1230" y="602" width="1" height="9" fill="#0e8e0e" />
<rect x="1229" y="604" width="3" height="5" fill="#0e8e0e" />
<rect x="1234" y="598" width="1" height="8" fill="#ff2020" />
<rect x="1233" y="601" width="3" height="3" fill="#ff2020" />
<rect x="1238" y="597" width="1" height="9" fill="#0e8e0e" />
<rect x="1237" y="600" width="3" height="4" fill="#0e8e0e" />
<rect x="1242" y="596" width="1" height="5" fill="#0e8e0e" />
<rect x="1241" y="598" width="3" height="2" fill="#0e8e0e" />
<rect x="1246" y="589" width="1" height="11" fill="#0e8e0e" />
<rect x="1245" y="592" width="3" height="6" fill="#0e8e0e" />
<rect x="1250" y="588" width="1" height="7" fill="#ff2020" />
<rect x="1249" y="590" width="3" height="1" fill="#ff2020" />
<rect x="1254" y="585" width="1" height="9" fill="#0e8e0e" />
<rect x="1253" y="586" width="3" height="5" fill="#0e8e0e" />
<rect x="1258" y="586" width="1" height="7" fill="#0e8e0e" />
<rect x="1257" y="587" width="3" height="2" fill="#0e8e0e" />
<rect x="1262" y="585" width="1" height="7" fill="#0e8e0e" />
<rect x="1261" y="586" width="3" height="4" fill="#0e8e0e" />
<rect x="1266" y="585" width="1" height="3" fill="#ff2020" />
<rect x="1265" y="586" width="3" height="2" fill="#ff2020" />
<rect x="1270" y="584" width="1" height="5" fill="#ff2020" />
<rect x="1269" y="585" width="3" height="3" fill="#ff2020" />
<rect x="1274" y="587" width="1" height="7" fill="#0e8e0e" />
<rect x="1273" y="587" width="3" height="2" fill="#0e8e0e" />
<rect x="1278" y="582" width="1" height="8" fill="#0e8e0e" />
<rect x="1277" y="585" width="3" height="2" fill="#0e8e0e" />
<rect x="1282" y="580" width="1" height="9" fill="#ff2020" />
<rect x="1281" y="582" width="3" height="4" fill="#ff2020" />
<rect x="1286" y="581" width="1" height="8" fill="#0e8e0e" />
<rect x="1285" y="584" width="3" height="3" fill="#0e8e0e" />
<rect x="1290" y="583" width="1" height="5" fill="#0e8e0e" />
<rect x="1289" y="584" width="3" height="3" fill="#0e8e0e" />
<rect x="1324" y="639" width="1" height="11" fill="#0e8e0e" />
<rect x="1323" y="641" width="3" height="7" fill="#0e8e0e" />
<rect x="1328" y="641" width="1" height="7" fill="#0e8e0e" />
<rect x="1327" y="643" width="3" height="2" fill="#0e8e0e" />
<rect x="1332" y="638" width="1" height="9" fill="#0e8e0e" />
<rect x="1331" y="640" width="3" height="4" fill="#0e8e0e" />
<rect x="1336" y="628" width="1" height="16" fill="#0e8e0e" />
<rect x="1335" y="630" width="3" height="11" fill="#0e8e0e" />
<rect x="1340" y="630" width="1" height="8" fill="#ff2020" />
<rect x="1339" y="632" width="3" height="2" fill="#ff2020" />
<rect x="1344" y="630" width="1" height="7" fill="#0e8e0e" />
<rect x="1343" y="632" width="3" height="2" fill="#0e8e0e" />
<rect x="1347" y="630" width="1" height="11" fill="#ff2020" />
<rect x="1346" y="632" width="3" height="6" fill="#ff2020" />
<rect x="1351" y="637" width="1" height="11" fill="#ff2020" />
<rect x="1350" y="639" width="3" height="6" fill="#ff2020" />
<rect x="1355" y="642" width="1" height="11" fill="#ff2020" />
<rect x="1354" y="644" width="3" height="6" fill="#ff2020" />
<rect x="1359" y="633" width="1" height="20" fill="#ff2020" />
<rect x="1358" y="638" width="3" height="12" fill="#ff2020" />
<rect x="1365" y="619" width="1" height="51" fill="#0e8e0e" />
<rect x="1364" y="622" width="3" height="25" fill="#0e8e0e" />
<rect x="1368" y="620" width="1" height="20" fill="#ff2020" />
<rect x="1367" y="624" width="3" height="13" fill="#ff2020" />
<rect x="1372" y="634" width="1" height="11" fill="#ff2020" />
<rect x="1371" y="636" width="3" height="6" fill="#ff2020" />
<rect x="1376" y="626" width="1" height="19" fill="#0e8e0e" />
<rect x="1375" y="628" width="3" height="14" fill="#0e8e0e" />
<rect x="1380" y="600" width="1" height="28" fill="#0e8e0e" />
<rect x="1379" y="603" width="3" height="22" fill="#0e8e0e" />
<rect x="1384" y="595" width="1" height="14" fill="#0e8e0e" />
<rect x="1383" y="597" width="3" height="9" fill="#0e8e0e" />
<rect x="1388" y="588" width="1" height="19" fill="#0e8e0e" />
<rect x="1387" y="590" width="3" height="10" fill="#0e8e0e" />
<rect x="1392" y="573" width="1" height="30" fill="#0e8e0e" />
<rect x="1391" y="575" width="3" height="25" fill="#0e8e0e" />
<rect x="1396" y="573" width="1" height="20" fill="#ff2020" />
<rect x="1395" y="575" width="3" height="15" fill="#ff2020" />
<rect x="1400" y="578" width="1" height="13" fill="#0e8e0e" />
<rect x="1399" y="580" width="3" height="8" fill="#0e8e0e" />
<rect x="1404" y="576" width="1" height="8" fill="#0e8e0e" />
<rect x="1403" y="578" width="3" height="2" fill="#0e8e0e" />
<rect x="1408" y="577" width="1" height="8" fill="#ff2020" />
<rect x="1407" y="579" width="3" height="3" fill="#ff2020" />
<rect x="1412" y="577" width="1" height="7" fill="#0e8e0e" />
<rect x="1411" y="579" width="3" height="2" fill="#0e8e0e" />
<rect x="1416" y="577" width="1" height="9" fill="#ff2020" />
<rect x="1415" y="579" width="3" height="4" fill="#ff2020" />
<rect x="1420" y="577" width="1" height="8" fill="#0e8e0e" />
<rect x="1419" y="579" width="3" height="3" fill="#0e8e0e" />
<rect x="1424" y="542" width="1" height="41" fill="#0e8e0e" />
<rect x="1423" y="545" width="3" height="35" fill="#0e8e0e" />
<rect x="1428" y="520" width="1" height="29" fill="#0e8e0e" />
<rect x="1427" y="525" width="3" height="21" fill="#0e8e0e" />
<rect x="1432" y="490" width="1" height="56" fill="#0e8e0e" />
<rect x="1431" y="492" width="3" height="51" fill="#0e8e0e" />
<rect x="1436" y="476" width="1" height="19" fill="#0e8e0e" />
<rect x="1435" y="480" width="3" height="12" fill="#0e8e0e" />
<rect x="1440" y="468" width="1" height="25" fill="#0e8e0e" />
<rect x="1439" y="470" width="3" height="20" fill="#0e8e0e" />
<rect x="1444" y="426" width="1" height="47" fill="#0e8e0e" />
<rect x="1443" y="438" width="3" height="32" fill="#0e8e0e" />
<rect x="1448" y="436" width="1" height="37" fill="#ff2020" />
<rect x="1447" y="438" width="3" height="32" fill="#ff2020" />
<rect x="1452" y="450" width="1" height="65" fill="#ff2020" />
<rect x="1451" y="453" width="3" height="59" fill="#ff2020" />
<rect x="1456" y="488" width="1" height="30" fill="#0e8e0e" />
<rect x="1455" y="490" width="3" height="25" fill="#0e8e0e" />
<rect x="1460" y="488" width="1" height="18" fill="#ff2020" />
<rect x="1459" y="492" width="3" height="8" fill="#ff2020" />
<rect x="1464" y="492" width="1" height="17" fill="#0e8e0e" />
<rect x="1463" y="496" width="3" height="4" fill="#0e8e0e" />
<rect x="1468" y="494" width="1" height="14" fill="#ff2020" />
<rect x="1467" y="497" width="3" height="8" fill="#ff2020" />
<rect x="1472" y="495" width="1" height="12" fill="#0e8e0e" />
<rect x="1471" y="497" width="3" height="6" fill="#0e8e0e" />
<rect x="1476" y="494" width="1" height="12" fill="#ff2020" />
<rect x="1475" y="497" width="3" height="5" fill="#ff2020" />
<rect x="1480" y="498" width="1" height="19" fill="#ff2020" />
<rect x="1479" y="501" width="3" height="13" fill="#ff2020" />
<path d="M1150.0,690.0 C1158.5,688.5 1178.7,684.6 1201.0,681.0 C1223.3,677.4 1254.3,671.6 1284.0,668.3 C1313.7,665.0 1355.3,663.2 1379.0,661.0 C1402.7,658.8 1414.0,657.1 1426.0,654.8 C1438.0,652.5 1441.2,649.9 1451.0,647.0 C1460.8,644.1 1479.3,639.2 1485.0,637.6" fill="none" stroke="#ffffff" stroke-width="3.2" stroke-linejoin="round" shape-rendering="geometricPrecision"/>
<path d="M956.0,676.0 C966.2,675.1 996.8,672.0 1017.5,670.4 C1038.2,668.8 1059.2,667.3 1080.0,666.3 C1100.8,665.3 1125.3,666.6 1142.6,664.2 C1159.9,661.8 1170.1,656.9 1184.0,651.7 C1197.9,646.5 1213.8,639.6 1226.0,633.0 C1238.2,626.4 1246.6,618.2 1257.0,612.0 C1267.4,605.8 1283.1,598.5 1288.3,595.8" fill="none" stroke="#a0d84c" stroke-width="2.2" stroke-linejoin="round" shape-rendering="geometricPrecision"/>
<path d="M1288.3,595.8 C1293.0,598.6 1306.4,607.1 1316.3,612.5 C1326.2,617.9 1339.3,623.8 1347.7,628.2 C1356.1,632.6 1361.3,637.7 1366.5,639.0 C1371.7,640.3 1372.8,639.4 1379.0,636.0 C1385.2,632.6 1396.7,624.8 1404.0,618.8 C1411.3,612.8 1417.2,607.9 1423.0,600.0 C1428.8,592.1 1433.4,580.6 1438.6,571.7 C1443.8,562.8 1449.1,554.0 1454.3,546.7 C1459.5,539.4 1465.2,533.1 1470.0,527.8 C1474.8,522.5 1480.8,516.9 1483.0,514.7" fill="none" stroke="#a0d84c" stroke-width="2.2" stroke-linejoin="round" shape-rendering="geometricPrecision"/>
<polyline points="956.0,670.0 1000.0,668.0 1080.0,666.0 1130.0,664.0 1150.0,660.0 1170.0,652.0 1198.9,640.2 1213.5,629.8 1218.7,622.5 1234.4,604.8 1242.7,599.6 1253.0,590.8 1265.6,588.1 1282.3,589.2 1288.5,587.0 1296.7,612.0 1306.7,646.8 1322.6,647.0 1336.7,640.7 1350.8,632.9 1366.5,637.6 1379.0,631.3 1388.4,609.4 1399.4,590.5 1410.4,581.0 1423.0,579.6 1432.3,540.4 1441.7,509.0 1448.0,471.4 1460.5,484.0 1465.2,499.6 1473.0,497.0 1483.0,501.2" fill="none" stroke="#ffff30" stroke-width="1" stroke-linejoin="round" shape-rendering="geometricPrecision"/>
<path d="M1449,482 L1456,482 L1456,486 L1459,486 L1452.5,492 L1446,486 L1449,486 Z" fill="#ff5a2a" stroke="#fff" stroke-width="1" shape-rendering="geometricPrecision"/>
</g>
<g clip-path="url(#cr3)">
<polyline points="957.0,692.2 961.0,698.1 965.0,701.6 969.0,707.2 973.0,697.4 977.0,692.6 981.0,688.1 985.0,687.1 989.0,696.7 993.0,690.5 997.0,694.7 1001.0,691.0 1005.0,690.4 1009.0,692.8 1013.0,702.3 1017.0,703.5 1021.0,692.5 1025.0,691.1 1029.0,686.7 1033.0,698.0 1037.0,703.7 1041.0,707.0 1045.0,709.2 1049.0,708.8 1053.0,712.5 1057.0,711.5 1061.0,702.1 1065.0,710.1 1069.0,708.8 1073.0,714.5 1077.0,712.2 1081.0,705.1 1085.0,699.0 1089.0,696.7 1093.0,692.5 1097.0,685.5 1101.0,695.4 1105.0,703.0 1109.0,711.9 1113.0,712.1 1117.0,710.0 1121.0,711.4 1125.0,699.8 1129.0,703.5 1133.0,700.9 1137.0,693.9 1141.0,688.7 1145.0,691.0 1149.0,686.2 1153.0,688.0 1157.0,692.1 1161.0,690.3 1165.0,684.0 1169.0,687.0 1173.0,684.0 1177.0,684.0 1181.0,684.0 1185.0,684.0 1189.0,684.0 1193.0,685.3 1197.0,696.3 1201.0,691.6 1205.0,695.2 1209.0,701.4 1213.0,687.4 1217.0,684.0 1221.0,689.1 1225.0,694.6 1229.0,693.7 1233.0,684.0 1237.0,684.0 1241.0,689.7 1245.0,695.1 1249.0,696.7 1253.0,685.8 1257.0,692.2 1261.0,686.5 1265.0,691.1 1269.0,684.0 1273.0,695.5 1277.0,695.1 1281.0,697.4 1285.0,688.8 1289.0,705.3 1293.0,717.3 1297.0,718.0 1301.0,713.9 1305.0,718.7 1309.0,713.9 1313.0,710.1 1317.0,705.2 1321.0,710.5 1325.0,701.6 1329.0,697.9 1333.0,692.0 1337.0,699.1 1341.0,703.3 1345.0,706.3 1349.0,698.5 1353.0,702.6 1357.0,703.9 1361.0,699.3 1365.0,689.2 1369.0,702.8 1373.0,693.9 1377.0,691.5 1381.0,688.7 1385.0,692.9 1389.0,685.1 1393.0,688.8 1397.0,688.9 1401.0,698.3 1405.0,687.5 1409.0,687.4 1413.0,689.7 1417.0,700.1 1421.0,696.9 1425.0,693.8 1429.0,695.4 1433.0,688.8 1437.0,684.0 1441.0,684.0 1445.0,697.2 1449.0,705.7 1453.0,699.8 1457.0,703.9 1461.0,709.6 1465.0,701.5 1469.0,702.1 1473.0,705.9 1477.0,708.5 1481.0,716.0" fill="none" stroke="#d02424" stroke-width="1" stroke-linejoin="round" shape-rendering="geometricPrecision"/>
<polyline points="957.0,696.9 961.0,697.0 965.0,696.8 969.0,698.5 973.0,697.0 977.0,698.3 981.0,699.3 985.0,697.9 989.0,699.1 993.0,699.5 997.0,698.4 1001.0,699.2 1005.0,699.9 1009.0,699.5 1013.0,700.2 1017.0,699.1 1021.0,699.4 1025.0,699.2 1029.0,699.0 1033.0,698.8 1037.0,697.8 1041.0,697.8 1045.0,696.7 1049.0,697.1 1053.0,695.5 1057.0,695.5 1061.0,698.0 1065.0,700.9 1069.0,703.1 1073.0,705.3 1077.0,705.4 1081.0,702.1 1085.0,699.8 1089.0,699.5 1093.0,696.8 1097.0,696.8 1101.0,696.2 1105.0,696.2 1109.0,698.5 1113.0,700.4 1117.0,701.0 1121.0,701.4 1125.0,702.0 1129.0,700.0 1133.0,700.6 1137.0,699.3 1141.0,698.5 1145.0,697.1 1149.0,693.7 1153.0,692.6 1157.0,692.5 1161.0,693.2 1165.0,691.9 1169.0,691.8 1173.0,692.3 1177.0,692.9 1181.0,691.7 1185.0,691.4 1189.0,691.6 1193.0,690.2 1197.0,690.9 1201.0,689.8 1205.0,690.4 1209.0,690.8 1213.0,688.6 1217.0,688.9 1221.0,688.3 1225.0,686.6 1229.0,686.1 1233.0,686.8 1237.0,686.1 1241.0,683.6 1245.0,684.6 1249.0,685.1 1253.0,683.7 1257.0,684.4 1261.0,683.3 1265.0,685.1 1269.0,687.7 1273.0,688.7 1277.0,689.4 1281.0,688.4 1285.0,689.2 1289.0,704.2 1293.0,714.8 1297.0,714.5 1301.0,714.4 1305.0,715.6 1309.0,714.7 1313.0,713.6 1317.0,715.1 1321.0,712.1 1325.0,710.3 1329.0,708.1 1333.0,706.9 1337.0,704.9 1341.0,705.1 1345.0,707.2 1349.0,707.2 1353.0,710.1 1357.0,710.2 1361.0,712.3 1365.0,707.1 1369.0,703.3 1373.0,702.1 1377.0,699.6 1381.0,698.9 1385.0,696.7 1389.0,695.3 1393.0,696.7 1397.0,695.6 1401.0,695.5 1405.0,696.5 1409.0,695.4 1413.0,695.1 1417.0,693.1 1421.0,693.5 1425.0,691.4 1429.0,690.0 1433.0,691.0 1437.0,688.6 1441.0,689.4 1445.0,693.6 1449.0,698.5 1453.0,699.2 1457.0,699.5 1461.0,700.1 1465.0,700.7 1469.0,701.4 1473.0,702.3 1477.0,701.3 1481.0,701.1 1484.0,702.0" fill="none" stroke="#ffffff" stroke-width="2" stroke-linejoin="round" shape-rendering="geometricPrecision"/>
</g>
<rect x="956" y="413" width="661" height="1" fill="#fff" />
<rect x="956" y="681" width="661" height="1" fill="#fff" />
<rect x="956" y="683" width="661" height="1" fill="#fff" />
<rect x="956" y="725" width="661" height="1" fill="#fff" />
<rect x="956" y="413" width="1" height="269" fill="#fff" />
<rect x="1616" y="413" width="1" height="269" fill="#fff" />
<rect x="956" y="683" width="1" height="43" fill="#fff" />
<rect x="1616" y="683" width="1" height="43" fill="#fff" />
<path d="M1481,414 L1489,414 L1485,419 Z" fill="#fff" shape-rendering="geometricPrecision"/>
<path d="M961,418 L968,418 L964.5,422 Z" fill="#fff" shape-rendering="geometricPrecision"/>
<text x="971" y="424" font-size="9.5" fill="#fff" text-anchor="start" font-weight="normal" textLength="207" lengthAdjust="spacing" shape-rendering="geometricPrecision">USDRUR,M15  71.7785 71.7785 71.7780 71.7780</text>
<text x="961" y="488" font-size="9.5" fill="#fff" text-anchor="start" font-weight="normal" textLength="34" lengthAdjust="spacing" >sell 0.20</text>
<text x="961" y="576" font-size="9.5" fill="#fff" text-anchor="start" font-weight="normal" >tp</text>
<text x="958" y="696" font-size="9.5" fill="#fff" text-anchor="start" font-weight="normal" textLength="114" lengthAdjust="spacing" >RSI(13) 56.01 RSI(3) 22.80</text>
<rect x="1616" y="426" width="5" height="1" fill="#fff" />
<text x="1621" y="429.5" font-size="9.5" fill="#fff" text-anchor="start" font-weight="normal" textLength="33" lengthAdjust="spacing" >79.1330</text>
<rect x="1616" y="459" width="5" height="1" fill="#fff" />
<text x="1621" y="462.5" font-size="9.5" fill="#fff" text-anchor="start" font-weight="normal" textLength="33" lengthAdjust="spacing" >76.3645</text>
<rect x="1616" y="491" width="5" height="1" fill="#fff" />
<text x="1621" y="494.5" font-size="9.5" fill="#fff" text-anchor="start" font-weight="normal" textLength="33" lengthAdjust="spacing" >73.5960</text>
<rect x="1616" y="522" width="5" height="1" fill="#fff" />
<text x="1621" y="525.5" font-size="9.5" fill="#fff" text-anchor="start" font-weight="normal" textLength="33" lengthAdjust="spacing" >70.8275</text>
<rect x="1616" y="554" width="5" height="1" fill="#fff" />
<text x="1621" y="557.5" font-size="9.5" fill="#fff" text-anchor="start" font-weight="normal" textLength="33" lengthAdjust="spacing" >68.0590</text>
<rect x="1616" y="586" width="5" height="1" fill="#fff" />
<text x="1621" y="589.5" font-size="9.5" fill="#fff" text-anchor="start" font-weight="normal" textLength="33" lengthAdjust="spacing" >65.2905</text>
<rect x="1616" y="618" width="5" height="1" fill="#fff" />
<text x="1621" y="621.5" font-size="9.5" fill="#fff" text-anchor="start" font-weight="normal" textLength="33" lengthAdjust="spacing" >62.5220</text>
<rect x="1616" y="650" width="5" height="1" fill="#fff" />
<text x="1621" y="653.5" font-size="9.5" fill="#fff" text-anchor="start" font-weight="normal" textLength="33" lengthAdjust="spacing" >59.7535</text>
<rect x="1616" y="683" width="5" height="1" fill="#fff" />
<text x="1622" y="692" font-size="9.5" fill="#fff" text-anchor="start" font-weight="normal" textLength="27" lengthAdjust="spacing" >100.00</text>
<rect x="1616" y="698" width="5" height="1" fill="#fff" />
<text x="1622" y="702" font-size="9.5" fill="#fff" text-anchor="start" font-weight="normal" textLength="23" lengthAdjust="spacing" >65.00</text>
<rect x="1616" y="711" width="5" height="1" fill="#fff" />
<text x="1622" y="715" font-size="9.5" fill="#fff" text-anchor="start" font-weight="normal" textLength="23" lengthAdjust="spacing" >35.00</text>
<rect x="1616" y="724" width="5" height="1" fill="#fff" />
<text x="1622" y="723" font-size="9.5" fill="#fff" text-anchor="start" font-weight="normal" textLength="18" lengthAdjust="spacing" >0.00</text>
<rect x="1619" y="501" width="39" height="11" fill="#d01818" />
<text x="1621" y="510" font-size="9.5" fill="#000" text-anchor="start" font-weight="normal" textLength="33" lengthAdjust="spacing" >72.4265</text>
<rect x="1619" y="506" width="39" height="11" fill="#fff" />
<text x="1621" y="515" font-size="9.5" fill="#000" text-anchor="start" font-weight="normal" textLength="33" lengthAdjust="spacing" >71.7780</text>
<rect x="956" y="725" width="1" height="5" fill="#fff" />
<text x="957" y="738" font-size="9.5" fill="#fff" text-anchor="start" font-weight="normal" textLength="50" lengthAdjust="spacing" >12 Dec 2014</text>
<rect x="1020" y="725" width="1" height="5" fill="#fff" />
<text x="1021" y="738" font-size="9.5" fill="#fff" text-anchor="start" font-weight="normal" textLength="53" lengthAdjust="spacing" >12 Dec 23:30</text>
<rect x="1084" y="725" width="1" height="5" fill="#fff" />
<text x="1085" y="738" font-size="9.5" fill="#fff" text-anchor="start" font-weight="normal" textLength="53" lengthAdjust="spacing" >15 Dec 10:30</text>
<rect x="1148" y="725" width="1" height="5" fill="#fff" />
<text x="1149" y="738" font-size="9.5" fill="#fff" text-anchor="start" font-weight="normal" textLength="53" lengthAdjust="spacing" >15 Dec 14:30</text>
<rect x="1211" y="725" width="1" height="5" fill="#fff" />
<text x="1212" y="738" font-size="9.5" fill="#fff" text-anchor="start" font-weight="normal" textLength="53" lengthAdjust="spacing" >15 Dec 18:30</text>
<rect x="1275" y="725" width="1" height="5" fill="#fff" />
<text x="1276" y="738" font-size="9.5" fill="#fff" text-anchor="start" font-weight="normal" textLength="53" lengthAdjust="spacing" >15 Dec 23:30</text>
<rect x="1339" y="725" width="1" height="5" fill="#fff" />
<text x="1340" y="738" font-size="9.5" fill="#fff" text-anchor="start" font-weight="normal" textLength="53" lengthAdjust="spacing" >16 Dec 08:15</text>
<rect x="1403" y="725" width="1" height="5" fill="#fff" />
<text x="1404" y="738" font-size="9.5" fill="#fff" text-anchor="start" font-weight="normal" textLength="53" lengthAdjust="spacing" >16 Dec 12:30</text>
<rect x="1467" y="725" width="1" height="5" fill="#fff" />
<text x="1468" y="738" font-size="9.5" fill="#fff" text-anchor="start" font-weight="normal" textLength="53" lengthAdjust="spacing" >16 Dec 16:30</text>
<rect x="1476.5" y="641.5" width="119" height="18" fill="#fff" stroke="#b01818" stroke-width="1.5"/>
<text x="1536.0" y="655" font-size="12.5" fill="#c02020" text-anchor="middle" font-weight="normal" >15 m 0 s</text>
<rect x="150" y="757" width="1529" height="20" fill="#f0f0f0" />
<rect x="150" y="757" width="1529" height="1" fill="#1e1e1e" />
<rect x="150" y="776" width="1529" height="1" fill="#ffffff" />
<rect x="150" y="757" width="1" height="20" fill="#a0a0a0" />
<rect x="261" y="762" width="1" height="10" fill="#555" />
<rect x="346" y="762" width="1" height="10" fill="#555" />
<rect x="439" y="762" width="1" height="10" fill="#555" />
<rect x="548" y="762" width="1" height="10" fill="#555" />
<rect x="633" y="762" width="1" height="10" fill="#555" />
<rect x="726" y="762" width="1" height="10" fill="#555" />
<rect x="831" y="762" width="1" height="10" fill="#555" />
<rect x="912" y="762" width="1" height="10" fill="#555" />
<rect x="1001" y="762" width="1" height="10" fill="#555" />
<rect x="1110" y="762" width="1" height="10" fill="#555" />
<rect x="1195" y="762" width="1" height="10" fill="#555" />
<rect x="1288" y="762" width="1" height="10" fill="#555" />
<rect x="1398" y="762" width="1" height="10" fill="#555" />
<rect x="1483" y="757" width="92" height="19" fill="#ffffff" />
<rect x="1483" y="757" width="1" height="19" fill="#000" />
<rect x="1574" y="757" width="1" height="19" fill="#000" />
<rect x="1483" y="775" width="92" height="1" fill="#000" />
<rect x="1483" y="757" width="92" height="1" fill="#000" />
<text x="165" y="772" font-size="12" fill="#555" text-anchor="start" font-weight="normal" textLength="84" lengthAdjust="spacingAndGlyphs" >EURUSD,Weekly</text>
<text x="273" y="772" font-size="12" fill="#555" text-anchor="start" font-weight="normal" textLength="61" lengthAdjust="spacingAndGlyphs" >EURUSD,H4</text>
<text x="358" y="772" font-size="12" fill="#555" text-anchor="start" font-weight="normal" textLength="69" lengthAdjust="spacingAndGlyphs" >EURUSD,M15</text>
<text x="450.5" y="772" font-size="12" fill="#555" text-anchor="start" font-weight="normal" textLength="86" lengthAdjust="spacingAndGlyphs" >USDCHF,Weekly</text>
<text x="559" y="772" font-size="12" fill="#555" text-anchor="start" font-weight="normal" textLength="62" lengthAdjust="spacingAndGlyphs" >USDCHF,H4</text>
<text x="643.5" y="772" font-size="12" fill="#555" text-anchor="start" font-weight="normal" textLength="71" lengthAdjust="spacingAndGlyphs" >USDCHF,M15</text>
<text x="738.5" y="772" font-size="12" fill="#555" text-anchor="start" font-weight="normal" textLength="80" lengthAdjust="spacingAndGlyphs" >USDJPY,Weekly</text>
<text x="843.5" y="772" font-size="12" fill="#555" text-anchor="start" font-weight="normal" textLength="57" lengthAdjust="spacingAndGlyphs" >USDJPY,H4</text>
<text x="924.5" y="772" font-size="12" fill="#555" text-anchor="start" font-weight="normal" textLength="65.5" lengthAdjust="spacingAndGlyphs" >USDJPY,M15</text>
<text x="1013.5" y="772" font-size="12" fill="#555" text-anchor="start" font-weight="normal" textLength="84.5" lengthAdjust="spacingAndGlyphs" >GBPUSD,Weekly</text>
<text x="1122.5" y="772" font-size="12" fill="#555" text-anchor="start" font-weight="normal" textLength="60.5" lengthAdjust="spacingAndGlyphs" >GBPUSD,H4</text>
<text x="1207" y="772" font-size="12" fill="#555" text-anchor="start" font-weight="normal" textLength="69.5" lengthAdjust="spacingAndGlyphs" >GBPUSD,M15</text>
<text x="1300" y="772" font-size="12" fill="#555" text-anchor="start" font-weight="normal" textLength="85" lengthAdjust="spacingAndGlyphs" >USDRUR,Weekly</text>
<text x="1409.5" y="772" font-size="12" fill="#555" text-anchor="start" font-weight="normal" textLength="60" lengthAdjust="spacingAndGlyphs" >USDRUR,H4</text>
<text x="1494" y="771" font-size="12" fill="#000" text-anchor="start" font-weight="normal" textLength="69.5" lengthAdjust="spacingAndGlyphs" >USDRUR,M15</text>
<path d="M1646,763 L1641,767 L1646,771 Z" fill="#8a8a8a"/>
<path d="M1663,763 L1668,767 L1663,771 Z" fill="#8a8a8a"/>
<rect x="0" y="777" width="1679" height="69" fill="#f0f0f0" />
<rect x="0" y="777" width="1679" height="1" fill="#e2e2e2" />
<path d="M4,784 L10,789 M10,784 L4,789" stroke="#000" stroke-width="1.8" shape-rendering="geometricPrecision"/>
<rect x="1" y="795" width="13" height="51" fill="#aec8e4" />
<text x="0" y="0" font-size="12" fill="#222" text-anchor="end" transform="translate(12,820) rotate(-90)">Инструменты</text>
<rect x="15" y="781" width="1664" height="65" fill="#ffffff" />
<rect x="15" y="781" width="1664" height="1" fill="#a0a0a0" />
<rect x="15" y="781" width="1" height="65" fill="#a0a0a0" />
<rect x="16" y="782" width="1660" height="22" fill="url(#hdr)" />
<rect x="16" y="804" width="1660" height="1" fill="#e0e0e0" />
<rect x="196" y="782" width="1" height="22" fill="#e3e3e3" />
<rect x="321" y="782" width="1" height="22" fill="#e3e3e3" />
<rect x="441" y="782" width="1" height="22" fill="#e3e3e3" />
<rect x="581" y="782" width="1" height="22" fill="#e3e3e3" />
<rect x="762" y="782" width="1" height="22" fill="#e3e3e3" />
<rect x="901" y="782" width="1" height="22" fill="#e3e3e3" />
<rect x="1039" y="782" width="1" height="22" fill="#e3e3e3" />
<rect x="1178" y="782" width="1" height="22" fill="#e3e3e3" />
<rect x="1318" y="782" width="1" height="22" fill="#e3e3e3" />
<rect x="1456" y="782" width="1" height="22" fill="#e3e3e3" />
<rect x="1676" y="782" width="1" height="22" fill="#e3e3e3" />
<text x="22" y="798" font-size="12" fill="#000" text-anchor="start" font-weight="normal" textLength="43" lengthAdjust="spacingAndGlyphs" >Символ</text>
<text x="203" y="798" font-size="12" fill="#000" text-anchor="start" font-weight="normal" textLength="35" lengthAdjust="spacingAndGlyphs" >Ордер</text>
<text x="416" y="798" font-size="12" fill="#000" text-anchor="end" font-weight="normal" textLength="35" lengthAdjust="spacingAndGlyphs" >Время</text>
<path d="M428,791 L436,791 L432,797 Z" fill="none" stroke="#777" stroke-width="0.8" shape-rendering="geometricPrecision"/>
<text x="575" y="798" font-size="12" fill="#000" text-anchor="end" font-weight="normal" textLength="21" lengthAdjust="spacingAndGlyphs" >Тип</text>
<text x="756" y="798" font-size="12" fill="#000" text-anchor="end" font-weight="normal" textLength="38" lengthAdjust="spacingAndGlyphs" >Объем</text>
<text x="895" y="798" font-size="12" fill="#000" text-anchor="end" font-weight="normal" textLength="28" lengthAdjust="spacingAndGlyphs" >Цена</text>
<text x="1033" y="798" font-size="12" fill="#000" text-anchor="end" font-weight="normal" textLength="25" lengthAdjust="spacingAndGlyphs" >S / L</text>
<text x="1172" y="798" font-size="12" fill="#000" text-anchor="end" font-weight="normal" textLength="25" lengthAdjust="spacingAndGlyphs" >T / P</text>
<text x="1311" y="798" font-size="12" fill="#000" text-anchor="end" font-weight="normal" textLength="28" lengthAdjust="spacingAndGlyphs" >Цена</text>
<text x="1450" y="798" font-size="12" fill="#000" text-anchor="end" font-weight="normal" textLength="29" lengthAdjust="spacingAndGlyphs" >Своп</text>
<text x="1670" y="798" font-size="12" fill="#000" text-anchor="end" font-weight="normal" textLength="51" lengthAdjust="spacingAndGlyphs" >Прибыль</text>
<rect x="16" y="806" width="1660" height="19" fill="#3399ff" />
<rect x="321" y="806" width="1" height="19" fill="#9ccfff" />
<rect x="441" y="806" width="1" height="19" fill="#9ccfff" />
<rect x="581" y="806" width="1" height="19" fill="#9ccfff" />
<rect x="762" y="806" width="1" height="19" fill="#9ccfff" />
<rect x="901" y="806" width="1" height="19" fill="#9ccfff" />
<rect x="1039" y="806" width="1" height="19" fill="#9ccfff" />
<rect x="1178" y="806" width="1" height="19" fill="#9ccfff" />
<rect x="1318" y="806" width="1" height="19" fill="#9ccfff" />
<rect x="1456" y="806" width="1" height="19" fill="#9ccfff" />
<path d="M19.5,808.5 L27,808.5 L30.5,812 L30.5,821.5 L19.5,821.5 Z" fill="#f4f4f4" stroke="#777" stroke-width="1" shape-rendering="geometricPrecision"/>
<circle cx="30.5" cy="819.5" r="3.5" fill="#e02010" stroke="#901000" stroke-width="0.6" shape-rendering="geometricPrecision"/>
<text x="38" y="821" font-size="12.5" fill="#fff" text-anchor="start" font-weight="normal" textLength="35" lengthAdjust="spacingAndGlyphs" >usdrur</text>
<text x="437" y="821" font-size="12" fill="#fff" text-anchor="end" font-weight="normal" textLength="98" lengthAdjust="spacingAndGlyphs" >2014.12.16 15:40:08</text>
<text x="577" y="821" font-size="12" fill="#fff" text-anchor="end" font-weight="normal" textLength="16" lengthAdjust="spacingAndGlyphs" >sell</text>
<text x="757" y="821" font-size="12" fill="#fff" text-anchor="end" font-weight="normal" textLength="21" lengthAdjust="spacingAndGlyphs" >0.20</text>
<text x="896" y="821" font-size="12" fill="#fff" text-anchor="end" font-weight="normal" textLength="38" lengthAdjust="spacingAndGlyphs" >73.5115</text>
<text x="1035" y="821" font-size="12" fill="#fff" text-anchor="end" font-weight="normal" textLength="33" lengthAdjust="spacingAndGlyphs" >0.0000</text>
<text x="1157" y="821" font-size="12" fill="#fff" text-anchor="end" font-weight="normal" textLength="38" lengthAdjust="spacingAndGlyphs" >65.9739</text>
<path d="M1165,812 L1172,819 M1172,812 L1165,819" stroke="#b8dcff" stroke-width="1.6" shape-rendering="geometricPrecision"/>
<text x="1314" y="821" font-size="12" fill="#fff" text-anchor="end" font-weight="normal" textLength="38" lengthAdjust="spacingAndGlyphs" >72.1265</text>
<text x="1452" y="821" font-size="12" fill="#fff" text-anchor="end" font-weight="normal" textLength="21" lengthAdjust="spacingAndGlyphs" >0.00</text>
<text x="1653" y="821" font-size="12" fill="#fff" text-anchor="end" font-weight="normal" textLength="32" lengthAdjust="spacingAndGlyphs" >385.91</text>
<path d="M1662,812 L1669,819 M1669,812 L1662,819" stroke="#b8dcff" stroke-width="1.6" shape-rendering="geometricPrecision"/>
<rect x="16" y="825" width="1660" height="21" fill="#c8c8c8" />
<rect x="20" y="828" width="13" height="14" fill="#ffffff" stroke="#555" stroke-width="1"/>
<path d="M26.5,830 L31,835 L28.5,835 L28.5,840 L24.5,840 L24.5,835 L22,835 Z" fill="#30c030" stroke="#1a8a1a" stroke-width="0.6" shape-rendering="geometricPrecision"/>
<text x="37.5" y="841" font-size="12.5" fill="#000" text-anchor="start" font-weight="bold" textLength="111.8" lengthAdjust="spacingAndGlyphs" >Баланс: 895.80 USD</text>
<text x="154.8" y="841" font-size="12.5" fill="#000" text-anchor="start" font-weight="bold" textLength="107.2" lengthAdjust="spacingAndGlyphs" >Средства: 1 281.71</text>
<text x="267.3" y="841" font-size="12.5" fill="#000" text-anchor="start" font-weight="bold" textLength="84.7" lengthAdjust="spacingAndGlyphs" >Маржа: 200.00</text>
<text x="357.4" y="841" font-size="12.5" fill="#000" text-anchor="start" font-weight="bold" textLength="157.2" lengthAdjust="spacingAndGlyphs" >Свободная маржа: 1 081.71</text>
<text x="520" y="841" font-size="12.5" fill="#000" text-anchor="start" font-weight="bold" textLength="149.6" lengthAdjust="spacingAndGlyphs" >Уровень маржи: 640.86 %</text>
<text x="1653" y="841" font-size="12.5" fill="#000" text-anchor="end" font-weight="bold" textLength="38" lengthAdjust="spacingAndGlyphs" >385.91</text>
</svg></body></html>
